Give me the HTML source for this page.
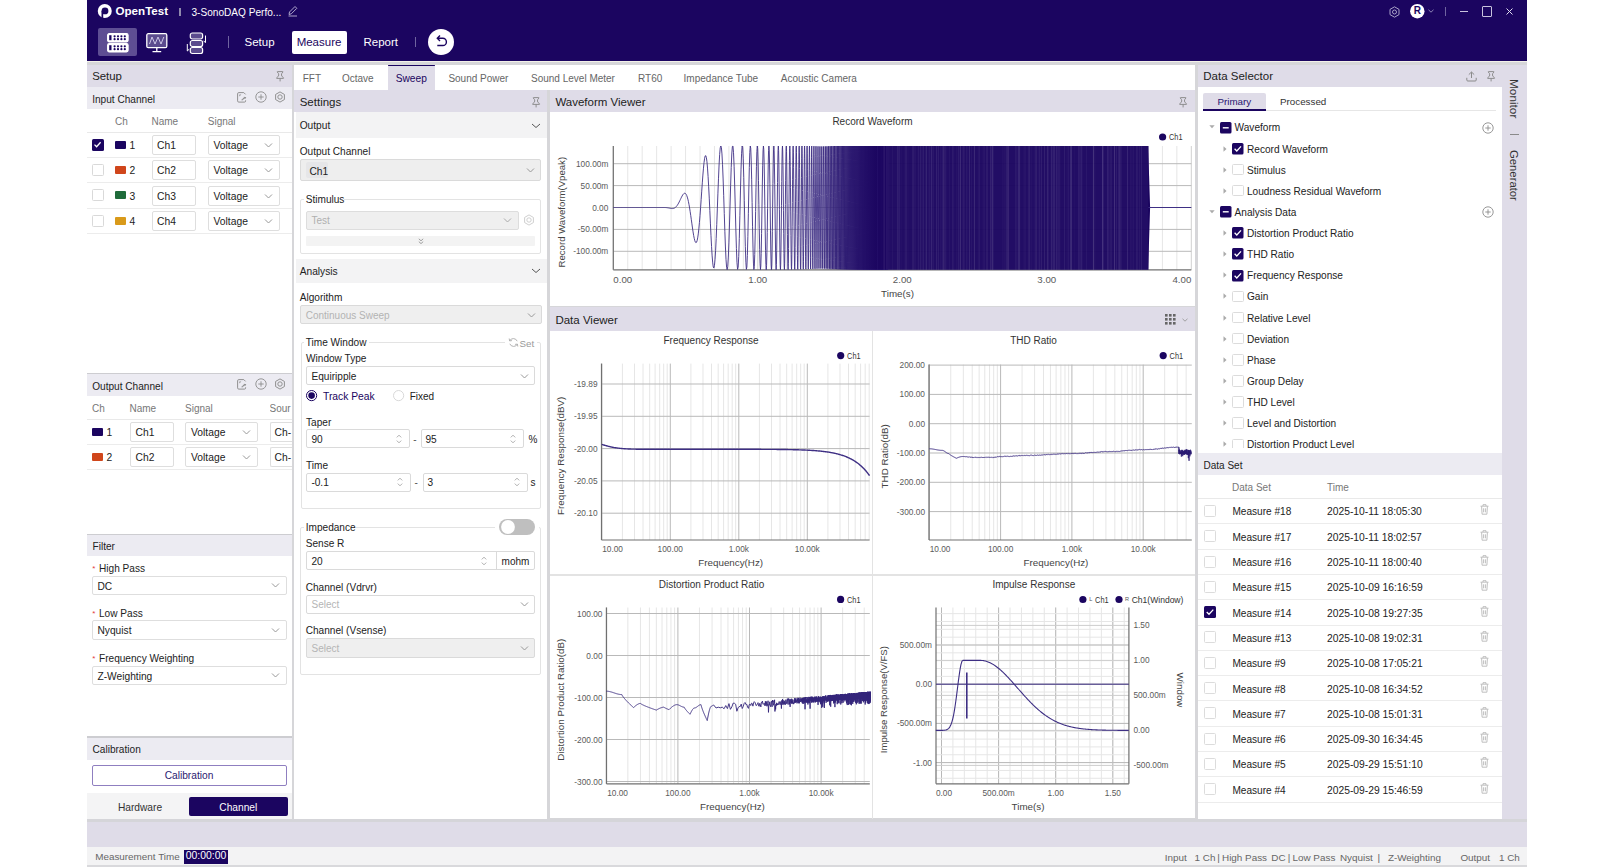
<!DOCTYPE html><html><head><meta charset="utf-8"><style>
html,body{margin:0;padding:0;width:1602px;height:867px;overflow:hidden;background:#fff}
body{position:relative;font-family:"Liberation Sans",sans-serif}
div,svg{position:absolute;box-sizing:content-box}
.t{white-space:nowrap}
svg text{font-family:"Liberation Sans",sans-serif}
</style></head><body>
<div style="left:87px;top:61px;width:1440px;height:806px;background:#d6d6d9"></div>
<div style="left:87px;top:61px;width:1440px;height:1.3px;background:#f3f1e9"></div>
<div style="left:87px;top:0px;width:1440px;height:61px;background:#1b0560"></div>
<svg style="position:absolute;left:97px;top:4px;overflow:visible;" width="15" height="15" viewBox="0 0 15 15"><circle cx="7.75" cy="7" r="7" fill="#fff"/><circle cx="8" cy="6.9" r="3.4" fill="#1b0560"/><rect x="4.5" y="6.9" width="1.7" height="8" fill="#1b0560"/></svg>
<div class="t" style="left:115.5px;top:3.20px;height:16px;line-height:16px;font-size:11.6px;color:#fff;font-weight:700;">OpenTest</div>
<div style="left:179px;top:7.5px;width:1.5px;height:8px;background:#8f89ad"></div>
<div class="t" style="left:191.5px;top:4.50px;height:16px;line-height:16px;font-size:10.1px;color:#fff;font-weight:400;">3-SonoDAQ Perfo...</div>
<svg style="position:absolute;left:287px;top:5px;overflow:visible;" width="11" height="12" viewBox="0 0 11 12"><path d="M2 9.5 L2.5 7 L8 1.5 L9.8 3.3 L4.3 8.8 Z M1.5 11 H10" fill="none" stroke="#bdb6d6" stroke-width="0.9"/></svg>
<div style="left:98px;top:28px;width:39px;height:28px;background:#5e4e93;border-radius:2px"></div>
<svg style="position:absolute;left:107px;top:33px;overflow:visible;" width="22" height="20" viewBox="0 0 22 20"><rect x="0.6" y="0.6" width="20.5" height="8.3" rx="1.6" fill="#fff"/><rect x="0.6" y="10.6" width="20.5" height="8.3" rx="1.6" fill="#fff"/><g fill="none" stroke="#fff" stroke-width="1.1"><rect x="0.6" y="0.6" width="20.5" height="8.3" rx="1.6"/><rect x="0.6" y="10.6" width="20.5" height="8.3" rx="1.6"/></g><rect x="2.2" y="2.2" width="2.3" height="5" fill="#1b0560"/><rect x="2.2" y="12.2" width="2.3" height="5" fill="#1b0560"/><circle cx="7.6" cy="3.3" r="1.1" fill="#1b0560"/><circle cx="11.0" cy="3.3" r="1.1" fill="#1b0560"/><circle cx="14.4" cy="3.3" r="1.1" fill="#1b0560"/><circle cx="17.8" cy="3.3" r="1.1" fill="#1b0560"/><circle cx="7.6" cy="6.2" r="1.1" fill="#1b0560"/><circle cx="11.0" cy="6.2" r="1.1" fill="#1b0560"/><circle cx="14.4" cy="6.2" r="1.1" fill="#1b0560"/><circle cx="17.8" cy="6.2" r="1.1" fill="#1b0560"/><circle cx="7.6" cy="13.3" r="1.1" fill="#1b0560"/><circle cx="11.0" cy="13.3" r="1.1" fill="#1b0560"/><circle cx="14.4" cy="13.3" r="1.1" fill="#1b0560"/><circle cx="17.8" cy="13.3" r="1.1" fill="#1b0560"/><circle cx="7.6" cy="16.2" r="1.1" fill="#1b0560"/><circle cx="11.0" cy="16.2" r="1.1" fill="#1b0560"/><circle cx="14.4" cy="16.2" r="1.1" fill="#1b0560"/><circle cx="17.8" cy="16.2" r="1.1" fill="#1b0560"/></svg>
<svg style="position:absolute;left:146px;top:33px;overflow:visible;" width="22" height="20" viewBox="0 0 22 20"><rect x="0.8" y="0.7" width="20" height="14" rx="1.5" fill="#5b4b8e" stroke="#fff" stroke-width="1.3"/><path d="M3.5 11 L6 4 L9 11 L12 4 L15 11 L17.8 4" fill="none" stroke="#d8d2ee" stroke-width="0.9"/><path d="M10.8 14.7 V18.3 M6.5 18.6 H15.2" stroke="#fff" stroke-width="1.3"/></svg>
<svg style="position:absolute;left:185px;top:32px;overflow:visible;" width="23" height="22" viewBox="0 0 23 22"><g fill="#5b4b8e" stroke="#fff" stroke-width="1.2"><rect x="5.3" y="1" width="12.3" height="6" rx="2"/><rect x="5.3" y="8.5" width="12.3" height="6" rx="2"/><rect x="5.3" y="15.5" width="12.3" height="6" rx="2"/></g><path d="M20.5 3.5 V10.5 M18.6 8.8 L20.5 10.8" fill="none" stroke="#fff" stroke-width="1"/><path d="M2.3 12 V19 M2.3 19 L4.2 17.2" fill="none" stroke="#fff" stroke-width="1"/></svg>
<div style="left:227.5px;top:36px;width:1px;height:12px;background:#6f64a0"></div>
<div class="t" style="left:244.5px;top:34.00px;height:16px;line-height:16px;font-size:11.5px;color:#fff;font-weight:400;">Setup</div>
<div style="left:291.5px;top:31px;width:55px;height:22.5px;background:#fff;border-radius:2px"></div>
<div class="t" style="left:19px;width:600px;text-align:center;top:34.00px;height:16px;line-height:16px;font-size:11.5px;color:#1b0560;font-weight:400;">Measure</div>
<div class="t" style="left:363.5px;top:34.00px;height:16px;line-height:16px;font-size:11.5px;color:#fff;font-weight:400;">Report</div>
<div style="left:415px;top:37px;width:1px;height:10px;background:#6f64a0"></div>
<svg style="position:absolute;left:428px;top:28.5px;overflow:visible;" width="26" height="26" viewBox="0 0 26 26"><circle cx="13" cy="13" r="13" fill="#fff"/><path d="M9.5 9.3 H14.8 A3.6 3.6 0 0 1 14.8 16.5 H9.3 M12 6.6 L9.3 9.3 L12 12" fill="none" stroke="#1b0560" stroke-width="1.4"/></svg>
<svg style="position:absolute;left:1389px;top:5.5px;overflow:visible;" width="11" height="12" viewBox="0 0 11 12"><path d="M5.5 0.8 L10 3.4 V8.6 L5.5 11.2 L1 8.6 V3.4 Z" fill="none" stroke="#aaa3c8" stroke-width="1"/><circle cx="5.5" cy="6" r="2" fill="none" stroke="#aaa3c8" stroke-width="1"/></svg>
<svg style="position:absolute;left:1410px;top:4px;overflow:visible;" width="15" height="15" viewBox="0 0 15 15"><circle cx="7.3" cy="7.2" r="7.2" fill="#fff"/></svg>
<div class="t" style="left:1117.3px;width:600px;text-align:center;top:3.40px;height:16px;line-height:16px;font-size:10px;color:#1b0560;font-weight:700;">R</div>
<svg style="position:absolute;left:1428px;top:9px;overflow:visible;" width="6" height="4" viewBox="0 0 6 4"><path d="M0.5 0.8 L3 3.2 L5.5 0.8" fill="none" stroke="#9c94c0" stroke-width="0.9"/></svg>
<div style="left:1445px;top:7px;width:1px;height:9px;background:#6f64a0"></div>
<div style="left:1460px;top:11px;width:8px;height:1px;background:#c8c3dd"></div>
<div style="left:1481.5px;top:6px;width:8px;height:8.5px;border:1px solid #c8c3dd;border-radius:1px"></div>
<svg style="position:absolute;left:1505.5px;top:8px;overflow:visible;" width="7" height="7" viewBox="0 0 7 7"><path d="M0.5 0.5 L6.5 6.5 M6.5 0.5 L0.5 6.5" stroke="#e0dcef" stroke-width="1"/></svg>
<div style="left:87px;top:65px;width:204.7px;height:22px;background:#dfdce8"></div>
<div class="t" style="left:92.2px;top:68.00px;height:16px;line-height:16px;font-size:11.4px;color:#222222;font-weight:400;">Setup</div>
<svg style="position:absolute;left:275.5px;top:70.6px;overflow:visible;" width="9" height="11" viewBox="0 0 9 11"><path d="M1.2 1 Q1 0.6 1.6 0.6 H6.6 Q7.2 0.6 7 1 Q5.4 2.2 5.4 4 Q5.6 5.6 7.6 6.8 Q7.8 7.4 7.2 7.4 H1 Q0.4 7.4 0.6 6.8 Q2.6 5.6 2.8 4 Q2.8 2.2 1.2 1 Z M4.1 7.4 V10.4" fill="none" stroke="#8a8a8a" stroke-width="0.95" stroke-linejoin="round"/></svg>
<div style="left:87px;top:87px;width:204.7px;height:286px;background:#fff"></div>
<div style="left:87px;top:87px;width:204.7px;height:22px;background:#ecebf2"></div>
<div class="t" style="left:92.2px;top:91.50px;height:16px;line-height:16px;font-size:10.1px;color:#222222;font-weight:400;">Input Channel</div>
<svg style="position:absolute;left:236.6px;top:91.6px;overflow:visible;" width="11" height="11" viewBox="0 0 11 11"><path d="M6.8 0.6 H1.8 Q0.6 0.6 0.6 1.8 V8.9 Q0.6 10.1 1.8 10.1 H7.5 Q8.6 10.1 8.6 9 V8.3 M6.8 0.6 L8.6 2.4" fill="none" stroke="#8c8c8c" stroke-width="0.95"/><path d="M2.4 2.4 H4.3 L2.4 4.6 Z" fill="#8c8c8c"/><path d="M4 7.6 Q5.2 7.9 5.6 6.8 Q6 5.6 7.4 5.6 L6.8 4.7 L9.3 5.3 L8 7.3 L7.6 6.4 Q6.6 6.5 6.4 7.5 Q6 8.6 4.4 8.3 Z" fill="#8c8c8c"/></svg>
<svg style="position:absolute;left:254.5px;top:91.3px;overflow:visible;" width="12" height="12" viewBox="0 0 12 12"><circle cx="6" cy="6" r="5.2" fill="none" stroke="#8c8c8c" stroke-width="0.9"/><path d="M6 3.3 V8.7 M3.3 6 H8.7" stroke="#8c8c8c" stroke-width="0.9"/></svg>
<svg style="position:absolute;left:274.3px;top:91px;overflow:visible;" width="12" height="12" viewBox="0 0 12 12"><path d="M6 0.9 L10.4 3.45 V8.55 L6 11.1 L1.6 8.55 V3.45 Z" fill="none" stroke="#8c8c8c" stroke-width="0.95" stroke-linejoin="round"/><circle cx="6" cy="6" r="2.2" fill="none" stroke="#8c8c8c" stroke-width="0.95"/></svg>
<div class="t" style="left:115px;top:114.00px;height:16px;line-height:16px;font-size:10px;color:#777777;font-weight:400;">Ch</div>
<div class="t" style="left:151.5px;top:114.00px;height:16px;line-height:16px;font-size:10px;color:#777777;font-weight:400;">Name</div>
<div class="t" style="left:207.8px;top:114.00px;height:16px;line-height:16px;font-size:10px;color:#777777;font-weight:400;">Signal</div>
<div style="left:87px;top:131.5px;width:204.7px;height:1px;background:#e9e9e9"></div>
<svg style="position:absolute;left:92px;top:138.79999999999998px;overflow:visible;" width="12" height="12" viewBox="0 0 12 12"><rect x="0" y="0" width="12" height="12" rx="1.5" fill="#1b0560"/><path d="M2.5 5.6 L4.6 7.8 L8.6 3.3" fill="none" stroke="#fff" stroke-width="1.3"/></svg>
<div style="left:115px;top:140.6px;width:11px;height:8px;background:#1b0560;border-radius:1px"></div>
<div class="t" style="left:129.5px;top:138.10px;height:16px;line-height:16px;font-size:10.3px;color:#222222;font-weight:400;">1</div>
<div style="left:151.5px;top:135.1px;width:42.5px;height:18px;border:1px solid #dedede;border-radius:2px;background:#fff"></div>
<div class="t" style="left:157px;top:138.10px;height:16px;line-height:16px;font-size:10.3px;color:#222222;font-weight:400;">Ch1</div>
<div style="left:207.8px;top:135.1px;width:70.5px;height:18px;border:1px solid #dedede;border-radius:2px;background:#fff"></div>
<div class="t" style="left:213.5px;top:138.10px;height:16px;line-height:16px;font-size:10.3px;color:#222222;font-weight:400;">Voltage</div>
<svg style="position:absolute;left:264.0px;top:142.1px;overflow:visible;" width="9.0" height="7.0" viewBox="0 0 9.0 7.0"><path d="M1 1.5 L4.5 5.0 L8.0 1.5" fill="none" stroke="#999" stroke-width="1"/></svg>
<div style="left:87px;top:157.0px;width:204.7px;height:1px;background:#ececec"></div>
<div style="left:92px;top:164.1px;width:10px;height:10px;border:1px solid #d9d9d9;border-radius:1.5px;background:#fff"></div>
<div style="left:115px;top:165.9px;width:11px;height:8px;background:#d0461b;border-radius:1px"></div>
<div class="t" style="left:129.5px;top:163.40px;height:16px;line-height:16px;font-size:10.3px;color:#222222;font-weight:400;">2</div>
<div style="left:151.5px;top:160.4px;width:42.5px;height:18px;border:1px solid #dedede;border-radius:2px;background:#fff"></div>
<div class="t" style="left:157px;top:163.40px;height:16px;line-height:16px;font-size:10.3px;color:#222222;font-weight:400;">Ch2</div>
<div style="left:207.8px;top:160.4px;width:70.5px;height:18px;border:1px solid #dedede;border-radius:2px;background:#fff"></div>
<div class="t" style="left:213.5px;top:163.40px;height:16px;line-height:16px;font-size:10.3px;color:#222222;font-weight:400;">Voltage</div>
<svg style="position:absolute;left:264.0px;top:167.4px;overflow:visible;" width="9.0" height="7.0" viewBox="0 0 9.0 7.0"><path d="M1 1.5 L4.5 5.0 L8.0 1.5" fill="none" stroke="#999" stroke-width="1"/></svg>
<div style="left:87px;top:182.3px;width:204.7px;height:1px;background:#ececec"></div>
<div style="left:92px;top:189.39999999999998px;width:10px;height:10px;border:1px solid #d9d9d9;border-radius:1.5px;background:#fff"></div>
<div style="left:115px;top:191.2px;width:11px;height:8px;background:#1f6b3a;border-radius:1px"></div>
<div class="t" style="left:129.5px;top:188.70px;height:16px;line-height:16px;font-size:10.3px;color:#222222;font-weight:400;">3</div>
<div style="left:151.5px;top:185.7px;width:42.5px;height:18px;border:1px solid #dedede;border-radius:2px;background:#fff"></div>
<div class="t" style="left:157px;top:188.70px;height:16px;line-height:16px;font-size:10.3px;color:#222222;font-weight:400;">Ch3</div>
<div style="left:207.8px;top:185.7px;width:70.5px;height:18px;border:1px solid #dedede;border-radius:2px;background:#fff"></div>
<div class="t" style="left:213.5px;top:188.70px;height:16px;line-height:16px;font-size:10.3px;color:#222222;font-weight:400;">Voltage</div>
<svg style="position:absolute;left:264.0px;top:192.7px;overflow:visible;" width="9.0" height="7.0" viewBox="0 0 9.0 7.0"><path d="M1 1.5 L4.5 5.0 L8.0 1.5" fill="none" stroke="#999" stroke-width="1"/></svg>
<div style="left:87px;top:207.6px;width:204.7px;height:1px;background:#ececec"></div>
<div style="left:92px;top:214.7px;width:10px;height:10px;border:1px solid #d9d9d9;border-radius:1.5px;background:#fff"></div>
<div style="left:115px;top:216.5px;width:11px;height:8px;background:#d99a1a;border-radius:1px"></div>
<div class="t" style="left:129.5px;top:214.00px;height:16px;line-height:16px;font-size:10.3px;color:#222222;font-weight:400;">4</div>
<div style="left:151.5px;top:211.0px;width:42.5px;height:18px;border:1px solid #dedede;border-radius:2px;background:#fff"></div>
<div class="t" style="left:157px;top:214.00px;height:16px;line-height:16px;font-size:10.3px;color:#222222;font-weight:400;">Ch4</div>
<div style="left:207.8px;top:211.0px;width:70.5px;height:18px;border:1px solid #dedede;border-radius:2px;background:#fff"></div>
<div class="t" style="left:213.5px;top:214.00px;height:16px;line-height:16px;font-size:10.3px;color:#222222;font-weight:400;">Voltage</div>
<svg style="position:absolute;left:264.0px;top:218.0px;overflow:visible;" width="9.0" height="7.0" viewBox="0 0 9.0 7.0"><path d="M1 1.5 L4.5 5.0 L8.0 1.5" fill="none" stroke="#999" stroke-width="1"/></svg>
<div style="left:87px;top:232.9px;width:204.7px;height:1px;background:#ececec"></div>
<div style="left:87px;top:372.5px;width:204.7px;height:2px;background:#cdcdd1"></div>
<div style="left:87px;top:374px;width:204.7px;height:159.7px;background:#fff"></div>
<div style="left:87px;top:374px;width:204.7px;height:22px;background:#ecebf2"></div>
<div class="t" style="left:92.2px;top:378.50px;height:16px;line-height:16px;font-size:10.1px;color:#222222;font-weight:400;">Output Channel</div>
<svg style="position:absolute;left:236.6px;top:378.6px;overflow:visible;" width="11" height="11" viewBox="0 0 11 11"><path d="M6.8 0.6 H1.8 Q0.6 0.6 0.6 1.8 V8.9 Q0.6 10.1 1.8 10.1 H7.5 Q8.6 10.1 8.6 9 V8.3 M6.8 0.6 L8.6 2.4" fill="none" stroke="#8c8c8c" stroke-width="0.95"/><path d="M2.4 2.4 H4.3 L2.4 4.6 Z" fill="#8c8c8c"/><path d="M4 7.6 Q5.2 7.9 5.6 6.8 Q6 5.6 7.4 5.6 L6.8 4.7 L9.3 5.3 L8 7.3 L7.6 6.4 Q6.6 6.5 6.4 7.5 Q6 8.6 4.4 8.3 Z" fill="#8c8c8c"/></svg>
<svg style="position:absolute;left:254.5px;top:378.3px;overflow:visible;" width="12" height="12" viewBox="0 0 12 12"><circle cx="6" cy="6" r="5.2" fill="none" stroke="#8c8c8c" stroke-width="0.9"/><path d="M6 3.3 V8.7 M3.3 6 H8.7" stroke="#8c8c8c" stroke-width="0.9"/></svg>
<svg style="position:absolute;left:274.3px;top:378px;overflow:visible;" width="12" height="12" viewBox="0 0 12 12"><path d="M6 0.9 L10.4 3.45 V8.55 L6 11.1 L1.6 8.55 V3.45 Z" fill="none" stroke="#8c8c8c" stroke-width="0.95" stroke-linejoin="round"/><circle cx="6" cy="6" r="2.2" fill="none" stroke="#8c8c8c" stroke-width="0.95"/></svg>
<div style="left:87px;top:396px;width:204.7px;height:80px;overflow:hidden">
</div>
<div class="t" style="left:92px;top:401.00px;height:16px;line-height:16px;font-size:10px;color:#777777;font-weight:400;">Ch</div>
<div class="t" style="left:129.5px;top:401.00px;height:16px;line-height:16px;font-size:10px;color:#777777;font-weight:400;">Name</div>
<div class="t" style="left:185px;top:401.00px;height:16px;line-height:16px;font-size:10px;color:#777777;font-weight:400;">Signal</div>
<div class="t" style="left:269.5px;top:401.00px;height:16px;line-height:16px;font-size:10px;color:#777777;font-weight:400;width:22.2px;overflow:hidden">Sour</div>
<div style="left:87px;top:418.5px;width:204.7px;height:1px;background:#e9e9e9"></div>
<div style="left:92px;top:427.6px;width:11px;height:8px;background:#1b0560;border-radius:1px"></div>
<div class="t" style="left:106.5px;top:425.10px;height:16px;line-height:16px;font-size:10.3px;color:#222222;font-weight:400;">1</div>
<div style="left:129.5px;top:422.1px;width:42px;height:18px;border:1px solid #dedede;border-radius:2px;background:#fff"></div>
<div class="t" style="left:135.5px;top:425.10px;height:16px;line-height:16px;font-size:10.3px;color:#222222;font-weight:400;">Ch1</div>
<div style="left:185px;top:422.1px;width:70.5px;height:18px;border:1px solid #dedede;border-radius:2px;background:#fff"></div>
<div class="t" style="left:191px;top:425.10px;height:16px;line-height:16px;font-size:10.3px;color:#222222;font-weight:400;">Voltage</div>
<svg style="position:absolute;left:241.5px;top:429.1px;overflow:visible;" width="9.0" height="7.0" viewBox="0 0 9.0 7.0"><path d="M1 1.5 L4.5 5.0 L8.0 1.5" fill="none" stroke="#999" stroke-width="1"/></svg>
<div style="left:269.5px;top:422.1px;width:21.2px;height:18px;border:1px solid #dedede;border-right:none;border-radius:2px 0 0 2px;background:#fff"></div>
<div class="t" style="left:274.5px;top:425.10px;height:16px;line-height:16px;font-size:10.3px;color:#222222;font-weight:400;">Ch-</div>
<div style="left:87px;top:443.8px;width:204.7px;height:1px;background:#ececec"></div>
<div style="left:92px;top:452.8px;width:11px;height:8px;background:#d0461b;border-radius:1px"></div>
<div class="t" style="left:106.5px;top:450.30px;height:16px;line-height:16px;font-size:10.3px;color:#222222;font-weight:400;">2</div>
<div style="left:129.5px;top:447.3px;width:42px;height:18px;border:1px solid #dedede;border-radius:2px;background:#fff"></div>
<div class="t" style="left:135.5px;top:450.30px;height:16px;line-height:16px;font-size:10.3px;color:#222222;font-weight:400;">Ch2</div>
<div style="left:185px;top:447.3px;width:70.5px;height:18px;border:1px solid #dedede;border-radius:2px;background:#fff"></div>
<div class="t" style="left:191px;top:450.30px;height:16px;line-height:16px;font-size:10.3px;color:#222222;font-weight:400;">Voltage</div>
<svg style="position:absolute;left:241.5px;top:454.3px;overflow:visible;" width="9.0" height="7.0" viewBox="0 0 9.0 7.0"><path d="M1 1.5 L4.5 5.0 L8.0 1.5" fill="none" stroke="#999" stroke-width="1"/></svg>
<div style="left:269.5px;top:447.3px;width:21.2px;height:18px;border:1px solid #dedede;border-right:none;border-radius:2px 0 0 2px;background:#fff"></div>
<div class="t" style="left:274.5px;top:450.30px;height:16px;line-height:16px;font-size:10.3px;color:#222222;font-weight:400;">Ch-</div>
<div style="left:87px;top:469.0px;width:204.7px;height:1px;background:#ececec"></div>
<div style="left:87px;top:533.5px;width:204.7px;height:2px;background:#cdcdd1"></div>
<div style="left:87px;top:535px;width:204.7px;height:202px;background:#fff"></div>
<div style="left:87px;top:535px;width:204.7px;height:21px;background:#ecebf2"></div>
<div class="t" style="left:92.5px;top:538.50px;height:16px;line-height:16px;font-size:10.1px;color:#222222;font-weight:400;">Filter</div>
<div class="t" style="left:92.3px;top:560.60px;height:16px;line-height:16px;font-size:10px;color:#222222;font-weight:400;"><span style="color:#e23b3b;font-size:8px;position:relative;top:-1px">*</span></div>
<div class="t" style="left:99px;top:560.60px;height:16px;line-height:16px;font-size:10.1px;color:#222222;font-weight:400;">High Pass</div>
<div style="left:92.3px;top:575.6px;width:192.7px;height:17.5px;border:1px solid #dedede;border-radius:2px;background:#fff"></div>
<div class="t" style="left:97.5px;top:578.60px;height:16px;line-height:16px;font-size:10.2px;color:#222222;font-weight:400;">DC</div>
<svg style="position:absolute;left:270.8px;top:582.1px;overflow:visible;" width="9.0" height="7.0" viewBox="0 0 9.0 7.0"><path d="M1 1.5 L4.5 5.0 L8.0 1.5" fill="none" stroke="#999" stroke-width="1"/></svg>
<div class="t" style="left:92.3px;top:605.70px;height:16px;line-height:16px;font-size:10px;color:#222222;font-weight:400;"><span style="color:#e23b3b;font-size:8px;position:relative;top:-1px">*</span></div>
<div class="t" style="left:99px;top:605.70px;height:16px;line-height:16px;font-size:10.1px;color:#222222;font-weight:400;">Low Pass</div>
<div style="left:92.3px;top:620.4px;width:192.7px;height:17.5px;border:1px solid #dedede;border-radius:2px;background:#fff"></div>
<div class="t" style="left:97.5px;top:623.40px;height:16px;line-height:16px;font-size:10.2px;color:#222222;font-weight:400;">Nyquist</div>
<svg style="position:absolute;left:270.8px;top:626.9px;overflow:visible;" width="9.0" height="7.0" viewBox="0 0 9.0 7.0"><path d="M1 1.5 L4.5 5.0 L8.0 1.5" fill="none" stroke="#999" stroke-width="1"/></svg>
<div class="t" style="left:92.3px;top:650.50px;height:16px;line-height:16px;font-size:10px;color:#222222;font-weight:400;"><span style="color:#e23b3b;font-size:8px;position:relative;top:-1px">*</span></div>
<div class="t" style="left:99px;top:650.50px;height:16px;line-height:16px;font-size:10.1px;color:#222222;font-weight:400;">Frequency Weighting</div>
<div style="left:92.3px;top:665.5px;width:192.7px;height:17.5px;border:1px solid #dedede;border-radius:2px;background:#fff"></div>
<div class="t" style="left:97.5px;top:668.50px;height:16px;line-height:16px;font-size:10.2px;color:#222222;font-weight:400;">Z-Weighting</div>
<svg style="position:absolute;left:270.8px;top:672.0px;overflow:visible;" width="9.0" height="7.0" viewBox="0 0 9.0 7.0"><path d="M1 1.5 L4.5 5.0 L8.0 1.5" fill="none" stroke="#999" stroke-width="1"/></svg>
<div style="left:87px;top:736.4px;width:204.7px;height:2px;background:#cdcdd1"></div>
<div style="left:87px;top:738px;width:204.7px;height:81px;background:#fff"></div>
<div style="left:87px;top:738px;width:204.7px;height:21.5px;background:#ecebf2"></div>
<div class="t" style="left:92.5px;top:741.50px;height:16px;line-height:16px;font-size:10.1px;color:#222222;font-weight:400;">Calibration</div>
<div style="left:92px;top:765px;width:192.5px;height:18.5px;border:1px solid #8f7fc0;border-radius:2px;background:#fff"></div>
<div class="t" style="left:-111px;width:600px;text-align:center;top:768.00px;height:16px;line-height:16px;font-size:10.2px;color:#2b1a70;font-weight:400;">Calibration</div>
<div style="left:87px;top:793px;width:204.7px;height:25.8px;background:#f4f4f5"></div>
<div class="t" style="left:-160px;width:600px;text-align:center;top:799.50px;height:16px;line-height:16px;font-size:10.2px;color:#333;font-weight:400;">Hardware</div>
<div style="left:189px;top:796.6px;width:98.5px;height:19.5px;background:#1b0560;border-radius:2px"></div>
<div class="t" style="left:-61.69999999999999px;width:600px;text-align:center;top:799.50px;height:16px;line-height:16px;font-size:10.2px;color:#fff;font-weight:400;">Channel</div>
<div style="left:294px;top:65px;width:901.4px;height:25px;background:#fff"></div>
<div style="left:388px;top:65px;width:46.7px;height:25px;background:#dfdce8"></div>
<div style="left:388px;top:64.8px;width:46.7px;height:1.6px;background:#1b0560;border-radius:1px"></div>
<div class="t" style="left:302.7px;top:71.00px;height:16px;line-height:16px;font-size:10px;color:#666;font-weight:400;">FFT</div>
<div class="t" style="left:342px;top:71.00px;height:16px;line-height:16px;font-size:10px;color:#666;font-weight:400;">Octave</div>
<div class="t" style="left:111.30000000000001px;width:600px;text-align:center;top:70.70px;height:16px;line-height:16px;font-size:10.2px;color:#1b0560;font-weight:400;">Sweep</div>
<div class="t" style="left:448.4px;top:71.00px;height:16px;line-height:16px;font-size:10px;color:#666;font-weight:400;">Sound Power</div>
<div class="t" style="left:531px;top:71.00px;height:16px;line-height:16px;font-size:10px;color:#666;font-weight:400;">Sound Level Meter</div>
<div class="t" style="left:638px;top:71.00px;height:16px;line-height:16px;font-size:10px;color:#666;font-weight:400;">RT60</div>
<div class="t" style="left:683.6px;top:71.00px;height:16px;line-height:16px;font-size:10px;color:#666;font-weight:400;">Impedance Tube</div>
<div class="t" style="left:780.8px;top:71.00px;height:16px;line-height:16px;font-size:10px;color:#666;font-weight:400;">Acoustic Camera</div>
<div style="left:294px;top:90px;width:253px;height:728.5px;background:#fff"></div>
<div style="left:294px;top:90px;width:253px;height:22px;background:#dfdce8"></div>
<div class="t" style="left:299.7px;top:93.50px;height:16px;line-height:16px;font-size:11.5px;color:#222222;font-weight:400;">Settings</div>
<svg style="position:absolute;left:531.5px;top:96.5px;overflow:visible;" width="9" height="11" viewBox="0 0 9 11"><path d="M1.2 1 Q1 0.6 1.6 0.6 H6.6 Q7.2 0.6 7 1 Q5.4 2.2 5.4 4 Q5.6 5.6 7.6 6.8 Q7.8 7.4 7.2 7.4 H1 Q0.4 7.4 0.6 6.8 Q2.6 5.6 2.8 4 Q2.8 2.2 1.2 1 Z M4.1 7.4 V10.4" fill="none" stroke="#8a8a8a" stroke-width="0.95" stroke-linejoin="round"/></svg>
<div style="left:296px;top:112px;width:251px;height:26px;background:#f3f3f4"></div>
<div class="t" style="left:299.7px;top:118.30px;height:16px;line-height:16px;font-size:10.2px;color:#222222;font-weight:400;">Output</div>
<svg style="position:absolute;left:531px;top:121.5px;overflow:visible;" width="10" height="8" viewBox="0 0 10 8"><path d="M1 2 L5 5.5 L9 2" fill="none" stroke="#555" stroke-width="1"/></svg>
<div class="t" style="left:299.7px;top:144.00px;height:16px;line-height:16px;font-size:10.1px;color:#222222;font-weight:400;">Output Channel</div>
<div style="left:300.4px;top:159.2px;width:239.1px;height:19.8px;border:1px solid #dadada;border-radius:2px;background:#eeeeee"></div>
<div style="left:306px;top:162px;width:22px;height:16px;background:#e6e6e8;border-radius:2px"></div>
<div class="t" style="left:309.5px;top:163.50px;height:16px;line-height:16px;font-size:10.2px;color:#222222;font-weight:400;">Ch1</div>
<svg style="position:absolute;left:525.5px;top:167.0px;overflow:visible;" width="9.0" height="7.0" viewBox="0 0 9.0 7.0"><path d="M1 1.5 L4.5 5.0 L8.0 1.5" fill="none" stroke="#999" stroke-width="1"/></svg>
<div style="left:300.4px;top:198.5px;width:239px;height:53px;border:1px solid #e3e3e3;border-radius:2px"></div>
<div style="left:304px;top:194px;width:40px;height:8px;background:#fff"></div>
<div class="t" style="left:305.7px;top:191.80px;height:16px;line-height:16px;font-size:10.1px;color:#222222;font-weight:400;">Stimulus</div>
<div style="left:306px;top:210.5px;width:210.5px;height:17px;border:1px solid #dddddd;border-radius:2px;background:#efefef"></div>
<div class="t" style="left:311.5px;top:213.30px;height:16px;line-height:16px;font-size:10px;color:#b0b0b0;font-weight:400;">Test</div>
<svg style="position:absolute;left:503.0px;top:217.0px;overflow:visible;" width="9.0" height="7.0" viewBox="0 0 9.0 7.0"><path d="M1 1.5 L4.5 5.0 L8.0 1.5" fill="none" stroke="#aaa" stroke-width="1"/></svg>
<svg style="position:absolute;left:523px;top:214px;overflow:visible;" width="12" height="12" viewBox="0 0 12 12"><path d="M6 0.9 L10.4 3.45 V8.55 L6 11.1 L1.6 8.55 V3.45 Z" fill="none" stroke="#cccccc" stroke-width="0.95" stroke-linejoin="round"/><circle cx="6" cy="6" r="2.2" fill="none" stroke="#cccccc" stroke-width="0.95"/></svg>
<div style="left:306px;top:235.8px;width:229px;height:10.7px;background:#f3f3f3;border-radius:1px"></div>
<svg style="position:absolute;left:417.5px;top:238px;overflow:visible;" width="6" height="7" viewBox="0 0 6 7"><path d="M0.8 0.8 L3 2.8 L5.2 0.8 M0.8 3.6 L3 5.6 L5.2 3.6" fill="none" stroke="#888" stroke-width="0.8"/></svg>
<div style="left:296px;top:258.7px;width:251px;height:24.3px;background:#f3f3f4"></div>
<div class="t" style="left:299.7px;top:264.00px;height:16px;line-height:16px;font-size:10.2px;color:#222222;font-weight:400;">Analysis</div>
<svg style="position:absolute;left:531px;top:267px;overflow:visible;" width="10" height="8" viewBox="0 0 10 8"><path d="M1 2 L5 5.5 L9 2" fill="none" stroke="#555" stroke-width="1"/></svg>
<div class="t" style="left:299.7px;top:290.00px;height:16px;line-height:16px;font-size:10.1px;color:#222222;font-weight:400;">Algorithm</div>
<div style="left:300px;top:305.4px;width:239.5px;height:16.6px;border:1px solid #dadada;border-radius:2px;background:#efefef"></div>
<div class="t" style="left:305.7px;top:308.00px;height:16px;line-height:16px;font-size:10px;color:#b3b3b3;font-weight:400;">Continuous Sweep</div>
<svg style="position:absolute;left:526.5px;top:311.5px;overflow:visible;" width="9.0" height="7.0" viewBox="0 0 9.0 7.0"><path d="M1 1.5 L4.5 5.0 L8.0 1.5" fill="none" stroke="#999" stroke-width="1"/></svg>
<div style="left:301px;top:341.7px;width:238px;height:165px;border:1px solid #e3e3e3;border-radius:2px"></div>
<div style="left:304px;top:337px;width:65px;height:8px;background:#fff"></div>
<div class="t" style="left:305.7px;top:334.70px;height:16px;line-height:16px;font-size:10.1px;color:#222222;font-weight:400;">Time Window</div>
<div style="left:505px;top:337px;width:32px;height:9px;background:#fff"></div>
<svg style="position:absolute;left:507.5px;top:336.5px;overflow:visible;" width="11" height="11" viewBox="0 0 11 11"><path d="M9.2 4.2 A4.2 4.2 0 0 0 1.6 3.8 M1.8 6.8 A4.2 4.2 0 0 0 9.4 7.2 M1.2 1.5 L1.6 3.9 L3.9 3.6 M9.8 9.5 L9.4 7.1 L7.1 7.4" fill="none" stroke="#aaa" stroke-width="0.9"/></svg>
<div class="t" style="left:519.5px;top:335.50px;height:16px;line-height:16px;font-size:9.8px;color:#9a9a9a;font-weight:400;">Set</div>
<div class="t" style="left:306px;top:351.00px;height:16px;line-height:16px;font-size:10.1px;color:#222222;font-weight:400;">Window Type</div>
<div style="left:306.4px;top:366px;width:226.6px;height:17px;border:1px solid #dadada;border-radius:2px;background:#fff"></div>
<div class="t" style="left:311.5px;top:368.80px;height:16px;line-height:16px;font-size:10.1px;color:#222222;font-weight:400;">Equiripple</div>
<svg style="position:absolute;left:519.5px;top:372.5px;overflow:visible;" width="9.0" height="7.0" viewBox="0 0 9.0 7.0"><path d="M1 1.5 L4.5 5.0 L8.0 1.5" fill="none" stroke="#999" stroke-width="1"/></svg>
<svg style="position:absolute;left:306.4px;top:390px;overflow:visible;" width="12" height="12" viewBox="0 0 12 12"><circle cx="5.6" cy="5.6" r="5.1" fill="#fff" stroke="#1b0560" stroke-width="1"/><circle cx="5.6" cy="5.6" r="3.3" fill="#1b0560"/></svg>
<div class="t" style="left:323px;top:388.70px;height:16px;line-height:16px;font-size:10.3px;color:#1b0560;font-weight:400;">Track Peak</div>
<svg style="position:absolute;left:393px;top:390px;overflow:visible;" width="12" height="12" viewBox="0 0 12 12"><circle cx="5.6" cy="5.6" r="5.1" fill="#fff" stroke="#d5d5d5" stroke-width="0.9"/></svg>
<div class="t" style="left:409.7px;top:388.70px;height:16px;line-height:16px;font-size:10px;color:#222222;font-weight:400;">Fixed</div>
<div class="t" style="left:306px;top:414.60px;height:16px;line-height:16px;font-size:10.1px;color:#222222;font-weight:400;">Taper</div>
<div style="left:306.4px;top:429.4px;width:101.30000000000001px;height:17px;border:1px solid #dadada;border-radius:2px;background:#fff"></div>
<div class="t" style="left:311.4px;top:431.90px;height:16px;line-height:16px;font-size:10.1px;color:#222222;font-weight:400;">90</div>
<svg style="position:absolute;left:395.7px;top:433.9px;overflow:visible;" width="6" height="10" viewBox="0 0 6 10"><path d="M0.8 3.4 L3 1.2 L5.2 3.4 M0.8 6.6 L3 8.8 L5.2 6.6" fill="none" stroke="#999" stroke-width="0.8"/></svg>
<div class="t" style="left:413.2px;top:431.90px;height:16px;line-height:16px;font-size:10px;color:#555;font-weight:400;">-</div>
<div style="left:306.4px;top:472.7px;width:102.60000000000002px;height:17px;border:1px solid #dadada;border-radius:2px;background:#fff"></div>
<div class="t" style="left:311.4px;top:475.20px;height:16px;line-height:16px;font-size:10.1px;color:#222222;font-weight:400;">-0.1</div>
<svg style="position:absolute;left:397px;top:477.2px;overflow:visible;" width="6" height="10" viewBox="0 0 6 10"><path d="M0.8 3.4 L3 1.2 L5.2 3.4 M0.8 6.6 L3 8.8 L5.2 6.6" fill="none" stroke="#999" stroke-width="0.8"/></svg>
<div class="t" style="left:414.5px;top:475.20px;height:16px;line-height:16px;font-size:10px;color:#555;font-weight:400;">-</div>
<div style="left:420.7px;top:429.4px;width:101.8px;height:17px;border:1px solid #dadada;border-radius:2px;background:#fff"></div>
<div class="t" style="left:425.5px;top:431.90px;height:16px;line-height:16px;font-size:10.1px;color:#222222;font-weight:400;">95</div>
<svg style="position:absolute;left:510px;top:433.9px;overflow:visible;" width="6" height="10" viewBox="0 0 6 10"><path d="M0.8 3.4 L3 1.2 L5.2 3.4 M0.8 6.6 L3 8.8 L5.2 6.6" fill="none" stroke="#999" stroke-width="0.8"/></svg>
<div class="t" style="left:528.5px;top:431.90px;height:16px;line-height:16px;font-size:10px;color:#222222;font-weight:400;">%</div>
<div style="left:422.7px;top:472.7px;width:103.3px;height:17px;border:1px solid #dadada;border-radius:2px;background:#fff"></div>
<div class="t" style="left:427.5px;top:475.20px;height:16px;line-height:16px;font-size:10.1px;color:#222222;font-weight:400;">3</div>
<svg style="position:absolute;left:513.5px;top:477.2px;overflow:visible;" width="6" height="10" viewBox="0 0 6 10"><path d="M0.8 3.4 L3 1.2 L5.2 3.4 M0.8 6.6 L3 8.8 L5.2 6.6" fill="none" stroke="#999" stroke-width="0.8"/></svg>
<div class="t" style="left:530.5px;top:475.20px;height:16px;line-height:16px;font-size:10px;color:#222222;font-weight:400;">s</div>
<div class="t" style="left:306px;top:457.90px;height:16px;line-height:16px;font-size:10.1px;color:#222222;font-weight:400;">Time</div>
<div style="left:300px;top:526.8px;width:239.3px;height:146px;border:1px solid #e3e3e3;border-radius:2px"></div>
<div style="left:304px;top:522px;width:52px;height:8px;background:#fff"></div>
<div class="t" style="left:305.7px;top:519.80px;height:16px;line-height:16px;font-size:10.1px;color:#222222;font-weight:400;">Impedance</div>
<div style="left:495px;top:519px;width:44px;height:17px;background:#fff"></div>
<div style="left:499.4px;top:519px;width:35.6px;height:16.3px;background:#bfbfbf;border-radius:8.2px"></div>
<svg style="position:absolute;left:500.5px;top:520.2px;overflow:visible;" width="14" height="14" viewBox="0 0 14 14"><circle cx="7" cy="7" r="6.9" fill="#fff"/></svg>
<div class="t" style="left:305.7px;top:535.80px;height:16px;line-height:16px;font-size:10.1px;color:#222222;font-weight:400;">Sense R</div>
<div style="left:306.2px;top:551.3px;width:227px;height:17px;border:1px solid #dadada;border-radius:2px;background:#fff"></div>
<div style="left:495.8px;top:551.3px;width:1px;height:19px;background:#dadada"></div>
<div class="t" style="left:311.5px;top:554.00px;height:16px;line-height:16px;font-size:10.1px;color:#222222;font-weight:400;">20</div>
<svg style="position:absolute;left:480.5px;top:556px;overflow:visible;" width="6" height="10" viewBox="0 0 6 10"><path d="M0.8 3.4 L3 1.2 L5.2 3.4 M0.8 6.6 L3 8.8 L5.2 6.6" fill="none" stroke="#999" stroke-width="0.8"/></svg>
<div class="t" style="left:215.5px;width:600px;text-align:center;top:554.00px;height:16px;line-height:16px;font-size:10px;color:#222222;font-weight:400;">mohm</div>
<div class="t" style="left:305.7px;top:579.90px;height:16px;line-height:16px;font-size:10.1px;color:#222222;font-weight:400;">Channel (Vdrvr)</div>
<div style="left:306.2px;top:594.6px;width:227px;height:17.4px;border:1px solid #dadada;border-radius:2px;background:#fff"></div>
<div class="t" style="left:311.5px;top:597.30px;height:16px;line-height:16px;font-size:10px;color:#b5b5b5;font-weight:400;">Select</div>
<svg style="position:absolute;left:520.0px;top:601.0px;overflow:visible;" width="9.0" height="7.0" viewBox="0 0 9.0 7.0"><path d="M1 1.5 L4.5 5.0 L8.0 1.5" fill="none" stroke="#999" stroke-width="1"/></svg>
<div class="t" style="left:305.7px;top:623.00px;height:16px;line-height:16px;font-size:10.1px;color:#222222;font-weight:400;">Channel (Vsense)</div>
<div style="left:306.2px;top:638.2px;width:227px;height:17.4px;border:1px solid #dadada;border-radius:2px;background:#efefef"></div>
<div class="t" style="left:311.5px;top:641.00px;height:16px;line-height:16px;font-size:10px;color:#b5b5b5;font-weight:400;">Select</div>
<svg style="position:absolute;left:520.0px;top:644.5px;overflow:visible;" width="9.0" height="7.0" viewBox="0 0 9.0 7.0"><path d="M1 1.5 L4.5 5.0 L8.0 1.5" fill="none" stroke="#999" stroke-width="1"/></svg>
<div style="left:550px;top:90px;width:645.4px;height:215.6px;background:#fff"></div>
<div style="left:550px;top:90px;width:645.4px;height:22px;background:#dfdce8"></div>
<div class="t" style="left:555.4px;top:93.70px;height:16px;line-height:16px;font-size:11.5px;color:#222222;font-weight:400;">Waveform Viewer</div>
<svg style="position:absolute;left:1179px;top:96.5px;overflow:visible;" width="9" height="11" viewBox="0 0 9 11"><path d="M1.2 1 Q1 0.6 1.6 0.6 H6.6 Q7.2 0.6 7 1 Q5.4 2.2 5.4 4 Q5.6 5.6 7.6 6.8 Q7.8 7.4 7.2 7.4 H1 Q0.4 7.4 0.6 6.8 Q2.6 5.6 2.8 4 Q2.8 2.2 1.2 1 Z M4.1 7.4 V10.4" fill="none" stroke="#8a8a8a" stroke-width="0.95" stroke-linejoin="round"/></svg>
<div style="left:550px;top:307px;width:645.4px;height:511.3px;background:#fff"></div>
<div style="left:550px;top:307px;width:645.4px;height:23.7px;background:#dfdce8"></div>
<div class="t" style="left:555.4px;top:311.70px;height:16px;line-height:16px;font-size:11.5px;color:#222222;font-weight:400;">Data Viewer</div>
<svg style="position:absolute;left:1164.5px;top:314px;overflow:visible;" width="11" height="11" viewBox="0 0 11 11"><rect x="0" y="0" width="2.6" height="2.6" fill="#666"/><rect x="0" y="4" width="2.6" height="2.6" fill="#666"/><rect x="0" y="8" width="2.6" height="2.6" fill="#666"/><rect x="4" y="0" width="2.6" height="2.6" fill="#666"/><rect x="4" y="4" width="2.6" height="2.6" fill="#666"/><rect x="4" y="8" width="2.6" height="2.6" fill="#666"/><rect x="8" y="0" width="2.6" height="2.6" fill="#666"/><rect x="8" y="4" width="2.6" height="2.6" fill="#666"/><rect x="8" y="8" width="2.6" height="2.6" fill="#666"/></svg>
<svg style="position:absolute;left:1182px;top:318px;overflow:visible;" width="6" height="4" viewBox="0 0 6 4"><path d="M0.5 0.8 L3 3.2 L5.5 0.8" fill="none" stroke="#999" stroke-width="0.9"/></svg>
<div style="left:872px;top:330.7px;width:1.3px;height:488px;background:#e3e3e3"></div>
<div style="left:550px;top:574px;width:645.4px;height:1.7px;background:#e3e3e3"></div>
<div style="left:1198px;top:65px;width:304px;height:754px;background:#fff"></div>
<div style="left:1198px;top:65px;width:304px;height:21.5px;background:#dfdce8"></div>
<div class="t" style="left:1203.3px;top:68.30px;height:16px;line-height:16px;font-size:11.5px;color:#222222;font-weight:400;">Data Selector</div>
<svg style="position:absolute;left:1465.5px;top:70.5px;overflow:visible;" width="11" height="11" viewBox="0 0 11 11"><path d="M5.5 7 V1.2 M2.8 3.6 L5.5 1 L8.2 3.6 M0.8 6.8 V9 Q0.8 10 1.8 10 H9.2 Q10.2 10 10.2 9 V6.8" fill="none" stroke="#8a8a8a" stroke-width="1"/></svg>
<svg style="position:absolute;left:1487px;top:70.6px;overflow:visible;" width="9" height="11" viewBox="0 0 9 11"><path d="M1.2 1 Q1 0.6 1.6 0.6 H6.6 Q7.2 0.6 7 1 Q5.4 2.2 5.4 4 Q5.6 5.6 7.6 6.8 Q7.8 7.4 7.2 7.4 H1 Q0.4 7.4 0.6 6.8 Q2.6 5.6 2.8 4 Q2.8 2.2 1.2 1 Z M4.1 7.4 V10.4" fill="none" stroke="#8a8a8a" stroke-width="0.95" stroke-linejoin="round"/></svg>
<div style="left:1203px;top:93px;width:62.6px;height:17.4px;background:#dfdce8;border-radius:2px 2px 0 0"></div>
<div style="left:1203px;top:108.5px;width:62.6px;height:2px;background:#1b0560"></div>
<div style="left:1265.6px;top:109.6px;width:230.8px;height:1px;background:#e6e6e6"></div>
<div class="t" style="left:934.3px;width:600px;text-align:center;top:93.60px;height:16px;line-height:16px;font-size:9.8px;color:#2a1570;font-weight:400;">Primary</div>
<div class="t" style="left:1280px;top:93.60px;height:16px;line-height:16px;font-size:9.8px;color:#333;font-weight:400;">Processed</div>
<div style="left:1198px;top:112px;width:304px;height:336px;overflow:hidden">
<svg style="position:absolute;left:10.5px;top:13.400000000000006px;overflow:visible;" width="6" height="4" viewBox="0 0 6 4"><path d="M0.3 0.3 L3 3.3 L5.7 0.3 Z" fill="#aaa"/></svg>
<svg style="position:absolute;left:22px;top:9.600000000000005px;overflow:visible;" width="11.5" height="11.5" viewBox="0 0 11.5 11.5"><rect x="0" y="0" width="11.5" height="11.5" rx="1.5" fill="#1b0560"/><rect x="2.8" y="5.1" width="5.9" height="1.4" fill="#fff"/></svg>
<div class="t" style="left:36.59999999999991px;top:8.400000000000006px;height:16px;line-height:16px;font-size:10.1px;color:#222222">Waveform</div>
<svg style="position:absolute;left:283.5px;top:9.600000000000005px;overflow:visible;" width="12" height="12" viewBox="0 0 12 12"><circle cx="6" cy="6" r="5.2" fill="none" stroke="#8c8c8c" stroke-width="0.9"/><path d="M6 3.3 V8.7 M3.3 6 H8.7" stroke="#8c8c8c" stroke-width="0.9"/></svg>
<svg style="position:absolute;left:25px;top:33.53px;overflow:visible;" width="4" height="6" viewBox="0 0 4 6"><path d="M0.5 0.3 L3.5 3 L0.5 5.7 Z" fill="#aaa"/></svg>
<svg style="position:absolute;left:34.40000000000009px;top:30.73px;overflow:visible;" width="11.5" height="11.5" viewBox="0 0 11.5 11.5"><rect x="0" y="0" width="11.5" height="11.5" rx="1.5" fill="#1b0560"/><path d="M2.6 5.8 L4.8 8 L9 3.4" fill="none" stroke="#fff" stroke-width="1.3"/></svg>
<div class="t" style="left:49px;top:29.53px;height:16px;line-height:16px;font-size:10.1px;color:#222222">Record Waveform</div>
<svg style="position:absolute;left:25px;top:54.66px;overflow:visible;" width="4" height="6" viewBox="0 0 4 6"><path d="M0.5 0.3 L3.5 3 L0.5 5.7 Z" fill="#aaa"/></svg>
<div style="left:34.40000000000009px;top:51.86px;width:9.5px;height:9.5px;border:1px solid #dcdcdc;border-radius:1.5px;background:#fff"></div>
<div class="t" style="left:49px;top:50.66px;height:16px;line-height:16px;font-size:10.1px;color:#222222">Stimulus</div>
<svg style="position:absolute;left:25px;top:75.79000000000002px;overflow:visible;" width="4" height="6" viewBox="0 0 4 6"><path d="M0.5 0.3 L3.5 3 L0.5 5.7 Z" fill="#aaa"/></svg>
<div style="left:34.40000000000009px;top:72.99000000000002px;width:9.5px;height:9.5px;border:1px solid #dcdcdc;border-radius:1.5px;background:#fff"></div>
<div class="t" style="left:49px;top:71.79000000000002px;height:16px;line-height:16px;font-size:10.1px;color:#222222">Loudness Residual Waveform</div>
<svg style="position:absolute;left:10.5px;top:97.92000000000002px;overflow:visible;" width="6" height="4" viewBox="0 0 6 4"><path d="M0.3 0.3 L3 3.3 L5.7 0.3 Z" fill="#aaa"/></svg>
<svg style="position:absolute;left:22px;top:94.12000000000002px;overflow:visible;" width="11.5" height="11.5" viewBox="0 0 11.5 11.5"><rect x="0" y="0" width="11.5" height="11.5" rx="1.5" fill="#1b0560"/><rect x="2.8" y="5.1" width="5.9" height="1.4" fill="#fff"/></svg>
<div class="t" style="left:36.59999999999991px;top:92.92000000000002px;height:16px;line-height:16px;font-size:10.1px;color:#222222">Analysis Data</div>
<svg style="position:absolute;left:283.5px;top:94.12000000000002px;overflow:visible;" width="12" height="12" viewBox="0 0 12 12"><circle cx="6" cy="6" r="5.2" fill="none" stroke="#8c8c8c" stroke-width="0.9"/><path d="M6 3.3 V8.7 M3.3 6 H8.7" stroke="#8c8c8c" stroke-width="0.9"/></svg>
<svg style="position:absolute;left:25px;top:118.05000000000001px;overflow:visible;" width="4" height="6" viewBox="0 0 4 6"><path d="M0.5 0.3 L3.5 3 L0.5 5.7 Z" fill="#aaa"/></svg>
<svg style="position:absolute;left:34.40000000000009px;top:115.25000000000001px;overflow:visible;" width="11.5" height="11.5" viewBox="0 0 11.5 11.5"><rect x="0" y="0" width="11.5" height="11.5" rx="1.5" fill="#1b0560"/><path d="M2.6 5.8 L4.8 8 L9 3.4" fill="none" stroke="#fff" stroke-width="1.3"/></svg>
<div class="t" style="left:49px;top:114.05000000000001px;height:16px;line-height:16px;font-size:10.1px;color:#222222">Distortion Product Ratio</div>
<svg style="position:absolute;left:25px;top:139.18px;overflow:visible;" width="4" height="6" viewBox="0 0 4 6"><path d="M0.5 0.3 L3.5 3 L0.5 5.7 Z" fill="#aaa"/></svg>
<svg style="position:absolute;left:34.40000000000009px;top:136.38px;overflow:visible;" width="11.5" height="11.5" viewBox="0 0 11.5 11.5"><rect x="0" y="0" width="11.5" height="11.5" rx="1.5" fill="#1b0560"/><path d="M2.6 5.8 L4.8 8 L9 3.4" fill="none" stroke="#fff" stroke-width="1.3"/></svg>
<div class="t" style="left:49px;top:135.18px;height:16px;line-height:16px;font-size:10.1px;color:#222222">THD Ratio</div>
<svg style="position:absolute;left:25px;top:160.31px;overflow:visible;" width="4" height="6" viewBox="0 0 4 6"><path d="M0.5 0.3 L3.5 3 L0.5 5.7 Z" fill="#aaa"/></svg>
<svg style="position:absolute;left:34.40000000000009px;top:157.51px;overflow:visible;" width="11.5" height="11.5" viewBox="0 0 11.5 11.5"><rect x="0" y="0" width="11.5" height="11.5" rx="1.5" fill="#1b0560"/><path d="M2.6 5.8 L4.8 8 L9 3.4" fill="none" stroke="#fff" stroke-width="1.3"/></svg>
<div class="t" style="left:49px;top:156.31px;height:16px;line-height:16px;font-size:10.1px;color:#222222">Frequency Response</div>
<svg style="position:absolute;left:25px;top:181.44px;overflow:visible;" width="4" height="6" viewBox="0 0 4 6"><path d="M0.5 0.3 L3.5 3 L0.5 5.7 Z" fill="#aaa"/></svg>
<div style="left:34.40000000000009px;top:178.64px;width:9.5px;height:9.5px;border:1px solid #dcdcdc;border-radius:1.5px;background:#fff"></div>
<div class="t" style="left:49px;top:177.44px;height:16px;line-height:16px;font-size:10.1px;color:#222222">Gain</div>
<svg style="position:absolute;left:25px;top:202.57px;overflow:visible;" width="4" height="6" viewBox="0 0 4 6"><path d="M0.5 0.3 L3.5 3 L0.5 5.7 Z" fill="#aaa"/></svg>
<div style="left:34.40000000000009px;top:199.76999999999998px;width:9.5px;height:9.5px;border:1px solid #dcdcdc;border-radius:1.5px;background:#fff"></div>
<div class="t" style="left:49px;top:198.57px;height:16px;line-height:16px;font-size:10.1px;color:#222222">Relative Level</div>
<svg style="position:absolute;left:25px;top:223.7px;overflow:visible;" width="4" height="6" viewBox="0 0 4 6"><path d="M0.5 0.3 L3.5 3 L0.5 5.7 Z" fill="#aaa"/></svg>
<div style="left:34.40000000000009px;top:220.89999999999998px;width:9.5px;height:9.5px;border:1px solid #dcdcdc;border-radius:1.5px;background:#fff"></div>
<div class="t" style="left:49px;top:219.7px;height:16px;line-height:16px;font-size:10.1px;color:#222222">Deviation</div>
<svg style="position:absolute;left:25px;top:244.82999999999998px;overflow:visible;" width="4" height="6" viewBox="0 0 4 6"><path d="M0.5 0.3 L3.5 3 L0.5 5.7 Z" fill="#aaa"/></svg>
<div style="left:34.40000000000009px;top:242.02999999999997px;width:9.5px;height:9.5px;border:1px solid #dcdcdc;border-radius:1.5px;background:#fff"></div>
<div class="t" style="left:49px;top:240.82999999999998px;height:16px;line-height:16px;font-size:10.1px;color:#222222">Phase</div>
<svg style="position:absolute;left:25px;top:265.96000000000004px;overflow:visible;" width="4" height="6" viewBox="0 0 4 6"><path d="M0.5 0.3 L3.5 3 L0.5 5.7 Z" fill="#aaa"/></svg>
<div style="left:34.40000000000009px;top:263.16px;width:9.5px;height:9.5px;border:1px solid #dcdcdc;border-radius:1.5px;background:#fff"></div>
<div class="t" style="left:49px;top:261.96000000000004px;height:16px;line-height:16px;font-size:10.1px;color:#222222">Group Delay</div>
<svg style="position:absolute;left:25px;top:287.09000000000003px;overflow:visible;" width="4" height="6" viewBox="0 0 4 6"><path d="M0.5 0.3 L3.5 3 L0.5 5.7 Z" fill="#aaa"/></svg>
<div style="left:34.40000000000009px;top:284.29px;width:9.5px;height:9.5px;border:1px solid #dcdcdc;border-radius:1.5px;background:#fff"></div>
<div class="t" style="left:49px;top:283.09000000000003px;height:16px;line-height:16px;font-size:10.1px;color:#222222">THD Level</div>
<svg style="position:absolute;left:25px;top:308.22px;overflow:visible;" width="4" height="6" viewBox="0 0 4 6"><path d="M0.5 0.3 L3.5 3 L0.5 5.7 Z" fill="#aaa"/></svg>
<div style="left:34.40000000000009px;top:305.42px;width:9.5px;height:9.5px;border:1px solid #dcdcdc;border-radius:1.5px;background:#fff"></div>
<div class="t" style="left:49px;top:304.22px;height:16px;line-height:16px;font-size:10.1px;color:#222222">Level and Distortion</div>
<svg style="position:absolute;left:25px;top:329.35px;overflow:visible;" width="4" height="6" viewBox="0 0 4 6"><path d="M0.5 0.3 L3.5 3 L0.5 5.7 Z" fill="#aaa"/></svg>
<div style="left:34.40000000000009px;top:326.55px;width:9.5px;height:9.5px;border:1px solid #dcdcdc;border-radius:1.5px;background:#fff"></div>
<div class="t" style="left:49px;top:325.35px;height:16px;line-height:16px;font-size:10.1px;color:#222222">Distortion Product Level</div>
</div>
<div style="left:1198px;top:453.3px;width:304px;height:22.2px;background:#ecebf2"></div>
<div class="t" style="left:1203.5px;top:457.50px;height:16px;line-height:16px;font-size:10px;color:#222222;font-weight:400;">Data Set</div>
<div class="t" style="left:1232px;top:480.00px;height:16px;line-height:16px;font-size:10px;color:#777777;font-weight:400;">Data Set</div>
<div class="t" style="left:1327px;top:480.00px;height:16px;line-height:16px;font-size:10px;color:#777777;font-weight:400;">Time</div>
<div style="left:1198px;top:497.8px;width:304px;height:1px;background:#e9e9e9"></div>
<div style="left:1203.5px;top:504.90000000000003px;width:10px;height:10px;border:1px solid #dcdcdc;border-radius:1.5px;background:#fff"></div>
<div class="t" style="left:1232.4px;top:504.40px;height:16px;line-height:16px;font-size:10.1px;color:#222222;font-weight:400;">Measure #18</div>
<div class="t" style="left:1327px;top:504.40px;height:16px;line-height:16px;font-size:10.3px;color:#222222;font-weight:400;">2025-10-11 18:05:30</div>
<svg style="position:absolute;left:1480px;top:504.40000000000003px;overflow:visible;" width="9" height="11" viewBox="0 0 9 11"><path d="M0.5 2.2 H8.5 M3 2 V0.7 H6 V2 M1.6 2.4 L2.1 10.2 H6.9 L7.4 2.4 M3.6 4.3 V8.3 M5.4 4.3 V8.3" fill="none" stroke="#b3b3b3" stroke-width="0.85"/></svg>
<div style="left:1198px;top:523.3px;width:304px;height:1px;background:#ececec"></div>
<div style="left:1203.5px;top:530.2px;width:10px;height:10px;border:1px solid #dcdcdc;border-radius:1.5px;background:#fff"></div>
<div class="t" style="left:1232.4px;top:529.70px;height:16px;line-height:16px;font-size:10.1px;color:#222222;font-weight:400;">Measure #17</div>
<div class="t" style="left:1327px;top:529.70px;height:16px;line-height:16px;font-size:10.3px;color:#222222;font-weight:400;">2025-10-11 18:02:57</div>
<svg style="position:absolute;left:1480px;top:529.7px;overflow:visible;" width="9" height="11" viewBox="0 0 9 11"><path d="M0.5 2.2 H8.5 M3 2 V0.7 H6 V2 M1.6 2.4 L2.1 10.2 H6.9 L7.4 2.4 M3.6 4.3 V8.3 M5.4 4.3 V8.3" fill="none" stroke="#b3b3b3" stroke-width="0.85"/></svg>
<div style="left:1198px;top:548.6px;width:304px;height:1px;background:#ececec"></div>
<div style="left:1203.5px;top:555.5px;width:10px;height:10px;border:1px solid #dcdcdc;border-radius:1.5px;background:#fff"></div>
<div class="t" style="left:1232.4px;top:555.00px;height:16px;line-height:16px;font-size:10.1px;color:#222222;font-weight:400;">Measure #16</div>
<div class="t" style="left:1327px;top:555.00px;height:16px;line-height:16px;font-size:10.3px;color:#222222;font-weight:400;">2025-10-11 18:00:40</div>
<svg style="position:absolute;left:1480px;top:555.0px;overflow:visible;" width="9" height="11" viewBox="0 0 9 11"><path d="M0.5 2.2 H8.5 M3 2 V0.7 H6 V2 M1.6 2.4 L2.1 10.2 H6.9 L7.4 2.4 M3.6 4.3 V8.3 M5.4 4.3 V8.3" fill="none" stroke="#b3b3b3" stroke-width="0.85"/></svg>
<div style="left:1198px;top:573.9px;width:304px;height:1px;background:#ececec"></div>
<div style="left:1203.5px;top:580.8000000000001px;width:10px;height:10px;border:1px solid #dcdcdc;border-radius:1.5px;background:#fff"></div>
<div class="t" style="left:1232.4px;top:580.30px;height:16px;line-height:16px;font-size:10.1px;color:#222222;font-weight:400;">Measure #15</div>
<div class="t" style="left:1327px;top:580.30px;height:16px;line-height:16px;font-size:10.3px;color:#222222;font-weight:400;">2025-10-09 16:16:59</div>
<svg style="position:absolute;left:1480px;top:580.3000000000001px;overflow:visible;" width="9" height="11" viewBox="0 0 9 11"><path d="M0.5 2.2 H8.5 M3 2 V0.7 H6 V2 M1.6 2.4 L2.1 10.2 H6.9 L7.4 2.4 M3.6 4.3 V8.3 M5.4 4.3 V8.3" fill="none" stroke="#b3b3b3" stroke-width="0.85"/></svg>
<div style="left:1198px;top:599.2px;width:304px;height:1px;background:#ececec"></div>
<svg style="position:absolute;left:1203.5px;top:606.1px;overflow:visible;" width="12" height="12" viewBox="0 0 12 12"><rect x="0" y="0" width="12" height="12" rx="1.5" fill="#1b0560"/><path d="M2.7 6 L5 8.3 L9.3 3.6" fill="none" stroke="#fff" stroke-width="1.3"/></svg>
<div class="t" style="left:1232.4px;top:605.60px;height:16px;line-height:16px;font-size:10.1px;color:#222222;font-weight:400;">Measure #14</div>
<div class="t" style="left:1327px;top:605.60px;height:16px;line-height:16px;font-size:10.3px;color:#222222;font-weight:400;">2025-10-08 19:27:35</div>
<svg style="position:absolute;left:1480px;top:605.6px;overflow:visible;" width="9" height="11" viewBox="0 0 9 11"><path d="M0.5 2.2 H8.5 M3 2 V0.7 H6 V2 M1.6 2.4 L2.1 10.2 H6.9 L7.4 2.4 M3.6 4.3 V8.3 M5.4 4.3 V8.3" fill="none" stroke="#b3b3b3" stroke-width="0.85"/></svg>
<div style="left:1198px;top:624.5px;width:304px;height:1px;background:#ececec"></div>
<div style="left:1203.5px;top:631.4px;width:10px;height:10px;border:1px solid #dcdcdc;border-radius:1.5px;background:#fff"></div>
<div class="t" style="left:1232.4px;top:630.90px;height:16px;line-height:16px;font-size:10.1px;color:#222222;font-weight:400;">Measure #13</div>
<div class="t" style="left:1327px;top:630.90px;height:16px;line-height:16px;font-size:10.3px;color:#222222;font-weight:400;">2025-10-08 19:02:31</div>
<svg style="position:absolute;left:1480px;top:630.9px;overflow:visible;" width="9" height="11" viewBox="0 0 9 11"><path d="M0.5 2.2 H8.5 M3 2 V0.7 H6 V2 M1.6 2.4 L2.1 10.2 H6.9 L7.4 2.4 M3.6 4.3 V8.3 M5.4 4.3 V8.3" fill="none" stroke="#b3b3b3" stroke-width="0.85"/></svg>
<div style="left:1198px;top:649.8px;width:304px;height:1px;background:#ececec"></div>
<div style="left:1203.5px;top:656.7px;width:10px;height:10px;border:1px solid #dcdcdc;border-radius:1.5px;background:#fff"></div>
<div class="t" style="left:1232.4px;top:656.20px;height:16px;line-height:16px;font-size:10.1px;color:#222222;font-weight:400;">Measure #9</div>
<div class="t" style="left:1327px;top:656.20px;height:16px;line-height:16px;font-size:10.3px;color:#222222;font-weight:400;">2025-10-08 17:05:21</div>
<svg style="position:absolute;left:1480px;top:656.2px;overflow:visible;" width="9" height="11" viewBox="0 0 9 11"><path d="M0.5 2.2 H8.5 M3 2 V0.7 H6 V2 M1.6 2.4 L2.1 10.2 H6.9 L7.4 2.4 M3.6 4.3 V8.3 M5.4 4.3 V8.3" fill="none" stroke="#b3b3b3" stroke-width="0.85"/></svg>
<div style="left:1198px;top:675.1px;width:304px;height:1px;background:#ececec"></div>
<div style="left:1203.5px;top:682.0px;width:10px;height:10px;border:1px solid #dcdcdc;border-radius:1.5px;background:#fff"></div>
<div class="t" style="left:1232.4px;top:681.50px;height:16px;line-height:16px;font-size:10.1px;color:#222222;font-weight:400;">Measure #8</div>
<div class="t" style="left:1327px;top:681.50px;height:16px;line-height:16px;font-size:10.3px;color:#222222;font-weight:400;">2025-10-08 16:34:52</div>
<svg style="position:absolute;left:1480px;top:681.5px;overflow:visible;" width="9" height="11" viewBox="0 0 9 11"><path d="M0.5 2.2 H8.5 M3 2 V0.7 H6 V2 M1.6 2.4 L2.1 10.2 H6.9 L7.4 2.4 M3.6 4.3 V8.3 M5.4 4.3 V8.3" fill="none" stroke="#b3b3b3" stroke-width="0.85"/></svg>
<div style="left:1198px;top:700.4px;width:304px;height:1px;background:#ececec"></div>
<div style="left:1203.5px;top:707.3000000000001px;width:10px;height:10px;border:1px solid #dcdcdc;border-radius:1.5px;background:#fff"></div>
<div class="t" style="left:1232.4px;top:706.80px;height:16px;line-height:16px;font-size:10.1px;color:#222222;font-weight:400;">Measure #7</div>
<div class="t" style="left:1327px;top:706.80px;height:16px;line-height:16px;font-size:10.3px;color:#222222;font-weight:400;">2025-10-08 15:01:31</div>
<svg style="position:absolute;left:1480px;top:706.8000000000001px;overflow:visible;" width="9" height="11" viewBox="0 0 9 11"><path d="M0.5 2.2 H8.5 M3 2 V0.7 H6 V2 M1.6 2.4 L2.1 10.2 H6.9 L7.4 2.4 M3.6 4.3 V8.3 M5.4 4.3 V8.3" fill="none" stroke="#b3b3b3" stroke-width="0.85"/></svg>
<div style="left:1198px;top:725.7px;width:304px;height:1px;background:#ececec"></div>
<div style="left:1203.5px;top:732.6px;width:10px;height:10px;border:1px solid #dcdcdc;border-radius:1.5px;background:#fff"></div>
<div class="t" style="left:1232.4px;top:732.10px;height:16px;line-height:16px;font-size:10.1px;color:#222222;font-weight:400;">Measure #6</div>
<div class="t" style="left:1327px;top:732.10px;height:16px;line-height:16px;font-size:10.3px;color:#222222;font-weight:400;">2025-09-30 16:34:45</div>
<svg style="position:absolute;left:1480px;top:732.1px;overflow:visible;" width="9" height="11" viewBox="0 0 9 11"><path d="M0.5 2.2 H8.5 M3 2 V0.7 H6 V2 M1.6 2.4 L2.1 10.2 H6.9 L7.4 2.4 M3.6 4.3 V8.3 M5.4 4.3 V8.3" fill="none" stroke="#b3b3b3" stroke-width="0.85"/></svg>
<div style="left:1198px;top:751.0px;width:304px;height:1px;background:#ececec"></div>
<div style="left:1203.5px;top:757.9px;width:10px;height:10px;border:1px solid #dcdcdc;border-radius:1.5px;background:#fff"></div>
<div class="t" style="left:1232.4px;top:757.40px;height:16px;line-height:16px;font-size:10.1px;color:#222222;font-weight:400;">Measure #5</div>
<div class="t" style="left:1327px;top:757.40px;height:16px;line-height:16px;font-size:10.3px;color:#222222;font-weight:400;">2025-09-29 15:51:10</div>
<svg style="position:absolute;left:1480px;top:757.4px;overflow:visible;" width="9" height="11" viewBox="0 0 9 11"><path d="M0.5 2.2 H8.5 M3 2 V0.7 H6 V2 M1.6 2.4 L2.1 10.2 H6.9 L7.4 2.4 M3.6 4.3 V8.3 M5.4 4.3 V8.3" fill="none" stroke="#b3b3b3" stroke-width="0.85"/></svg>
<div style="left:1198px;top:776.3px;width:304px;height:1px;background:#ececec"></div>
<div style="left:1203.5px;top:783.2px;width:10px;height:10px;border:1px solid #dcdcdc;border-radius:1.5px;background:#fff"></div>
<div class="t" style="left:1232.4px;top:782.70px;height:16px;line-height:16px;font-size:10.1px;color:#222222;font-weight:400;">Measure #4</div>
<div class="t" style="left:1327px;top:782.70px;height:16px;line-height:16px;font-size:10.3px;color:#222222;font-weight:400;">2025-09-29 15:46:59</div>
<svg style="position:absolute;left:1480px;top:782.7px;overflow:visible;" width="9" height="11" viewBox="0 0 9 11"><path d="M0.5 2.2 H8.5 M3 2 V0.7 H6 V2 M1.6 2.4 L2.1 10.2 H6.9 L7.4 2.4 M3.6 4.3 V8.3 M5.4 4.3 V8.3" fill="none" stroke="#b3b3b3" stroke-width="0.85"/></svg>
<div style="left:1198px;top:801.6px;width:304px;height:1px;background:#ececec"></div>
<div style="left:1502px;top:65px;width:25px;height:754px;background:#dfdce8"></div>
<div class="t" style="left:1514px;top:78.5px;font-size:11.8px;color:#333;transform-origin:0 0;transform:rotate(90deg) translate(0,-7px);line-height:14px">Monitor</div>
<div style="left:1510px;top:134.2px;width:8.6px;height:1px;background:#8a8a8a"></div>
<div class="t" style="left:1514px;top:149.5px;font-size:11.3px;color:#333;transform-origin:0 0;transform:rotate(90deg) translate(0,-7px);line-height:14px">Generator</div>
<div style="left:87px;top:819px;width:1440px;height:3px;background:#d5d5d9"></div>
<div style="left:87px;top:822px;width:1440px;height:24.5px;background:#dfdce8"></div>
<div style="left:87px;top:846.5px;width:1440px;height:18px;background:#f3f3f4"></div>
<div style="left:87px;top:864.5px;width:1440px;height:2.5px;background:#d9d9dc"></div>
<div class="t" style="left:95.2px;top:849.10px;height:16px;line-height:16px;font-size:9.9px;color:#666;font-weight:400;">Measurement Time</div>
<div style="left:184px;top:849.7px;width:44px;height:13.9px;background:#1b0560"></div>
<div class="t" style="left:-94px;width:600px;text-align:center;top:848.20px;height:16px;line-height:16px;font-size:10.4px;color:#fff;font-weight:400;">00:00:00</div>
<div class="t" style="left:1164.7px;top:849.50px;height:16px;line-height:16px;font-size:9.9px;color:#666;font-weight:400;">Input</div>
<div class="t" style="left:1194.6px;top:849.50px;height:16px;line-height:16px;font-size:9.9px;color:#666;font-weight:400;">1 Ch</div>
<div class="t" style="left:1217.2px;top:849.50px;height:16px;line-height:16px;font-size:9.9px;color:#666;font-weight:400;">|</div>
<div class="t" style="left:1222px;top:849.50px;height:16px;line-height:16px;font-size:9.9px;color:#666;font-weight:400;">High Pass</div>
<div class="t" style="left:1271.3px;top:849.50px;height:16px;line-height:16px;font-size:9.9px;color:#666;font-weight:400;">DC</div>
<div class="t" style="left:1287.8px;top:849.50px;height:16px;line-height:16px;font-size:9.9px;color:#666;font-weight:400;">|</div>
<div class="t" style="left:1292.5px;top:849.50px;height:16px;line-height:16px;font-size:9.9px;color:#666;font-weight:400;">Low Pass</div>
<div class="t" style="left:1339.9px;top:849.50px;height:16px;line-height:16px;font-size:9.9px;color:#666;font-weight:400;">Nyquist</div>
<div class="t" style="left:1377.5px;top:849.50px;height:16px;line-height:16px;font-size:9.9px;color:#666;font-weight:400;">|</div>
<div class="t" style="left:1387.9px;top:849.50px;height:16px;line-height:16px;font-size:9.9px;color:#666;font-weight:400;">Z-Weighting</div>
<div class="t" style="left:1460.4px;top:849.50px;height:16px;line-height:16px;font-size:9.9px;color:#666;font-weight:400;">Output</div>
<div class="t" style="left:1499px;top:849.50px;height:16px;line-height:16px;font-size:9.9px;color:#666;font-weight:400;">1 Ch</div>
<svg style="position:absolute;left:0;top:0;overflow:visible" width="1602" height="867" viewBox="0 0 1602 867" font-family="Liberation Sans, sans-serif"><line x1="613.30" y1="146.00" x2="613.30" y2="269.80" stroke="#d0d0d0" stroke-width="1"/><line x1="627.75" y1="146.00" x2="627.75" y2="269.80" stroke="#e6e6e6" stroke-width="1"/><line x1="642.20" y1="146.00" x2="642.20" y2="269.80" stroke="#e6e6e6" stroke-width="1"/><line x1="656.65" y1="146.00" x2="656.65" y2="269.80" stroke="#e6e6e6" stroke-width="1"/><line x1="671.10" y1="146.00" x2="671.10" y2="269.80" stroke="#e6e6e6" stroke-width="1"/><line x1="685.55" y1="146.00" x2="685.55" y2="269.80" stroke="#e6e6e6" stroke-width="1"/><line x1="700.00" y1="146.00" x2="700.00" y2="269.80" stroke="#e6e6e6" stroke-width="1"/><line x1="714.45" y1="146.00" x2="714.45" y2="269.80" stroke="#e6e6e6" stroke-width="1"/><line x1="728.90" y1="146.00" x2="728.90" y2="269.80" stroke="#e6e6e6" stroke-width="1"/><line x1="743.35" y1="146.00" x2="743.35" y2="269.80" stroke="#e6e6e6" stroke-width="1"/><line x1="757.80" y1="146.00" x2="757.80" y2="269.80" stroke="#d0d0d0" stroke-width="1"/><line x1="772.25" y1="146.00" x2="772.25" y2="269.80" stroke="#e6e6e6" stroke-width="1"/><line x1="786.70" y1="146.00" x2="786.70" y2="269.80" stroke="#e6e6e6" stroke-width="1"/><line x1="801.15" y1="146.00" x2="801.15" y2="269.80" stroke="#e6e6e6" stroke-width="1"/><line x1="815.60" y1="146.00" x2="815.60" y2="269.80" stroke="#e6e6e6" stroke-width="1"/><line x1="830.05" y1="146.00" x2="830.05" y2="269.80" stroke="#e6e6e6" stroke-width="1"/><line x1="844.50" y1="146.00" x2="844.50" y2="269.80" stroke="#e6e6e6" stroke-width="1"/><line x1="858.95" y1="146.00" x2="858.95" y2="269.80" stroke="#e6e6e6" stroke-width="1"/><line x1="873.40" y1="146.00" x2="873.40" y2="269.80" stroke="#e6e6e6" stroke-width="1"/><line x1="887.85" y1="146.00" x2="887.85" y2="269.80" stroke="#e6e6e6" stroke-width="1"/><line x1="902.30" y1="146.00" x2="902.30" y2="269.80" stroke="#d0d0d0" stroke-width="1"/><line x1="916.75" y1="146.00" x2="916.75" y2="269.80" stroke="#e6e6e6" stroke-width="1"/><line x1="931.20" y1="146.00" x2="931.20" y2="269.80" stroke="#e6e6e6" stroke-width="1"/><line x1="945.65" y1="146.00" x2="945.65" y2="269.80" stroke="#e6e6e6" stroke-width="1"/><line x1="960.10" y1="146.00" x2="960.10" y2="269.80" stroke="#e6e6e6" stroke-width="1"/><line x1="974.55" y1="146.00" x2="974.55" y2="269.80" stroke="#e6e6e6" stroke-width="1"/><line x1="989.00" y1="146.00" x2="989.00" y2="269.80" stroke="#e6e6e6" stroke-width="1"/><line x1="1003.45" y1="146.00" x2="1003.45" y2="269.80" stroke="#e6e6e6" stroke-width="1"/><line x1="1017.90" y1="146.00" x2="1017.90" y2="269.80" stroke="#e6e6e6" stroke-width="1"/><line x1="1032.35" y1="146.00" x2="1032.35" y2="269.80" stroke="#e6e6e6" stroke-width="1"/><line x1="1046.80" y1="146.00" x2="1046.80" y2="269.80" stroke="#d0d0d0" stroke-width="1"/><line x1="1061.25" y1="146.00" x2="1061.25" y2="269.80" stroke="#e6e6e6" stroke-width="1"/><line x1="1075.70" y1="146.00" x2="1075.70" y2="269.80" stroke="#e6e6e6" stroke-width="1"/><line x1="1090.15" y1="146.00" x2="1090.15" y2="269.80" stroke="#e6e6e6" stroke-width="1"/><line x1="1104.60" y1="146.00" x2="1104.60" y2="269.80" stroke="#e6e6e6" stroke-width="1"/><line x1="1119.05" y1="146.00" x2="1119.05" y2="269.80" stroke="#e6e6e6" stroke-width="1"/><line x1="1133.50" y1="146.00" x2="1133.50" y2="269.80" stroke="#e6e6e6" stroke-width="1"/><line x1="1147.95" y1="146.00" x2="1147.95" y2="269.80" stroke="#e6e6e6" stroke-width="1"/><line x1="1162.40" y1="146.00" x2="1162.40" y2="269.80" stroke="#e6e6e6" stroke-width="1"/><line x1="1176.85" y1="146.00" x2="1176.85" y2="269.80" stroke="#e6e6e6" stroke-width="1"/><line x1="1191.30" y1="146.00" x2="1191.30" y2="269.80" stroke="#d0d0d0" stroke-width="1"/><line x1="613.30" y1="163.70" x2="1191.30" y2="163.70" stroke="#b9b9b9" stroke-width="1"/><text x="608.30" y="166.70" font-size="8.3" fill="#5a5a5a" text-anchor="end" >100.00m</text><line x1="613.30" y1="185.60" x2="1191.30" y2="185.60" stroke="#b9b9b9" stroke-width="1"/><text x="608.30" y="188.60" font-size="8.3" fill="#5a5a5a" text-anchor="end" >50.00m</text><line x1="613.30" y1="207.50" x2="1191.30" y2="207.50" stroke="#b9b9b9" stroke-width="1"/><text x="608.30" y="210.50" font-size="8.3" fill="#5a5a5a" text-anchor="end" >0.00</text><line x1="613.30" y1="229.40" x2="1191.30" y2="229.40" stroke="#b9b9b9" stroke-width="1"/><text x="608.30" y="232.40" font-size="8.3" fill="#5a5a5a" text-anchor="end" >-50.00m</text><line x1="613.30" y1="251.30" x2="1191.30" y2="251.30" stroke="#b9b9b9" stroke-width="1"/><text x="608.30" y="254.30" font-size="8.3" fill="#5a5a5a" text-anchor="end" >-100.00m</text><line x1="613.30" y1="146.00" x2="613.30" y2="269.80" stroke="#707070" stroke-width="1.2"/><line x1="613.30" y1="269.80" x2="1191.30" y2="269.80" stroke="#707070" stroke-width="1.2"/><text x="613.30" y="282.80" font-size="9.7" fill="#5a5a5a" text-anchor="start" >0.00</text><text x="757.80" y="282.80" font-size="9.7" fill="#5a5a5a" text-anchor="middle" >1.00</text><text x="902.30" y="282.80" font-size="9.7" fill="#5a5a5a" text-anchor="middle" >2.00</text><text x="1046.80" y="282.80" font-size="9.7" fill="#5a5a5a" text-anchor="middle" >3.00</text><text x="1191.30" y="282.80" font-size="9.7" fill="#5a5a5a" text-anchor="end" >4.00</text><text x="897.50" y="297.00" font-size="9.8" fill="#444" text-anchor="middle" >Time(s)</text><text x="872.50" y="124.50" font-size="10" fill="#333" text-anchor="middle" >Record Waveform</text><text transform="translate(564.5 212.20) rotate(-90)" font-size="9.6" fill="#444" text-anchor="middle">Record Waveform(Vpeak)</text><text x="1169.00" y="140.20" font-size="8.6" fill="#333" textLength="13.5" lengthAdjust="spacingAndGlyphs">Ch1</text><circle cx="1162.60" cy="137.00" r="3.6" fill="#1b0560"/><path d="M613.30 207.50 L613.88 207.50 L614.46 207.50 L615.03 207.50 L615.61 207.50 L616.19 207.50 L616.77 207.50 L617.35 207.50 L617.92 207.50 L618.50 207.50 L619.08 207.50 L619.66 207.50 L620.24 207.50 L620.81 207.50 L621.39 207.50 L621.97 207.50 L622.55 207.50 L623.13 207.50 L623.70 207.50 L624.28 207.50 L624.86 207.50 L625.44 207.50 L626.02 207.50 L626.59 207.50 L627.17 207.50 L627.75 207.50 L628.33 207.50 L628.91 207.50 L629.48 207.50 L630.06 207.50 L630.64 207.50 L631.22 207.50 L631.80 207.50 L632.37 207.50 L632.95 207.50 L633.53 207.50 L634.11 207.50 L634.69 207.50 L635.26 207.50 L635.84 207.50 L636.42 207.50 L637.00 207.50 L637.58 207.50 L638.15 207.50 L638.73 207.50 L639.31 207.50 L639.89 207.50 L640.47 207.50 L641.04 207.50 L641.62 207.50 L642.20 207.50 L642.78 207.50 L643.36 207.50 L643.93 207.50 L644.51 207.50 L645.09 207.50 L645.67 207.50 L646.25 207.50 L646.82 207.50 L647.40 207.50 L647.98 207.50 L648.56 207.50 L649.14 207.50 L649.71 207.50 L650.29 207.50 L650.87 207.50 L651.45 207.50 L652.03 207.50 L652.60 207.50 L653.18 207.50 L653.76 207.50 L654.34 207.50 L654.92 207.50 L655.49 207.50 L656.07 207.50 L656.65 207.50 L657.23 207.50 L657.81 207.50 L658.38 207.50 L658.96 207.50 L659.54 207.50 L660.12 207.50 L660.70 207.50 L661.27 207.50 L661.85 207.50 L662.43 207.50 L663.01 207.50 L663.59 207.50 L664.16 207.50 L664.74 207.51 L665.32 207.53 L665.90 207.57 L666.48 207.62 L667.05 207.70 L667.63 207.79 L668.21 207.89 L668.79 208.01 L669.37 208.14 L669.94 208.26 L670.52 208.38 L671.10 208.47 L671.68 208.54 L672.26 208.56 L672.83 208.53 L673.41 208.44 L673.99 208.26 L674.57 207.99 L675.15 207.63 L675.72 207.15 L676.30 206.56 L676.88 205.85 L677.46 205.03 L678.04 204.10 L678.61 203.07 L679.19 201.96 L679.77 200.78 L680.35 199.56 L680.93 198.34 L681.50 197.16 L682.08 196.05 L682.66 195.05 L683.24 194.23 L683.82 193.62 L684.39 193.27 L684.97 193.25 L685.55 193.58 L686.13 194.31 L686.71 195.47 L687.28 197.08 L687.86 199.15 L688.44 201.68 L689.02 204.63 L689.60 207.98 L690.17 211.67 L690.75 215.61 L691.33 219.72 L691.91 223.88 L692.49 227.97 L693.06 231.84 L693.64 235.35 L694.22 238.35 L694.80 240.67 L695.38 242.19 L695.95 242.76 L696.53 242.28 L697.11 240.67 L697.69 237.88 L698.27 233.91 L698.84 228.79 L699.42 222.63 L700.00 215.56 L700.58 207.79 L701.16 199.55 L701.73 191.13 L702.31 182.86 L702.89 175.08 L703.47 168.16 L704.05 162.45 L704.62 158.27 L705.20 155.92 L705.78 155.63 L706.36 157.54 L706.94 161.70 L707.51 168.08 L708.09 176.49 L708.67 186.65 L709.25 198.15 L709.83 210.50 L710.40 223.11 L710.98 235.32 L711.56 246.45 L712.14 255.86 L712.72 262.91 L713.29 267.11 L713.87 268.06 L714.45 265.56 L715.03 259.61 L715.61 250.43 L716.18 238.45 L716.76 224.34 L717.34 208.92 L717.92 193.19 L718.50 178.21 L719.07 165.03 L719.65 154.64 L720.23 147.87 L720.81 146.00 L721.39 147.32 L721.96 153.90 L722.54 164.69 L723.12 178.98 L723.70 195.73 L724.28 213.65 L724.85 231.24 L725.43 246.98 L726.01 259.40 L726.59 267.26 L727.17 269.68 L727.74 266.23 L728.32 257.07 L728.90 242.89 L729.48 224.97 L730.06 205.04 L730.63 185.15 L731.21 167.47 L731.79 154.02 L732.37 146.50 L732.95 146.00 L733.52 152.74 L734.10 166.23 L734.68 184.99 L735.26 206.81 L735.84 228.96 L736.41 248.51 L736.99 262.69 L737.57 269.37 L738.15 267.32 L738.73 256.55 L739.30 238.38 L739.88 215.31 L740.46 190.97 L741.02 169.17 L741.58 153.28 L742.14 146.00 L742.69 147.69 L743.23 158.85 L743.77 177.49 L744.30 200.75 L744.82 225.05 L745.34 246.64 L745.86 262.22 L746.37 269.38 L746.87 267.03 L747.37 255.52 L747.87 236.64 L748.36 213.27 L748.84 189.02 L749.32 167.61 L749.80 152.33 L750.27 146.00 L750.74 148.25 L751.20 160.07 L751.66 179.18 L752.11 202.63 L752.56 226.83 L753.01 248.07 L753.45 263.07 L753.89 269.54 L754.32 266.48 L754.76 254.37 L755.18 235.06 L755.61 211.53 L756.03 187.37 L756.45 166.31 L756.86 151.57 L757.27 146.00 L757.68 148.78 L758.08 161.16 L758.48 180.65 L758.88 204.26 L759.27 228.37 L759.66 249.27 L760.05 263.77 L760.44 269.63 L760.82 265.96 L761.20 253.33 L761.57 233.67 L761.95 210.00 L762.32 185.94 L762.69 165.19 L763.05 150.93 L763.42 146.00 L763.78 149.28 L764.13 162.15 L764.49 181.97 L764.84 205.70 L765.19 229.71 L765.54 250.31 L765.89 264.35 L766.23 269.68 L766.57 265.48 L766.91 252.39 L767.25 232.42 L767.58 208.64 L767.91 184.68 L768.24 164.22 L768.57 150.39 L768.90 146.00 L769.22 149.76 L769.54 163.05 L769.86 183.16 L770.18 206.99 L770.49 230.90 L770.81 251.22 L771.12 264.85 L771.43 269.70 L771.74 265.01 L772.04 251.52 L772.35 231.29 L772.65 207.42 L772.95 183.55 L773.25 163.36 L773.54 149.92 L773.84 146.00 L774.13 150.21 L774.42 163.89 L774.71 184.24 L775.00 208.15 L775.29 231.97 L775.58 252.04 L775.86 265.29 L776.14 269.69 L776.42 264.57 L776.70 250.72 L776.98 230.25 L777.25 206.30 L777.53 182.54 L777.80 162.59 L778.07 149.52 L778.34 146.00 L778.61 150.64 L778.88 164.66 L779.14 185.23 L779.41 209.22 L779.67 232.94 L779.93 252.76 L780.19 265.66 L780.45 269.66 L780.71 264.15 L780.97 249.98 L781.22 229.30 L781.47 205.29 L781.73 181.61 L781.98 161.90 L782.23 149.16 L782.48 146.00 L782.72 151.05 L782.97 165.38 L783.22 186.15 L783.46 210.19 L783.70 233.82 L783.94 253.42 L784.18 266.00 L784.42 269.63 L784.66 263.75 L784.90 249.28 L785.13 228.41 L785.37 204.35 L785.60 180.77 L785.84 161.27 L786.07 148.85 L786.30 146.00 L786.53 151.44 L786.76 166.06 L786.98 187.01 L787.21 211.10 L787.44 234.63 L787.66 254.02 L787.88 266.29 L788.11 269.58 L788.33 263.37 L788.55 248.62 L788.77 227.58 L788.99 203.48 L789.20 179.98 L789.42 160.70 L789.64 148.57 L789.85 146.00 L790.07 151.81 L790.28 166.69 L790.49 187.81 L790.70 211.94 L790.91 235.39 L791.12 254.57 L791.33 266.56 L791.54 269.52 L791.75 263.00 L791.95 248.00 L792.16 226.81 L792.36 202.66 L792.57 179.26 L792.77 160.17 L792.97 148.32 L793.17 146.00 L793.37 152.17 L793.57 167.30 L793.77 188.56 L793.97 212.72 L794.17 236.08 L794.36 255.08 L794.56 266.80 L794.75 269.46 L794.95 262.65 L795.14 247.41 L795.33 226.08 L795.53 201.90 L795.72 178.58 L795.91 159.68 L796.10 148.09 L796.29 146.00 L796.48 152.52 L796.66 167.87 L796.85 189.27 L797.04 213.46 L797.22 236.74 L797.41 255.55 L797.59 267.02 L797.78 269.39 L797.96 262.31 L798.14 246.86 L798.32 225.39 L798.50 201.19 L798.68 177.95 L798.86 159.23 L799.04 147.88 L799.22 146.00 L799.40 152.85 L799.58 168.41 L799.75 189.94 L799.93 214.15 L800.10 237.35 L800.28 255.98 L800.45 267.21 L800.63 269.32 L800.80 261.98 L800.97 246.33 L801.14 224.74 L801.32 200.51 L801.49 177.36 L801.66 158.81 L801.83 147.69 L802.00 146.00 L802.16 153.17 L802.33 168.93 L802.50 190.58 L802.67 214.81 L802.83 237.92 L803.00 256.39 L803.16 267.39 L803.33 269.25 L803.49 261.67 L803.65 245.82 L803.82 224.12 L803.98 199.88 L804.14 176.80 L804.30 158.41 L804.46 147.52 L804.63 146.00 L804.79 153.49 L804.94 169.43 L805.10 191.18 L805.26 215.43 L805.42 238.47 L805.58 256.77 L805.73 267.56 L805.89 269.17 L806.05 261.36 L806.20 245.33 L806.36 223.53 L806.51 199.27 L806.67 176.27 L806.82 158.04 L806.97 147.37 L807.13 146.00 L807.28 153.79 L807.43 169.90 L807.58 191.76 L807.73 216.02 L807.88 238.98 L808.03 257.13 L808.18 267.71 L808.33 269.09 L808.48 261.07 L808.63 244.87 L808.77 222.96 L808.92 198.70 L809.07 175.77 L809.22 157.70 L809.36 147.22 L809.51 146.00 L809.65 154.08 L809.80 170.36 L809.94 192.31 L810.09 216.58 L810.23 239.47 L810.37 257.47 L810.52 267.85 L810.66 269.01 L810.80 260.78 L810.94 244.42 L811.08 222.42 L811.22 198.15 L811.36 175.30 L811.50 157.37 L811.64 147.09 L811.78 146.03 L811.92 154.36 L812.06 170.80 L812.20 192.84 L812.34 217.12 L812.47 239.93 L812.61 257.79 L812.75 267.97 L812.88 268.93 L813.02 260.50 L813.15 243.99 L813.29 221.91 L813.42 197.62 L813.56 174.85 L813.69 157.06 L813.83 146.97 L813.96 146.11 L814.09 154.63 L814.23 171.22 L814.36 193.35 L814.49 217.63 L814.62 240.37 L814.75 258.09 L814.88 268.09 L815.01 268.84 L815.14 260.23 L815.27 243.57 L815.40 221.41 L815.53 197.12 L815.66 174.42 L815.79 156.76 L815.92 146.85 L816.05 146.20 L816.17 154.90 L816.30 171.63 L816.43 193.83 L816.56 218.12 L816.68 240.79 L816.81 258.38 L816.93 268.20 L817.06 268.76 L817.18 259.97 L817.31 243.17 L817.43 220.93 L817.56 196.64 L817.68 174.01 L817.81 156.48 L817.93 146.75 L818.05 146.28 L818.17 155.16 L818.30 172.02 L818.42 194.30 L818.54 218.59 L818.66 241.19 L818.78 258.65 L818.90 268.30 L819.03 268.68 L819.15 259.72 L819.27 242.79 L819.39 220.47 L819.51 196.18 L819.62 173.61 L819.74 156.22 L819.86 146.65 L819.98 146.36 L820.10 155.41 L820.22 172.40 L820.33 194.75 L820.45 219.05 L820.57 241.58 L820.69 258.91 L820.80 268.40 L820.92 268.59 L821.03 259.47 L821.15 242.41 L821.26 220.03 L821.38 195.73 L821.49 173.23 L821.61 155.96 L821.72 146.56 L821.84 146.45 L821.95 155.65 L822.07 172.77 L822.18 195.19 L822.29 219.48 L822.41 241.95 L822.52 259.16 L822.63 268.49 L822.74 268.51 L822.85 259.22 L822.97 242.05 L823.08 219.60 L823.19 195.31 L823.30 172.87 L823.41 155.72 L823.52 146.47 L823.63 146.53 L823.74 155.89 L823.85 173.13 L823.96 195.61 L824.07 219.90 L824.18 242.30 L824.29 259.39 L824.39 268.57 L824.50 268.43 L824.61 258.99 L824.72 241.70 L824.83 219.19 L824.93 194.89 L825.04 172.52 L825.15 155.49 L825.25 146.39 L825.36 146.62 L825.47 156.13 L825.57 173.48 L825.68 196.02 L825.78 220.31 L825.89 242.64 L825.99 259.62 L826.10 268.65 L826.20 268.34 L826.31 258.76 L826.41 241.35 L826.52 218.79 L826.62 194.50 L826.72 172.19 L826.83 155.27 L826.93 146.32 L827.03 146.70 L827.14 156.36 L827.24 173.81 L827.34 196.41 L827.44 220.70 L827.55 242.97 L827.65 259.84 L827.75 268.72 L827.85 268.26 L827.95 258.53 L828.05 241.02 L828.15 218.40 L828.25 194.11 L828.35 171.87 L828.45 155.06 L828.55 146.25 L828.65 146.78 L828.75 156.58 L828.85 174.14 L828.95 196.79 L829.05 221.08 L829.15 243.29 L829.25 260.04 L829.35 268.78 L829.45 268.18 L829.54 258.31 L829.64 240.70 L829.74 218.02 L829.84 193.74 L829.93 171.56 L830.03 154.86 L830.13 146.18 L830.22 146.87 L830.32 156.80 L830.42 174.46 L830.51 197.16 L830.61 221.44 L830.71 243.60 L830.80 260.24 L830.90 268.85 L830.99 268.09 L831.09 258.10 L831.18 240.38 L831.28 217.66 L831.37 193.38 L831.46 171.26 L831.56 154.66 L831.65 146.12 L831.75 146.95 L831.84 157.01 L831.93 174.77 L832.03 197.52 L832.12 221.80 L832.21 243.89 L832.31 260.43 L832.40 268.90 L832.49 268.01 L832.58 257.89 L832.68 240.08 L832.77 217.30 L832.86 193.03 L832.95 170.96 L833.04 154.47 L833.13 146.07 L833.23 147.03 L833.32 157.22 L833.41 175.07 L833.50 197.87 L833.59 222.14 L833.68 244.18 L833.77 260.62 L833.86 268.96 L833.95 267.93 L834.04 257.68 L834.13 239.78 L834.22 216.96 L834.31 192.69 L834.40 170.68 L834.48 154.29 L834.57 146.01 L834.66 147.11 L834.75 157.42 L834.84 175.37 L834.93 198.21 L835.01 222.48 L835.10 244.45 L835.19 260.80 L835.28 269.01 L835.36 267.85 L835.45 257.48 L835.54 239.49 L835.63 216.62 L835.71 192.36 L835.80 170.41 L835.89 154.12 L835.97 146.00 L836.06 147.19 L836.14 157.62 L836.23 175.65 L836.32 198.54 L836.40 222.80 L836.49 244.72 L836.57 260.97 L836.66 269.06 L836.74 267.76 L836.83 257.28 L836.91 239.20 L837.00 216.29 L837.08 192.04 L837.17 170.15 L837.25 153.95 L837.33 146.00 L837.42 147.28 L837.50 157.82 L837.58 175.94 L837.67 198.87 L837.75 223.11 L837.83 244.98 L837.92 261.13 L838.00 269.11 L838.08 267.68 L838.17 257.09 L838.25 238.93 L838.33 215.97 L838.41 191.73 L838.50 169.89 L838.58 153.79 L838.66 146.00 L838.74 147.36 L838.82 158.01 L838.90 176.21 L838.99 199.18 L839.07 223.42 L839.15 245.23 L839.23 261.29 L839.31 269.15 L839.39 267.60 L839.47 256.90 L839.55 238.66 L839.63 215.66 L839.71 191.43 L839.79 169.64 L839.87 153.63 L839.95 146.00 L840.03 147.44 L840.11 158.20 L840.19 176.48 L840.27 199.49 L840.35 223.72 L840.43 245.48 L840.51 261.45 L840.59 269.19 L840.66 267.52 L840.74 256.71 L840.82 238.39 L840.90 215.36 L840.98 191.13 L841.06 169.40 L841.13 153.48 L841.21 146.00 L841.29 147.52 L841.37 158.38 L841.44 176.74 L841.52 199.79 L841.60 224.01 L841.68 245.72 L841.75 261.59 L841.83 269.23 L841.91 267.44 L841.98 256.53 L842.06 238.13 L842.14 215.07 L842.21 190.85 L842.29 169.17 L842.36 153.33 L842.44 146.00 L842.52 147.59 L842.59 158.57 L842.67 177.00 L842.74 200.08 L842.82 224.29 L842.89 245.95 L842.97 261.74 L843.04 269.26 L843.12 267.37 L843.19 256.34 L843.27 237.88 L843.34 214.78 L843.42 190.57 L843.49 168.94 L843.57 153.19 L843.64 146.00 L843.71 147.67 L843.79 158.74 L843.86 177.25 L843.94 200.37 L844.01 224.57 L844.08 246.17 L844.16 261.88 L844.23 269.29 L844.30 267.29 L844.38 256.17 L844.45 237.63 L844.52 214.49 L844.60 190.29 L844.67 168.72 L844.74 153.05 L844.81 146.00 L844.89 147.75 L844.96 158.92 L845.03 177.49 L845.10 200.64 L845.17 224.84 L845.25 246.39 L845.32 262.01 L845.39 269.32 L845.46 267.21 L845.53 255.99 L845.60 237.38 L845.67 214.22 L845.75 190.03 L845.82 168.50 L845.89 152.92 L845.96 146.00 L846.03 147.83 L846.10 159.09 L846.17 177.74 L846.24 200.92 L846.31 225.10 L846.38 246.60 L846.45 262.14 L846.52 269.35 L846.59 267.13 L846.66 255.82 L846.73 237.15 L846.80 213.95 L846.87 189.77 L846.94 168.29 L847.01 152.79 L847.08 146.00 L847.15 147.90 L847.22 159.26 L847.29 177.97 L847.36 201.18 L847.42 225.36 L847.49 246.81 L847.56 262.27 L847.63 269.38 L847.70 267.06 L847.77 255.65 L847.84 236.91 L847.90 213.68 L847.97 189.51 L848.04 168.09 L848.11 152.67 L848.18 146.00 L848.24 147.98 L848.31 159.43 L848.38 178.20 L848.45 201.45 L848.51 225.61 L848.58 247.01 L848.65 262.39 L848.72 269.41 L848.78 266.98 L848.85 255.49 L848.92 236.68 L848.98 213.43 L849.05 189.27 L849.12 167.89 L849.18 152.54 L849.25 146.00 L849.32 148.06 L849.38 159.59 L849.45 178.43 L849.51 201.70 L849.58 225.86 L849.65 247.21 L849.71 262.51 L849.78 269.43 L849.84 266.91 L849.91 255.33 L849.97 236.46 L850.04 213.17 L850.10 189.02 L850.17 167.69 L850.23 152.43 L850.30 146.00 L850.36 148.13 L850.43 159.75 L850.49 178.65 L850.56 201.95 L850.62 226.10 L850.69 247.41 L850.75 262.63 L850.82 269.45 L850.88 266.83 L850.95 255.17 L851.01 236.24 L851.07 212.92 L851.14 188.79 L851.20 167.50 L851.27 152.31 L851.33 146.00 L851.39 148.20 L851.46 159.91 L851.52 178.87 L851.58 202.20 L851.65 226.33 L851.71 247.59 L851.77 262.74 L851.84 269.47 L851.90 266.76 L851.96 255.01 L852.03 236.02 L852.09 212.68 L852.15 188.55 L852.21 167.31 L852.28 152.20 L852.34 146.00 L852.40 148.28 L852.46 160.07 L852.53 179.09 L852.59 202.44 L852.65 226.56 L852.71 247.78 L852.77 262.86 L852.84 269.49 L852.90 266.68 L852.96 254.85 L853.02 235.80 L853.08 212.44 L853.14 188.33 L853.20 167.13 L853.27 152.09 L853.33 146.00 L853.39 148.35 L853.45 160.22 L853.51 179.30 L853.57 202.68 L853.63 226.79 L853.69 247.96 L853.75 262.96 L853.81 269.51 L853.88 266.61 L853.94 254.70 L854.00 235.60 L854.06 212.21 L854.12 188.10 L854.18 166.95 L854.24 151.98 L854.30 146.00 L854.36 148.42 L854.42 160.38 L854.48 179.51 L854.54 202.91 L854.60 227.01 L854.66 248.13 L854.72 263.07 L854.78 269.53 L854.84 266.54 L854.89 254.55 L854.95 235.39 L855.01 211.98 L855.07 187.88 L855.13 166.78 L855.19 151.88 L855.25 146.00 L855.31 148.50 L855.37 160.52 L855.43 179.71 L855.49 203.14 L855.54 227.22 L855.60 248.31 L855.66 263.17 L855.72 269.55 L855.78 266.47 L855.84 254.40 L855.89 235.19 L855.95 211.75 L856.01 187.67 L856.07 166.61 L856.13 151.78 L856.18 146.00 L856.24 148.57 L856.30 160.67 L856.36 179.91 L856.42 203.36 L856.47 227.44 L856.53 248.47 L856.59 263.27 L856.65 269.56 L856.70 266.40 L856.76 254.25 L856.82 234.99 L856.87 211.53 L856.93 187.46 L856.99 166.44 L857.05 151.68 L857.10 146.00 L857.16 148.64 L857.22 160.82 L857.27 180.11 L857.33 203.58 L857.39 227.64 L857.44 248.64 L857.50 263.36 L857.55 269.58 L857.61 266.33 L857.67 254.11 L857.72 234.79 L857.78 211.31 L857.84 187.25 L857.89 166.28 L857.95 151.59 L858.00 146.00 L858.06 148.71 L858.11 160.96 L858.17 180.31 L858.23 203.80 L858.28 227.85 L858.34 248.80 L858.39 263.46 L858.45 269.59 L858.50 266.26 L858.56 253.97 L858.61 234.60 L858.67 211.10 L858.72 187.05 L858.78 166.12 L858.83 151.49 L858.89 146.00 L858.94 148.78 L859.00 161.10 L859.05 180.50 L859.11 204.01 L859.16 228.05 L859.22 248.96 L859.27 263.55 L859.33 269.60 L859.38 266.19 L859.43 253.83 L859.49 234.41 L859.54 210.89 L859.60 186.85 L859.65 165.96 L859.71 151.40 L859.76 146.00 L859.81 148.85 L859.87 161.24 L859.92 180.69 L859.97 204.22 L860.03 228.25 L860.08 249.11 L860.14 263.64 L860.19 269.61 L860.24 266.12 L860.30 253.69 L860.35 234.22 L860.40 210.68 L860.46 186.66 L860.51 165.81 L860.56 151.31 L860.61 146.00 L860.67 148.92 L860.72 161.38 L860.77 180.87 L860.83 204.42 L860.88 228.44 L860.93 249.27 L860.98 263.73 L861.04 269.62 L861.09 266.05 L861.14 253.55 L861.19 234.04 L861.25 210.48 L861.30 186.47 L861.35 165.66 L861.40 151.23 L861.46 146.00 L861.51 148.99 L861.56 161.52 L861.61 181.05 L861.66 204.62 L861.72 228.63 L861.77 249.42 L861.82 263.81 L861.87 269.63 L861.92 265.98 L861.98 253.42 L862.03 233.86 L862.08 210.28 L862.13 186.28 L862.18 165.51 L862.23 151.14 L862.28 146.00 L862.34 149.05 L862.39 161.65 L862.44 181.23 L862.49 204.82 L862.54 228.82 L862.59 249.56 L862.64 263.90 L862.69 269.64 L862.74 265.91 L862.79 253.28 L862.85 233.68 L862.90 210.08 L862.95 186.09 L863.00 165.37 L863.05 151.06 L863.10 146.00 L863.15 149.12 L863.20 161.78 L863.25 181.41 L863.30 205.02 L863.35 229.00 L863.40 249.71 L863.45 263.98 L863.50 269.65 L863.55 265.85 L863.60 253.15 L863.65 233.50 L863.70 209.89 L863.75 185.91 L863.80 165.22 L863.85 150.98 L863.90 146.00 L863.95 149.19 L864.00 161.91 L864.05 181.59 L864.10 205.21 L864.15 229.18 L864.20 249.85 L864.25 264.06 L864.30 269.66 L864.35 265.78 L864.39 253.02 L864.44 233.33 L864.49 209.70 L864.54 185.73 L864.59 165.08 L864.64 150.90 L864.69 146.00 L864.74 149.25 L864.79 162.04 L864.84 181.76 L864.88 205.40 L864.93 229.36 L864.98 249.98 L865.03 264.14 L865.08 269.66 L865.13 265.71 L865.18 252.89 L865.22 233.16 L865.27 209.51 L865.32 185.56 L865.37 164.95 L865.42 150.82 L865.47 146.00 L865.51 149.32 L865.56 162.17 L865.61 181.93 L865.66 205.58 L865.71 229.53 L865.75 250.12 L865.80 264.22 L865.85 269.67 L865.90 265.65 L865.95 252.77 L865.99 232.99 L866.04 209.32 L866.09 185.38 L866.14 164.81 L866.18 150.75 L866.23 146.00 L866.28 149.39 L866.33 162.30 L866.37 182.10 L866.42 205.77 L866.47 229.70 L866.52 250.25 L866.56 264.29 L866.61 269.67 L866.66 265.58 L866.70 252.64 L866.75 232.82 L866.80 209.14 L866.84 185.21 L866.89 164.68 L866.94 150.67 L866.98 146.00 L867.03 149.45 L867.08 162.42 L867.13 182.26 L867.17 205.95 L867.22 229.87 L867.26 250.38 L867.31 264.36 L867.36 269.68 L867.40 265.52 L867.45 252.52 L867.50 232.66 L867.54 208.96 L867.59 185.05 L867.64 164.55 L867.68 150.60 L867.73 146.00 L867.77 149.51 L867.82 162.55 L867.87 182.43 L867.91 206.13 L867.96 230.04 L868.00 250.51 L868.05 264.44 L868.10 269.68 L868.14 265.45 L868.19 252.39 L868.23 232.49 L868.28 208.79 L868.32 184.88 L868.37 164.42 L868.41 150.53 L868.46 146.00 L868.51 149.58 L868.55 162.67 L868.60 182.59 L868.64 206.30 L868.69 230.20 L868.73 250.64 L868.78 264.51 L868.82 269.69 L868.87 265.39 L868.91 252.27 L868.96 232.33 L869.00 208.61 L869.05 184.72 L869.09 164.30 L869.14 150.46 L869.18 146.00 L869.23 149.64 L869.27 162.79 L869.32 182.75 L869.36 206.48 L869.40 230.36 L869.45 250.76 L869.49 264.57 L869.54 269.69 L869.58 265.33 L869.63 252.15 L869.67 232.18 L869.72 208.44 L869.76 184.56 L869.80 164.17 L869.85 150.39 L869.89 146.00 L869.94 149.71 L869.98 162.91 L870.03 182.90 L870.07 206.65 L870.11 230.52 L870.16 250.89 L870.20 264.64 L870.24 269.69 L870.29 265.26 L870.33 252.03 L870.38 232.02 L870.42 208.27 L870.46 184.40 L870.51 164.05 L870.55 150.32 L870.59 146.00 L870.64 149.77 L870.68 163.02 L870.72 183.06 L870.77 206.81 L870.81 230.68 L870.86 251.01 L870.90 264.71 L870.94 269.69 L870.98 265.20 L871.03 251.92 L871.07 231.87 L871.11 208.10 L871.16 184.25 L871.20 163.93 L871.24 150.26 L871.29 146.00 L871.33 149.83 L871.37 163.14 L871.42 183.21 L871.46 206.98 L871.50 230.83 L871.54 251.13 L871.59 264.77 L871.63 269.69 L871.67 265.14 L871.71 251.80 L871.76 231.71 L871.80 207.94 L871.84 184.09 L871.88 163.82 L871.93 150.20 L871.97 146.00 L872.01 149.89 L872.05 163.26 L872.10 183.36 L872.14 207.14 L872.18 230.98 L872.22 251.24 L872.27 264.84 L872.31 269.70 L872.35 265.08 L872.39 251.69 L872.43 231.56 L872.48 207.77 L872.52 183.94 L872.56 163.70 L872.60 150.13 L872.64 146.00 L872.68 149.95 L872.73 163.37 L872.77 183.51 L872.81 207.31 L872.85 231.13 L872.89 251.36 L872.93 264.90 L872.98 269.70 L873.02 265.02 L873.06 251.57 L873.10 231.42 L873.14 207.61 L873.18 183.79 L873.23 163.59 L873.27 150.07 L873.31 146.00 L873.35 150.01 L873.39 163.48 L873.43 183.66 L873.47 207.47 L873.51 231.28 L873.55 251.47 L873.60 264.96 L873.64 269.70 L873.68 264.96 L873.72 251.46 L873.76 231.27 L873.80 207.45 L873.84 183.65 L873.88 163.47 L873.92 150.01 L873.96 146.00 L874.00 150.07 L874.05 163.59 L874.09 183.80 L874.13 207.62 L874.17 231.42 L874.21 251.58 L874.25 265.02 L874.29 269.70 L874.33 264.90 L874.37 251.35 L874.41 231.12 L874.45 207.30 L874.49 183.50 L874.53 163.36 L874.57 149.95 L874.61 146.00 L874.65 150.13 L874.69 163.71 L874.73 183.95 L874.77 207.78 L874.81 231.57 L874.85 251.69 L874.89 265.08 L874.93 269.70 L874.97 264.84 L875.01 251.24 L875.05 230.98 L875.09 207.14 L875.13 183.36 L875.17 163.26 L875.21 149.89 L875.25 146.00 L875.29 150.19 L875.33 163.81 L875.37 184.09 L875.41 207.93 L875.45 231.71 L875.49 251.80 L875.53 265.14 L875.57 269.69 L875.61 264.78 L875.65 251.13 L875.69 230.84 L875.73 206.99 L875.77 183.22 L875.80 163.15 L875.84 149.83 L875.88 146.00 L875.92 150.25 L875.96 163.92 L876.00 184.23 L876.04 208.08 L876.08 231.85 L876.12 251.90 L876.16 265.19 L876.20 269.69 L876.23 264.72 L876.27 251.02 L876.31 230.70 L876.35 206.84 L876.39 183.08 L876.43 163.04 L876.47 149.78 L876.51 146.00 L876.55 150.31 L876.58 164.03 L876.62 184.37 L876.66 208.23 L876.70 231.99 L876.74 252.01 L876.78 265.25 L876.82 269.69 L876.85 264.66 L876.89 250.92 L876.93 230.56 L876.97 206.69 L877.01 182.94 L877.05 162.94 L877.08 149.72 L877.12 146.00 L877.16 150.37 L877.20 164.14 L877.24 184.51 L877.28 208.38 L877.31 232.12 L877.35 252.11 L877.39 265.30 L877.43 269.69 L877.47 264.60 L877.50 250.81 L877.54 230.42 L877.58 206.54 L877.62 182.81 L877.66 162.84 L877.69 149.67 L877.73 146.00 L877.77 150.43 L877.81 164.24 L877.85 184.64 L877.88 208.53 L877.92 232.26 L877.96 252.21 L878.00 265.36 L878.03 269.69 L878.07 264.54 L878.11 250.71 L878.15 230.29 L878.18 206.40 L878.22 182.68 L878.26 162.74 L878.30 149.62 L878.33 146.00 L878.37 150.49 L878.41 164.35 L878.45 184.78 L878.48 208.67 L878.52 232.39 L878.56 252.31 L878.59 265.41 L878.63 269.68 L878.67 264.48 L878.71 250.60 L878.74 230.15 L878.78 206.25 L878.82 182.54 L878.85 162.64 L878.89 149.56 L878.93 146.00 L878.97 150.54 L879.00 164.45 L879.04 184.91 L879.08 208.82 L879.11 232.52 L879.15 252.41 L879.19 265.46 L879.22 269.68 L879.26 264.43 L879.30 250.50 L879.33 230.02 L879.37 206.11 L879.41 182.42 L879.44 162.54 L879.48 149.51 L879.52 146.00 L879.55 150.60 L879.59 164.55 L879.63 185.04 L879.66 208.96 L879.70 232.65 L879.73 252.51 L879.77 265.51 L879.81 269.68 L879.84 264.37 L879.88 250.40 L879.92 229.89 L879.95 205.97 L879.99 182.29 L880.02 162.44 L880.06 149.46 L880.10 146.00 L880.13 150.66 L880.17 164.65 L880.21 185.17 L880.24 209.10 L880.28 232.78 L880.31 252.61 L880.35 265.56 L880.39 269.67 L880.42 264.31 L880.46 250.30 L880.49 229.76 L880.53 205.83 L880.56 182.16 L880.60 162.35 L880.64 149.41 L880.67 146.00 L880.71 150.71 L880.74 164.75 L880.78 185.30 L880.81 209.23 L880.85 232.90 L880.89 252.70 L880.92 265.61 L880.96 269.67 L880.99 264.26 L881.03 250.20 L881.06 229.63 L881.10 205.70 L881.13 182.03 L881.17 162.25 L881.20 149.36 L881.24 146.00 L881.27 150.77 L881.31 164.85 L881.35 185.43 L881.38 209.37 L881.42 233.03 L881.45 252.79 L881.49 265.66 L881.52 269.67 L881.56 264.20 L881.59 250.10 L881.63 229.51 L881.66 205.56 L881.70 181.91 L881.73 162.16 L881.77 149.32 L881.80 146.00 L881.84 150.83 L881.87 164.95 L881.91 185.56 L881.94 209.51 L881.98 233.15 L882.01 252.89 L882.05 265.71 L882.08 269.66 L882.11 264.15 L882.15 250.00 L882.18 229.38 L882.22 205.43 L882.25 181.79 L882.29 162.07 L882.32 149.27 L882.36 146.00 L882.39 150.88 L882.43 165.05 L882.46 185.68 L882.49 209.64 L882.53 233.27 L882.56 252.98 L882.60 265.76 L882.63 269.66 L882.67 264.09 L882.70 249.90 L882.74 229.26 L882.77 205.29 L882.80 181.67 L882.84 161.98 L882.87 149.22 L882.91 146.00 L882.94 150.94 L882.97 165.14 L883.01 185.81 L883.04 209.77 L883.08 233.39 L883.11 253.07 L883.14 265.80 L883.18 269.65 L883.21 264.04 L883.25 249.81 L883.28 229.13 L883.31 205.16 L883.35 181.55 L883.38 161.89 L883.42 149.18 L883.45 146.00 L883.48 150.99 L883.52 165.24 L883.55 185.93 L883.58 209.90 L883.62 233.51 L883.65 253.16 L883.69 265.85 L883.72 269.65 L883.75 263.98 L883.79 249.71 L883.82 229.01 L883.85 205.03 L883.89 181.43 L883.92 161.80 L883.95 149.13 L883.99 146.00 L884.02 151.04 L884.05 165.34 L884.09 186.05 L884.12 210.03 L884.15 233.63 L884.19 253.24 L884.22 265.89 L884.25 269.64 L884.29 263.93 L884.32 249.62 L884.35 228.89 L884.39 204.90 L884.42 181.31 L884.45 161.71 L884.49 149.09 L884.52 146.00 L884.55 151.10 L884.59 165.43 L884.62 186.17 L884.65 210.16 L884.69 233.74 L884.72 253.33 L884.75 265.93 L884.78 269.64 L884.82 263.87 L884.85 249.52 L884.88 228.77 L884.92 204.78 L884.95 181.20 L884.98 161.63 L885.01 149.04 L885.05 146.00 L885.08 151.15 L885.11 165.52 L885.14 186.29 L885.18 210.29 L885.21 233.86 L885.24 253.42 L885.28 265.98 L885.31 269.63 L885.34 263.82 L885.37 249.43 L885.41 228.65 L885.44 204.65 L885.47 181.09 L885.50 161.54 L885.54 149.00 L885.57 146.00 L885.60 151.21 L885.63 165.62 L885.66 186.41 L885.70 210.41 L885.73 233.97 L885.76 253.50 L885.79 266.02 L885.83 269.63 L885.86 263.77 L885.89 249.34 L885.92 228.54 L885.96 204.53 L885.99 180.97 L886.02 161.46 L886.05 148.96 L886.08 146.00 L886.12 151.26 L886.15 165.71 L886.18 186.52 L886.21 210.53 L886.24 234.08 L886.28 253.58 L886.31 266.06 L886.34 269.62 L886.37 263.72 L886.40 249.25 L886.44 228.42 L886.47 204.40 L886.50 180.86 L886.53 161.38 L886.56 148.92 L886.59 146.00 L886.63 151.31 L886.66 165.80 L886.69 186.64 L886.72 210.66 L886.75 234.19 L886.78 253.66 L886.82 266.10 L886.85 269.61 L886.88 263.66 L886.91 249.16 L886.94 228.30 L886.97 204.28 L887.01 180.75 L887.04 161.29 L887.07 148.88 L887.10 146.00 L887.13 151.36 L887.16 165.89 L887.19 186.75 L887.23 210.78 L887.26 234.30 L887.29 253.75 L887.32 266.14 L887.35 269.61 L887.38 263.61 L887.41 249.07 L887.44 228.19 L887.48 204.16 L887.51 180.64 L887.54 161.21 L887.57 148.84 L887.60 146.00 L887.63 151.41 L887.66 165.98 L887.69 186.87 L887.73 210.90 L887.76 234.41 L887.79 253.83 L887.82 266.18 L887.85 269.60" fill="none" stroke="#3e2f84" stroke-width="0.9" stroke-linejoin="round" /><defs><linearGradient id="gw" x1="0" x2="1"><stop offset="0" stop-color="#1b0560" stop-opacity="0"/><stop offset="0.4" stop-color="#1b0560" stop-opacity="0.45"/><stop offset="1" stop-color="#1b0560" stop-opacity="1"/></linearGradient></defs><rect x="818.49" y="146" width="59.24" height="123.80000000000001" fill="url(#gw)"/><rect x="877.73" y="146" width="270.77" height="123.80000000000001" fill="#1b0560" opacity="0.97"/><line x1="943.9" y1="146" x2="943.9" y2="269.8" stroke="#fff" stroke-opacity="0.08" stroke-width="0.6"/><line x1="1041.2" y1="146" x2="1041.2" y2="269.8" stroke="#fff" stroke-opacity="0.09" stroke-width="0.4"/><line x1="884.1" y1="146" x2="884.1" y2="269.8" stroke="#fff" stroke-opacity="0.11" stroke-width="0.6"/><line x1="942.9" y1="146" x2="942.9" y2="269.8" stroke="#fff" stroke-opacity="0.12" stroke-width="0.7"/><line x1="1103.0" y1="146" x2="1103.0" y2="269.8" stroke="#fff" stroke-opacity="0.07" stroke-width="0.8"/><line x1="920.7" y1="146" x2="920.7" y2="269.8" stroke="#fff" stroke-opacity="0.09" stroke-width="0.9"/><line x1="1019.7" y1="146" x2="1019.7" y2="269.8" stroke="#fff" stroke-opacity="0.10" stroke-width="0.8"/><line x1="897.6" y1="146" x2="897.6" y2="269.8" stroke="#fff" stroke-opacity="0.10" stroke-width="0.8"/><line x1="960.7" y1="146" x2="960.7" y2="269.8" stroke="#fff" stroke-opacity="0.03" stroke-width="0.9"/><line x1="1006.3" y1="146" x2="1006.3" y2="269.8" stroke="#fff" stroke-opacity="0.09" stroke-width="0.9"/><line x1="1070.5" y1="146" x2="1070.5" y2="269.8" stroke="#fff" stroke-opacity="0.11" stroke-width="0.6"/><line x1="1093.6" y1="146" x2="1093.6" y2="269.8" stroke="#fff" stroke-opacity="0.07" stroke-width="1.0"/><line x1="1114.3" y1="146" x2="1114.3" y2="269.8" stroke="#fff" stroke-opacity="0.04" stroke-width="0.5"/><line x1="938.3" y1="146" x2="938.3" y2="269.8" stroke="#fff" stroke-opacity="0.12" stroke-width="0.7"/><line x1="1047.2" y1="146" x2="1047.2" y2="269.8" stroke="#fff" stroke-opacity="0.06" stroke-width="0.7"/><line x1="983.2" y1="146" x2="983.2" y2="269.8" stroke="#fff" stroke-opacity="0.06" stroke-width="0.8"/><line x1="1036.0" y1="146" x2="1036.0" y2="269.8" stroke="#fff" stroke-opacity="0.11" stroke-width="0.8"/><line x1="1127.6" y1="146" x2="1127.6" y2="269.8" stroke="#fff" stroke-opacity="0.11" stroke-width="1.0"/><line x1="1059.1" y1="146" x2="1059.1" y2="269.8" stroke="#fff" stroke-opacity="0.04" stroke-width="0.9"/><line x1="1137.1" y1="146" x2="1137.1" y2="269.8" stroke="#fff" stroke-opacity="0.11" stroke-width="0.7"/><line x1="1070.4" y1="146" x2="1070.4" y2="269.8" stroke="#fff" stroke-opacity="0.05" stroke-width="0.9"/><line x1="1033.1" y1="146" x2="1033.1" y2="269.8" stroke="#fff" stroke-opacity="0.06" stroke-width="0.4"/><line x1="1107.7" y1="146" x2="1107.7" y2="269.8" stroke="#fff" stroke-opacity="0.12" stroke-width="0.5"/><line x1="1093.5" y1="146" x2="1093.5" y2="269.8" stroke="#fff" stroke-opacity="0.07" stroke-width="0.5"/><line x1="958.8" y1="146" x2="958.8" y2="269.8" stroke="#fff" stroke-opacity="0.10" stroke-width="0.9"/><line x1="892.4" y1="146" x2="892.4" y2="269.8" stroke="#fff" stroke-opacity="0.09" stroke-width="0.4"/><line x1="1071.6" y1="146" x2="1071.6" y2="269.8" stroke="#fff" stroke-opacity="0.06" stroke-width="0.9"/><line x1="1141.4" y1="146" x2="1141.4" y2="269.8" stroke="#fff" stroke-opacity="0.08" stroke-width="1.0"/><line x1="963.0" y1="146" x2="963.0" y2="269.8" stroke="#fff" stroke-opacity="0.04" stroke-width="0.8"/><line x1="889.0" y1="146" x2="889.0" y2="269.8" stroke="#fff" stroke-opacity="0.05" stroke-width="0.6"/><line x1="1042.9" y1="146" x2="1042.9" y2="269.8" stroke="#fff" stroke-opacity="0.04" stroke-width="0.4"/><line x1="1111.3" y1="146" x2="1111.3" y2="269.8" stroke="#fff" stroke-opacity="0.06" stroke-width="1.0"/><line x1="1119.0" y1="146" x2="1119.0" y2="269.8" stroke="#fff" stroke-opacity="0.06" stroke-width="0.7"/><line x1="1018.9" y1="146" x2="1018.9" y2="269.8" stroke="#fff" stroke-opacity="0.09" stroke-width="0.8"/><line x1="1029.3" y1="146" x2="1029.3" y2="269.8" stroke="#fff" stroke-opacity="0.09" stroke-width="1.0"/><line x1="1015.4" y1="146" x2="1015.4" y2="269.8" stroke="#fff" stroke-opacity="0.07" stroke-width="0.8"/><line x1="943.8" y1="146" x2="943.8" y2="269.8" stroke="#fff" stroke-opacity="0.06" stroke-width="1.0"/><line x1="1019.2" y1="146" x2="1019.2" y2="269.8" stroke="#fff" stroke-opacity="0.08" stroke-width="0.4"/><line x1="991.0" y1="146" x2="991.0" y2="269.8" stroke="#fff" stroke-opacity="0.08" stroke-width="0.4"/><line x1="1044.4" y1="146" x2="1044.4" y2="269.8" stroke="#fff" stroke-opacity="0.09" stroke-width="0.4"/><line x1="1047.4" y1="146" x2="1047.4" y2="269.8" stroke="#fff" stroke-opacity="0.07" stroke-width="0.8"/><line x1="974.4" y1="146" x2="974.4" y2="269.8" stroke="#fff" stroke-opacity="0.09" stroke-width="0.8"/><line x1="886.5" y1="146" x2="886.5" y2="269.8" stroke="#fff" stroke-opacity="0.04" stroke-width="0.8"/><line x1="1136.7" y1="146" x2="1136.7" y2="269.8" stroke="#fff" stroke-opacity="0.05" stroke-width="0.7"/><line x1="1038.2" y1="146" x2="1038.2" y2="269.8" stroke="#fff" stroke-opacity="0.06" stroke-width="0.6"/><line x1="963.8" y1="146" x2="963.8" y2="269.8" stroke="#fff" stroke-opacity="0.06" stroke-width="0.8"/><line x1="960.5" y1="146" x2="960.5" y2="269.8" stroke="#fff" stroke-opacity="0.06" stroke-width="0.9"/><line x1="887.8" y1="146" x2="887.8" y2="269.8" stroke="#fff" stroke-opacity="0.08" stroke-width="0.8"/><line x1="963.1" y1="146" x2="963.1" y2="269.8" stroke="#fff" stroke-opacity="0.05" stroke-width="0.9"/><line x1="944.1" y1="146" x2="944.1" y2="269.8" stroke="#fff" stroke-opacity="0.05" stroke-width="0.7"/><line x1="1066.2" y1="146" x2="1066.2" y2="269.8" stroke="#fff" stroke-opacity="0.04" stroke-width="0.6"/><line x1="969.4" y1="146" x2="969.4" y2="269.8" stroke="#fff" stroke-opacity="0.11" stroke-width="0.7"/><line x1="1108.1" y1="146" x2="1108.1" y2="269.8" stroke="#fff" stroke-opacity="0.05" stroke-width="0.6"/><line x1="1053.5" y1="146" x2="1053.5" y2="269.8" stroke="#fff" stroke-opacity="0.11" stroke-width="0.7"/><line x1="940.5" y1="146" x2="940.5" y2="269.8" stroke="#fff" stroke-opacity="0.04" stroke-width="0.7"/><line x1="931.4" y1="146" x2="931.4" y2="269.8" stroke="#fff" stroke-opacity="0.10" stroke-width="0.9"/><line x1="929.4" y1="146" x2="929.4" y2="269.8" stroke="#fff" stroke-opacity="0.06" stroke-width="0.9"/><line x1="1051.3" y1="146" x2="1051.3" y2="269.8" stroke="#fff" stroke-opacity="0.10" stroke-width="0.6"/><line x1="915.1" y1="146" x2="915.1" y2="269.8" stroke="#fff" stroke-opacity="0.06" stroke-width="0.9"/><line x1="952.7" y1="146" x2="952.7" y2="269.8" stroke="#fff" stroke-opacity="0.06" stroke-width="0.7"/><line x1="992.2" y1="146" x2="992.2" y2="269.8" stroke="#fff" stroke-opacity="0.07" stroke-width="1.0"/><line x1="922.1" y1="146" x2="922.1" y2="269.8" stroke="#fff" stroke-opacity="0.03" stroke-width="1.0"/><line x1="1114.6" y1="146" x2="1114.6" y2="269.8" stroke="#fff" stroke-opacity="0.12" stroke-width="0.7"/><line x1="1133.2" y1="146" x2="1133.2" y2="269.8" stroke="#fff" stroke-opacity="0.11" stroke-width="0.5"/><line x1="1078.8" y1="146" x2="1078.8" y2="269.8" stroke="#fff" stroke-opacity="0.11" stroke-width="0.8"/><line x1="1018.6" y1="146" x2="1018.6" y2="269.8" stroke="#fff" stroke-opacity="0.06" stroke-width="0.6"/><line x1="941.1" y1="146" x2="941.1" y2="269.8" stroke="#fff" stroke-opacity="0.04" stroke-width="0.8"/><line x1="956.9" y1="146" x2="956.9" y2="269.8" stroke="#fff" stroke-opacity="0.10" stroke-width="0.4"/><line x1="1120.9" y1="146" x2="1120.9" y2="269.8" stroke="#fff" stroke-opacity="0.09" stroke-width="1.0"/><line x1="1119.0" y1="146" x2="1119.0" y2="269.8" stroke="#fff" stroke-opacity="0.11" stroke-width="0.7"/><line x1="884.1" y1="146" x2="884.1" y2="269.8" stroke="#fff" stroke-opacity="0.10" stroke-width="0.5"/><line x1="960.4" y1="146" x2="960.4" y2="269.8" stroke="#fff" stroke-opacity="0.09" stroke-width="0.7"/><line x1="990.6" y1="146" x2="990.6" y2="269.8" stroke="#fff" stroke-opacity="0.11" stroke-width="0.8"/><line x1="971.4" y1="146" x2="971.4" y2="269.8" stroke="#fff" stroke-opacity="0.05" stroke-width="0.9"/><line x1="1007.5" y1="146" x2="1007.5" y2="269.8" stroke="#fff" stroke-opacity="0.10" stroke-width="0.6"/><line x1="933.1" y1="146" x2="933.1" y2="269.8" stroke="#fff" stroke-opacity="0.08" stroke-width="0.9"/><line x1="926.2" y1="146" x2="926.2" y2="269.8" stroke="#fff" stroke-opacity="0.10" stroke-width="1.0"/><line x1="1094.9" y1="146" x2="1094.9" y2="269.8" stroke="#fff" stroke-opacity="0.10" stroke-width="0.4"/><line x1="1047.8" y1="146" x2="1047.8" y2="269.8" stroke="#fff" stroke-opacity="0.11" stroke-width="0.4"/><line x1="952.8" y1="146" x2="952.8" y2="269.8" stroke="#fff" stroke-opacity="0.05" stroke-width="0.7"/><line x1="993.1" y1="146" x2="993.1" y2="269.8" stroke="#fff" stroke-opacity="0.07" stroke-width="0.9"/><line x1="881.1" y1="146" x2="881.1" y2="269.8" stroke="#fff" stroke-opacity="0.03" stroke-width="0.5"/><line x1="913.8" y1="146" x2="913.8" y2="269.8" stroke="#fff" stroke-opacity="0.04" stroke-width="1.0"/><line x1="1107.8" y1="146" x2="1107.8" y2="269.8" stroke="#fff" stroke-opacity="0.04" stroke-width="0.7"/><line x1="964.6" y1="146" x2="964.6" y2="269.8" stroke="#fff" stroke-opacity="0.06" stroke-width="0.6"/><line x1="1052.6" y1="146" x2="1052.6" y2="269.8" stroke="#fff" stroke-opacity="0.08" stroke-width="0.6"/><line x1="931.4" y1="146" x2="931.4" y2="269.8" stroke="#fff" stroke-opacity="0.06" stroke-width="0.5"/><line x1="1028.3" y1="146" x2="1028.3" y2="269.8" stroke="#fff" stroke-opacity="0.09" stroke-width="0.6"/><line x1="901.9" y1="146" x2="901.9" y2="269.8" stroke="#fff" stroke-opacity="0.05" stroke-width="0.6"/><line x1="1041.3" y1="146" x2="1041.3" y2="269.8" stroke="#fff" stroke-opacity="0.10" stroke-width="0.6"/><line x1="1093.6" y1="146" x2="1093.6" y2="269.8" stroke="#fff" stroke-opacity="0.09" stroke-width="0.7"/><line x1="979.6" y1="146" x2="979.6" y2="269.8" stroke="#fff" stroke-opacity="0.07" stroke-width="0.8"/><line x1="992.4" y1="146" x2="992.4" y2="269.8" stroke="#fff" stroke-opacity="0.09" stroke-width="0.7"/><line x1="945.8" y1="146" x2="945.8" y2="269.8" stroke="#fff" stroke-opacity="0.08" stroke-width="0.8"/><line x1="899.7" y1="146" x2="899.7" y2="269.8" stroke="#fff" stroke-opacity="0.07" stroke-width="0.7"/><line x1="1114.5" y1="146" x2="1114.5" y2="269.8" stroke="#fff" stroke-opacity="0.11" stroke-width="0.6"/><line x1="1119.3" y1="146" x2="1119.3" y2="269.8" stroke="#fff" stroke-opacity="0.10" stroke-width="0.6"/><line x1="1004.0" y1="146" x2="1004.0" y2="269.8" stroke="#fff" stroke-opacity="0.04" stroke-width="0.9"/><line x1="1056.7" y1="146" x2="1056.7" y2="269.8" stroke="#fff" stroke-opacity="0.11" stroke-width="0.9"/><line x1="1058.1" y1="146" x2="1058.1" y2="269.8" stroke="#fff" stroke-opacity="0.10" stroke-width="0.7"/><line x1="908.0" y1="146" x2="908.0" y2="269.8" stroke="#fff" stroke-opacity="0.08" stroke-width="0.4"/><line x1="918.8" y1="146" x2="918.8" y2="269.8" stroke="#fff" stroke-opacity="0.10" stroke-width="0.4"/><line x1="905.0" y1="146" x2="905.0" y2="269.8" stroke="#fff" stroke-opacity="0.04" stroke-width="0.9"/><line x1="928.3" y1="146" x2="928.3" y2="269.8" stroke="#fff" stroke-opacity="0.03" stroke-width="0.9"/><line x1="912.9" y1="146" x2="912.9" y2="269.8" stroke="#fff" stroke-opacity="0.11" stroke-width="0.8"/><line x1="1102.9" y1="146" x2="1102.9" y2="269.8" stroke="#fff" stroke-opacity="0.12" stroke-width="0.7"/><line x1="1093.0" y1="146" x2="1093.0" y2="269.8" stroke="#fff" stroke-opacity="0.03" stroke-width="0.9"/><line x1="1016.6" y1="146" x2="1016.6" y2="269.8" stroke="#fff" stroke-opacity="0.09" stroke-width="0.5"/><line x1="1079.8" y1="146" x2="1079.8" y2="269.8" stroke="#fff" stroke-opacity="0.11" stroke-width="0.4"/><line x1="966.8" y1="146" x2="966.8" y2="269.8" stroke="#fff" stroke-opacity="0.08" stroke-width="0.9"/><line x1="945.0" y1="146" x2="945.0" y2="269.8" stroke="#fff" stroke-opacity="0.05" stroke-width="0.5"/><line x1="1044.4" y1="146" x2="1044.4" y2="269.8" stroke="#fff" stroke-opacity="0.10" stroke-width="0.6"/><line x1="978.3" y1="146" x2="978.3" y2="269.8" stroke="#fff" stroke-opacity="0.07" stroke-width="0.6"/><line x1="991.8" y1="146" x2="991.8" y2="269.8" stroke="#fff" stroke-opacity="0.04" stroke-width="0.7"/><line x1="1139.3" y1="146" x2="1139.3" y2="269.8" stroke="#fff" stroke-opacity="0.07" stroke-width="0.8"/><line x1="923.3" y1="146" x2="923.3" y2="269.8" stroke="#fff" stroke-opacity="0.09" stroke-width="0.9"/><line x1="1059.8" y1="146" x2="1059.8" y2="269.8" stroke="#fff" stroke-opacity="0.08" stroke-width="0.7"/><line x1="1051.6" y1="146" x2="1051.6" y2="269.8" stroke="#fff" stroke-opacity="0.11" stroke-width="0.5"/><line x1="906.1" y1="146" x2="906.1" y2="269.8" stroke="#fff" stroke-opacity="0.10" stroke-width="0.9"/><line x1="1018.1" y1="146" x2="1018.1" y2="269.8" stroke="#fff" stroke-opacity="0.07" stroke-width="0.8"/><line x1="930.1" y1="146" x2="930.1" y2="269.8" stroke="#fff" stroke-opacity="0.05" stroke-width="0.5"/><line x1="1036.3" y1="146" x2="1036.3" y2="269.8" stroke="#fff" stroke-opacity="0.06" stroke-width="0.5"/><line x1="1064.4" y1="146" x2="1064.4" y2="269.8" stroke="#fff" stroke-opacity="0.12" stroke-width="0.6"/><line x1="1068.2" y1="146" x2="1068.2" y2="269.8" stroke="#fff" stroke-opacity="0.07" stroke-width="0.9"/><line x1="1036.1" y1="146" x2="1036.1" y2="269.8" stroke="#fff" stroke-opacity="0.05" stroke-width="0.5"/><line x1="886.8" y1="146" x2="886.8" y2="269.8" stroke="#fff" stroke-opacity="0.07" stroke-width="0.6"/><line x1="926.4" y1="146" x2="926.4" y2="269.8" stroke="#fff" stroke-opacity="0.06" stroke-width="0.6"/><line x1="1086.5" y1="146" x2="1086.5" y2="269.8" stroke="#fff" stroke-opacity="0.04" stroke-width="1.0"/><line x1="1008.1" y1="146" x2="1008.1" y2="269.8" stroke="#fff" stroke-opacity="0.08" stroke-width="0.7"/><line x1="1102.5" y1="146" x2="1102.5" y2="269.8" stroke="#fff" stroke-opacity="0.10" stroke-width="0.7"/><line x1="1008.6" y1="146" x2="1008.6" y2="269.8" stroke="#fff" stroke-opacity="0.09" stroke-width="0.9"/><line x1="987.0" y1="146" x2="987.0" y2="269.8" stroke="#fff" stroke-opacity="0.10" stroke-width="1.0"/><line x1="1004.9" y1="146" x2="1004.9" y2="269.8" stroke="#fff" stroke-opacity="0.05" stroke-width="0.5"/><line x1="1071.4" y1="146" x2="1071.4" y2="269.8" stroke="#fff" stroke-opacity="0.09" stroke-width="1.0"/><line x1="1107.7" y1="146" x2="1107.7" y2="269.8" stroke="#fff" stroke-opacity="0.05" stroke-width="0.5"/><line x1="949.4" y1="146" x2="949.4" y2="269.8" stroke="#fff" stroke-opacity="0.05" stroke-width="0.8"/><line x1="1108.9" y1="146" x2="1108.9" y2="269.8" stroke="#fff" stroke-opacity="0.11" stroke-width="0.6"/><line x1="1110.6" y1="146" x2="1110.6" y2="269.8" stroke="#fff" stroke-opacity="0.06" stroke-width="0.7"/><line x1="1074.4" y1="146" x2="1074.4" y2="269.8" stroke="#fff" stroke-opacity="0.04" stroke-width="0.5"/><line x1="1102.3" y1="146" x2="1102.3" y2="269.8" stroke="#fff" stroke-opacity="0.06" stroke-width="0.6"/><line x1="1034.9" y1="146" x2="1034.9" y2="269.8" stroke="#fff" stroke-opacity="0.09" stroke-width="0.4"/><line x1="969.6" y1="146" x2="969.6" y2="269.8" stroke="#fff" stroke-opacity="0.07" stroke-width="0.7"/><line x1="936.5" y1="146" x2="936.5" y2="269.8" stroke="#fff" stroke-opacity="0.08" stroke-width="1.0"/><line x1="984.6" y1="146" x2="984.6" y2="269.8" stroke="#fff" stroke-opacity="0.08" stroke-width="0.5"/><line x1="953.7" y1="146" x2="953.7" y2="269.8" stroke="#fff" stroke-opacity="0.09" stroke-width="0.5"/><line x1="1116.5" y1="146" x2="1116.5" y2="269.8" stroke="#fff" stroke-opacity="0.11" stroke-width="0.5"/><line x1="1130.9" y1="146" x2="1130.9" y2="269.8" stroke="#fff" stroke-opacity="0.06" stroke-width="0.9"/><line x1="1082.0" y1="146" x2="1082.0" y2="269.8" stroke="#fff" stroke-opacity="0.06" stroke-width="0.8"/><line x1="1054.5" y1="146" x2="1054.5" y2="269.8" stroke="#fff" stroke-opacity="0.10" stroke-width="0.6"/><line x1="1081.1" y1="146" x2="1081.1" y2="269.8" stroke="#fff" stroke-opacity="0.12" stroke-width="0.8"/><line x1="1023.2" y1="146" x2="1023.2" y2="269.8" stroke="#fff" stroke-opacity="0.04" stroke-width="0.7"/><line x1="974.3" y1="146" x2="974.3" y2="269.8" stroke="#fff" stroke-opacity="0.09" stroke-width="0.8"/><line x1="1031.2" y1="146" x2="1031.2" y2="269.8" stroke="#fff" stroke-opacity="0.05" stroke-width="0.8"/><line x1="1048.4" y1="146" x2="1048.4" y2="269.8" stroke="#fff" stroke-opacity="0.05" stroke-width="0.9"/><line x1="1054.9" y1="146" x2="1054.9" y2="269.8" stroke="#fff" stroke-opacity="0.04" stroke-width="1.0"/><line x1="918.2" y1="146" x2="918.2" y2="269.8" stroke="#fff" stroke-opacity="0.06" stroke-width="0.8"/><line x1="1039.5" y1="146" x2="1039.5" y2="269.8" stroke="#fff" stroke-opacity="0.08" stroke-width="0.8"/><line x1="1002.3" y1="146" x2="1002.3" y2="269.8" stroke="#fff" stroke-opacity="0.06" stroke-width="0.5"/><line x1="898.9" y1="146" x2="898.9" y2="269.8" stroke="#fff" stroke-opacity="0.09" stroke-width="0.9"/><line x1="1025.0" y1="146" x2="1025.0" y2="269.8" stroke="#fff" stroke-opacity="0.10" stroke-width="0.6"/><path d="M1148.0 146 L1149.1 176 L1150.1 207.5 L1149.1 239.8 L1148.0 269.8 Z" fill="#1b0560"/><line x1="1148.50" y1="207.50" x2="1191.30" y2="207.50" stroke="#3e2f84" stroke-width="1"/><line x1="601.80" y1="363.60" x2="601.80" y2="540.00" stroke="#b9b9b9" stroke-width="1"/><line x1="622.42" y1="363.60" x2="622.42" y2="540.00" stroke="#e6e6e6" stroke-width="1"/><line x1="634.48" y1="363.60" x2="634.48" y2="540.00" stroke="#e6e6e6" stroke-width="1"/><line x1="643.04" y1="363.60" x2="643.04" y2="540.00" stroke="#e6e6e6" stroke-width="1"/><line x1="649.68" y1="363.60" x2="649.68" y2="540.00" stroke="#e6e6e6" stroke-width="1"/><line x1="655.10" y1="363.60" x2="655.10" y2="540.00" stroke="#e6e6e6" stroke-width="1"/><line x1="659.69" y1="363.60" x2="659.69" y2="540.00" stroke="#e6e6e6" stroke-width="1"/><line x1="663.66" y1="363.60" x2="663.66" y2="540.00" stroke="#e6e6e6" stroke-width="1"/><line x1="667.17" y1="363.60" x2="667.17" y2="540.00" stroke="#e6e6e6" stroke-width="1"/><line x1="670.30" y1="363.60" x2="670.30" y2="540.00" stroke="#b9b9b9" stroke-width="1"/><line x1="690.92" y1="363.60" x2="690.92" y2="540.00" stroke="#e6e6e6" stroke-width="1"/><line x1="702.98" y1="363.60" x2="702.98" y2="540.00" stroke="#e6e6e6" stroke-width="1"/><line x1="711.54" y1="363.60" x2="711.54" y2="540.00" stroke="#e6e6e6" stroke-width="1"/><line x1="718.18" y1="363.60" x2="718.18" y2="540.00" stroke="#e6e6e6" stroke-width="1"/><line x1="723.60" y1="363.60" x2="723.60" y2="540.00" stroke="#e6e6e6" stroke-width="1"/><line x1="728.19" y1="363.60" x2="728.19" y2="540.00" stroke="#e6e6e6" stroke-width="1"/><line x1="732.16" y1="363.60" x2="732.16" y2="540.00" stroke="#e6e6e6" stroke-width="1"/><line x1="735.67" y1="363.60" x2="735.67" y2="540.00" stroke="#e6e6e6" stroke-width="1"/><line x1="738.80" y1="363.60" x2="738.80" y2="540.00" stroke="#b9b9b9" stroke-width="1"/><line x1="759.42" y1="363.60" x2="759.42" y2="540.00" stroke="#e6e6e6" stroke-width="1"/><line x1="771.48" y1="363.60" x2="771.48" y2="540.00" stroke="#e6e6e6" stroke-width="1"/><line x1="780.04" y1="363.60" x2="780.04" y2="540.00" stroke="#e6e6e6" stroke-width="1"/><line x1="786.68" y1="363.60" x2="786.68" y2="540.00" stroke="#e6e6e6" stroke-width="1"/><line x1="792.10" y1="363.60" x2="792.10" y2="540.00" stroke="#e6e6e6" stroke-width="1"/><line x1="796.69" y1="363.60" x2="796.69" y2="540.00" stroke="#e6e6e6" stroke-width="1"/><line x1="800.66" y1="363.60" x2="800.66" y2="540.00" stroke="#e6e6e6" stroke-width="1"/><line x1="804.17" y1="363.60" x2="804.17" y2="540.00" stroke="#e6e6e6" stroke-width="1"/><line x1="807.30" y1="363.60" x2="807.30" y2="540.00" stroke="#b9b9b9" stroke-width="1"/><line x1="827.92" y1="363.60" x2="827.92" y2="540.00" stroke="#e6e6e6" stroke-width="1"/><line x1="839.98" y1="363.60" x2="839.98" y2="540.00" stroke="#e6e6e6" stroke-width="1"/><line x1="848.54" y1="363.60" x2="848.54" y2="540.00" stroke="#e6e6e6" stroke-width="1"/><line x1="855.18" y1="363.60" x2="855.18" y2="540.00" stroke="#e6e6e6" stroke-width="1"/><line x1="860.60" y1="363.60" x2="860.60" y2="540.00" stroke="#e6e6e6" stroke-width="1"/><line x1="865.19" y1="363.60" x2="865.19" y2="540.00" stroke="#e6e6e6" stroke-width="1"/><line x1="869.16" y1="363.60" x2="869.16" y2="540.00" stroke="#e6e6e6" stroke-width="1"/><line x1="601.50" y1="384.00" x2="869.60" y2="384.00" stroke="#b9b9b9" stroke-width="1"/><text x="597.50" y="387.00" font-size="8.3" fill="#5a5a5a" text-anchor="end" >-19.89</text><line x1="601.50" y1="416.30" x2="869.60" y2="416.30" stroke="#b9b9b9" stroke-width="1"/><text x="597.50" y="419.30" font-size="8.3" fill="#5a5a5a" text-anchor="end" >-19.95</text><line x1="601.50" y1="448.60" x2="869.60" y2="448.60" stroke="#b9b9b9" stroke-width="1"/><text x="597.50" y="451.60" font-size="8.3" fill="#5a5a5a" text-anchor="end" >-20.00</text><line x1="601.50" y1="480.90" x2="869.60" y2="480.90" stroke="#b9b9b9" stroke-width="1"/><text x="597.50" y="483.90" font-size="8.3" fill="#5a5a5a" text-anchor="end" >-20.05</text><line x1="601.50" y1="513.20" x2="869.60" y2="513.20" stroke="#b9b9b9" stroke-width="1"/><text x="597.50" y="516.20" font-size="8.3" fill="#5a5a5a" text-anchor="end" >-20.10</text><line x1="601.50" y1="363.60" x2="601.50" y2="540.00" stroke="#707070" stroke-width="1.2"/><line x1="601.50" y1="540.00" x2="869.60" y2="540.00" stroke="#707070" stroke-width="1.2"/><text x="602.20" y="552.00" font-size="8.3" fill="#5a5a5a" text-anchor="start" >10.00</text><text x="670.30" y="552.00" font-size="8.3" fill="#5a5a5a" text-anchor="middle" >100.00</text><text x="738.80" y="552.00" font-size="8.3" fill="#5a5a5a" text-anchor="middle" >1.00k</text><text x="807.30" y="552.00" font-size="8.3" fill="#5a5a5a" text-anchor="middle" >10.00k</text><text x="730.70" y="566.00" font-size="9.8" fill="#444" text-anchor="middle" >Frequency(Hz)</text><text x="711.00" y="343.50" font-size="10" fill="#333" text-anchor="middle" >Frequency Response</text><text transform="translate(564.00 455.80) rotate(-90)" font-size="9.8" fill="#444" text-anchor="middle">Frequency Response(dBV)</text><text x="847.10" y="358.80" font-size="8.6" fill="#333" textLength="13.5" lengthAdjust="spacingAndGlyphs">Ch1</text><circle cx="840.70" cy="355.60" r="3.6" fill="#1b0560"/><path d="M601.80 444.40 L602.47 444.62 L603.14 444.83 L603.81 445.03 L604.48 445.23 L605.16 445.43 L605.83 445.62 L606.50 445.80 L607.17 445.98 L607.84 446.16 L608.51 446.33 L609.18 446.49 L609.85 446.64 L610.52 446.80 L611.20 446.94 L611.87 447.08 L612.54 447.21 L613.21 447.34 L613.88 447.47 L614.55 447.58 L615.22 447.70 L615.89 447.80 L616.56 447.91 L617.24 448.00 L617.91 448.09 L618.58 448.18 L619.25 448.26 L619.92 448.34 L620.59 448.41 L621.26 448.48 L621.93 448.55 L622.60 448.61 L623.28 448.66 L623.95 448.71 L624.62 448.76 L625.29 448.81 L625.96 448.85 L626.63 448.89 L627.30 448.92 L627.97 448.96 L628.64 448.99 L629.31 449.02 L629.99 449.04 L630.66 449.06 L631.33 449.08 L632.00 449.10 L632.67 449.12 L633.34 449.13 L634.01 449.15 L634.68 449.16 L635.35 449.17 L636.03 449.18 L636.70 449.19 L637.37 449.20 L638.04 449.20 L638.71 449.21 L639.38 449.22 L640.05 449.22 L640.72 449.22 L641.39 449.23 L642.07 449.23 L642.74 449.23 L643.41 449.24 L644.08 449.24 L644.75 449.24 L645.42 449.24 L646.09 449.24 L646.76 449.24 L647.43 449.24 L648.11 449.24 L648.78 449.24 L649.45 449.24 L650.12 449.24 L650.79 449.25 L651.46 449.25 L652.13 449.25 L652.80 449.25 L653.47 449.25 L654.15 449.25 L654.82 449.25 L655.49 449.25 L656.16 449.25 L656.83 449.25 L657.50 449.25 L658.17 449.25 L658.84 449.25 L659.51 449.25 L660.19 449.25 L660.86 449.25 L661.53 449.25 L662.20 449.25 L662.87 449.25 L663.54 449.25 L664.21 449.25 L664.88 449.25 L665.55 449.25 L666.23 449.25 L666.90 449.25 L667.57 449.25 L668.24 449.25 L668.91 449.25 L669.58 449.25 L670.25 449.25 L670.92 449.25 L671.59 449.25 L672.26 449.25 L672.94 449.25 L673.61 449.25 L674.28 449.25 L674.95 449.25 L675.62 449.25 L676.29 449.25 L676.96 449.25 L677.63 449.25 L678.30 449.25 L678.98 449.25 L679.65 449.25 L680.32 449.25 L680.99 449.25 L681.66 449.25 L682.33 449.25 L683.00 449.25 L683.67 449.25 L684.34 449.25 L685.02 449.25 L685.69 449.25 L686.36 449.25 L687.03 449.25 L687.70 449.25 L688.37 449.25 L689.04 449.25 L689.71 449.25 L690.38 449.25 L691.06 449.25 L691.73 449.25 L692.40 449.25 L693.07 449.25 L693.74 449.25 L694.41 449.25 L695.08 449.25 L695.75 449.25 L696.42 449.25 L697.10 449.25 L697.77 449.25 L698.44 449.25 L699.11 449.25 L699.78 449.25 L700.45 449.25 L701.12 449.25 L701.79 449.25 L702.46 449.25 L703.14 449.25 L703.81 449.25 L704.48 449.25 L705.15 449.25 L705.82 449.25 L706.49 449.25 L707.16 449.25 L707.83 449.25 L708.50 449.25 L709.18 449.25 L709.85 449.25 L710.52 449.25 L711.19 449.25 L711.86 449.25 L712.53 449.25 L713.20 449.25 L713.87 449.25 L714.54 449.25 L715.21 449.25 L715.89 449.25 L716.56 449.25 L717.23 449.25 L717.90 449.25 L718.57 449.25 L719.24 449.25 L719.91 449.25 L720.58 449.25 L721.25 449.26 L721.93 449.26 L722.60 449.26 L723.27 449.26 L723.94 449.26 L724.61 449.26 L725.28 449.26 L725.95 449.26 L726.62 449.26 L727.29 449.26 L727.97 449.26 L728.64 449.26 L729.31 449.26 L729.98 449.26 L730.65 449.26 L731.32 449.26 L731.99 449.26 L732.66 449.26 L733.33 449.26 L734.01 449.26 L734.68 449.26 L735.35 449.27 L736.02 449.27 L736.69 449.27 L737.36 449.27 L738.03 449.27 L738.70 449.27 L739.37 449.27 L740.05 449.27 L740.72 449.27 L741.39 449.27 L742.06 449.27 L742.73 449.27 L743.40 449.28 L744.07 449.28 L744.74 449.28 L745.41 449.28 L746.09 449.28 L746.76 449.28 L747.43 449.28 L748.10 449.28 L748.77 449.29 L749.44 449.29 L750.11 449.29 L750.78 449.29 L751.45 449.29 L752.13 449.29 L752.80 449.30 L753.47 449.30 L754.14 449.30 L754.81 449.30 L755.48 449.30 L756.15 449.31 L756.82 449.31 L757.49 449.31 L758.16 449.31 L758.84 449.31 L759.51 449.32 L760.18 449.32 L760.85 449.32 L761.52 449.33 L762.19 449.33 L762.86 449.33 L763.53 449.33 L764.20 449.34 L764.88 449.34 L765.55 449.34 L766.22 449.35 L766.89 449.35 L767.56 449.36 L768.23 449.36 L768.90 449.36 L769.57 449.37 L770.24 449.37 L770.92 449.38 L771.59 449.38 L772.26 449.39 L772.93 449.39 L773.60 449.40 L774.27 449.40 L774.94 449.41 L775.61 449.41 L776.28 449.42 L776.96 449.43 L777.63 449.43 L778.30 449.44 L778.97 449.45 L779.64 449.46 L780.31 449.46 L780.98 449.47 L781.65 449.48 L782.32 449.49 L783.00 449.50 L783.67 449.51 L784.34 449.52 L785.01 449.53 L785.68 449.54 L786.35 449.55 L787.02 449.56 L787.69 449.57 L788.36 449.58 L789.04 449.59 L789.71 449.61 L790.38 449.62 L791.05 449.63 L791.72 449.65 L792.39 449.66 L793.06 449.68 L793.73 449.69 L794.40 449.71 L795.08 449.73 L795.75 449.74 L796.42 449.76 L797.09 449.78 L797.76 449.80 L798.43 449.82 L799.10 449.84 L799.77 449.86 L800.44 449.89 L801.11 449.91 L801.79 449.94 L802.46 449.96 L803.13 449.99 L803.80 450.01 L804.47 450.04 L805.14 450.07 L805.81 450.10 L806.48 450.13 L807.15 450.17 L807.83 450.20 L808.50 450.24 L809.17 450.27 L809.84 450.31 L810.51 450.35 L811.18 450.39 L811.85 450.43 L812.52 450.47 L813.19 450.52 L813.87 450.57 L814.54 450.61 L815.21 450.67 L815.88 450.72 L816.55 450.77 L817.22 450.83 L817.89 450.89 L818.56 450.95 L819.23 451.01 L819.91 451.07 L820.58 451.14 L821.25 451.21 L821.92 451.28 L822.59 451.36 L823.26 451.43 L823.93 451.52 L824.60 451.60 L825.27 451.68 L825.95 451.77 L826.62 451.87 L827.29 451.96 L827.96 452.06 L828.63 452.17 L829.30 452.27 L829.97 452.39 L830.64 452.50 L831.31 452.62 L831.99 452.74 L832.66 452.87 L833.33 453.01 L834.00 453.15 L834.67 453.29 L835.34 453.44 L836.01 453.59 L836.68 453.75 L837.35 453.92 L838.03 454.09 L838.70 454.27 L839.37 454.45 L840.04 454.64 L840.71 454.84 L841.38 455.05 L842.05 455.26 L842.72 455.48 L843.39 455.71 L844.06 455.95 L844.74 456.19 L845.41 456.45 L846.08 456.71 L846.75 456.99 L847.42 457.27 L848.09 457.57 L848.76 457.87 L849.43 458.19 L850.10 458.52 L850.78 458.86 L851.45 459.21 L852.12 459.58 L852.79 459.96 L853.46 460.35 L854.13 460.76 L854.80 461.18 L855.47 461.62 L856.14 462.08 L856.82 462.55 L857.49 463.04 L858.16 463.54 L858.83 464.07 L859.50 464.61 L860.17 465.18 L860.84 465.76 L861.51 466.37 L862.18 467.00 L862.86 467.65 L863.53 468.33 L864.20 469.03 L864.87 469.76 L865.54 470.51 L866.21 471.29 L866.88 472.10 L867.55 472.94 L868.22 473.82 L868.90 474.72 L869.57 475.65" fill="none" stroke="#3e2f84" stroke-width="1.4" stroke-linejoin="round" /><line x1="929.30" y1="364.60" x2="929.30" y2="540.00" stroke="#b9b9b9" stroke-width="1"/><line x1="950.76" y1="364.60" x2="950.76" y2="540.00" stroke="#e6e6e6" stroke-width="1"/><line x1="963.32" y1="364.60" x2="963.32" y2="540.00" stroke="#e6e6e6" stroke-width="1"/><line x1="972.23" y1="364.60" x2="972.23" y2="540.00" stroke="#e6e6e6" stroke-width="1"/><line x1="979.14" y1="364.60" x2="979.14" y2="540.00" stroke="#e6e6e6" stroke-width="1"/><line x1="984.78" y1="364.60" x2="984.78" y2="540.00" stroke="#e6e6e6" stroke-width="1"/><line x1="989.56" y1="364.60" x2="989.56" y2="540.00" stroke="#e6e6e6" stroke-width="1"/><line x1="993.69" y1="364.60" x2="993.69" y2="540.00" stroke="#e6e6e6" stroke-width="1"/><line x1="997.34" y1="364.60" x2="997.34" y2="540.00" stroke="#e6e6e6" stroke-width="1"/><line x1="1000.60" y1="364.60" x2="1000.60" y2="540.00" stroke="#b9b9b9" stroke-width="1"/><line x1="1022.06" y1="364.60" x2="1022.06" y2="540.00" stroke="#e6e6e6" stroke-width="1"/><line x1="1034.62" y1="364.60" x2="1034.62" y2="540.00" stroke="#e6e6e6" stroke-width="1"/><line x1="1043.53" y1="364.60" x2="1043.53" y2="540.00" stroke="#e6e6e6" stroke-width="1"/><line x1="1050.44" y1="364.60" x2="1050.44" y2="540.00" stroke="#e6e6e6" stroke-width="1"/><line x1="1056.08" y1="364.60" x2="1056.08" y2="540.00" stroke="#e6e6e6" stroke-width="1"/><line x1="1060.86" y1="364.60" x2="1060.86" y2="540.00" stroke="#e6e6e6" stroke-width="1"/><line x1="1064.99" y1="364.60" x2="1064.99" y2="540.00" stroke="#e6e6e6" stroke-width="1"/><line x1="1068.64" y1="364.60" x2="1068.64" y2="540.00" stroke="#e6e6e6" stroke-width="1"/><line x1="1071.90" y1="364.60" x2="1071.90" y2="540.00" stroke="#b9b9b9" stroke-width="1"/><line x1="1093.36" y1="364.60" x2="1093.36" y2="540.00" stroke="#e6e6e6" stroke-width="1"/><line x1="1105.92" y1="364.60" x2="1105.92" y2="540.00" stroke="#e6e6e6" stroke-width="1"/><line x1="1114.83" y1="364.60" x2="1114.83" y2="540.00" stroke="#e6e6e6" stroke-width="1"/><line x1="1121.74" y1="364.60" x2="1121.74" y2="540.00" stroke="#e6e6e6" stroke-width="1"/><line x1="1127.38" y1="364.60" x2="1127.38" y2="540.00" stroke="#e6e6e6" stroke-width="1"/><line x1="1132.16" y1="364.60" x2="1132.16" y2="540.00" stroke="#e6e6e6" stroke-width="1"/><line x1="1136.29" y1="364.60" x2="1136.29" y2="540.00" stroke="#e6e6e6" stroke-width="1"/><line x1="1139.94" y1="364.60" x2="1139.94" y2="540.00" stroke="#e6e6e6" stroke-width="1"/><line x1="1143.20" y1="364.60" x2="1143.20" y2="540.00" stroke="#b9b9b9" stroke-width="1"/><line x1="1164.66" y1="364.60" x2="1164.66" y2="540.00" stroke="#e6e6e6" stroke-width="1"/><line x1="1177.22" y1="364.60" x2="1177.22" y2="540.00" stroke="#e6e6e6" stroke-width="1"/><line x1="1186.13" y1="364.60" x2="1186.13" y2="540.00" stroke="#e6e6e6" stroke-width="1"/><line x1="929.00" y1="365.10" x2="1191.80" y2="365.10" stroke="#b9b9b9" stroke-width="1"/><text x="925.00" y="368.10" font-size="8.3" fill="#5a5a5a" text-anchor="end" >200.00</text><line x1="929.00" y1="394.40" x2="1191.80" y2="394.40" stroke="#b9b9b9" stroke-width="1"/><text x="925.00" y="397.40" font-size="8.3" fill="#5a5a5a" text-anchor="end" >100.00</text><line x1="929.00" y1="423.70" x2="1191.80" y2="423.70" stroke="#b9b9b9" stroke-width="1"/><text x="925.00" y="426.70" font-size="8.3" fill="#5a5a5a" text-anchor="end" >0.00</text><line x1="929.00" y1="453.00" x2="1191.80" y2="453.00" stroke="#b9b9b9" stroke-width="1"/><text x="925.00" y="456.00" font-size="8.3" fill="#5a5a5a" text-anchor="end" >-100.00</text><line x1="929.00" y1="482.30" x2="1191.80" y2="482.30" stroke="#b9b9b9" stroke-width="1"/><text x="925.00" y="485.30" font-size="8.3" fill="#5a5a5a" text-anchor="end" >-200.00</text><line x1="929.00" y1="511.60" x2="1191.80" y2="511.60" stroke="#b9b9b9" stroke-width="1"/><text x="925.00" y="514.60" font-size="8.3" fill="#5a5a5a" text-anchor="end" >-300.00</text><line x1="929.00" y1="364.60" x2="929.00" y2="540.00" stroke="#707070" stroke-width="1.2"/><line x1="929.00" y1="540.00" x2="1191.80" y2="540.00" stroke="#707070" stroke-width="1.2"/><text x="929.70" y="552.00" font-size="8.3" fill="#5a5a5a" text-anchor="start" >10.00</text><text x="1000.60" y="552.00" font-size="8.3" fill="#5a5a5a" text-anchor="middle" >100.00</text><text x="1071.90" y="552.00" font-size="8.3" fill="#5a5a5a" text-anchor="middle" >1.00k</text><text x="1143.20" y="552.00" font-size="8.3" fill="#5a5a5a" text-anchor="middle" >10.00k</text><text x="1056.00" y="566.00" font-size="9.8" fill="#444" text-anchor="middle" >Frequency(Hz)</text><text x="1033.50" y="343.50" font-size="10" fill="#333" text-anchor="middle" >THD Ratio</text><text transform="translate(887.50 456.30) rotate(-90)" font-size="9.8" fill="#444" text-anchor="middle">THD Ratio(dB)</text><text x="1169.60" y="358.80" font-size="8.6" fill="#333" textLength="13.5" lengthAdjust="spacingAndGlyphs">Ch1</text><circle cx="1163.20" cy="355.60" r="3.6" fill="#1b0560"/><path d="M929.30 448.78 L929.66 448.78 L930.01 448.79 L930.37 448.81 L930.73 448.83 L931.09 448.86 L931.44 448.89 L931.80 448.92 L932.16 448.97 L932.51 449.01 L932.87 449.06 L933.23 449.12 L933.58 449.18 L933.94 449.24 L934.30 449.30 L934.66 449.37 L935.01 449.44 L935.37 449.50 L935.73 449.57 L936.08 449.64 L936.44 449.71 L936.80 449.78 L937.15 449.84 L937.51 449.91 L937.87 449.97 L938.23 450.03 L938.58 450.08 L938.94 450.13 L939.30 450.18 L939.65 450.22 L940.01 450.26 L940.37 450.29 L940.72 450.32 L941.08 450.34 L941.44 450.35 L941.80 450.36 L942.15 450.36 L942.51 450.39 L942.87 450.46 L943.22 450.57 L943.58 450.72 L943.94 450.91 L944.29 451.12 L944.65 451.36 L945.01 451.62 L945.37 451.88 L945.72 452.15 L946.08 452.42 L946.44 452.67 L946.79 452.90 L947.15 453.11 L947.51 453.28 L947.86 453.42 L948.22 453.52 L948.58 453.57 L948.94 453.73 L949.29 454.08 L949.65 454.37 L950.01 454.64 L950.36 454.89 L950.72 455.13 L951.08 455.36 L951.43 455.58 L951.79 455.80 L952.15 456.01 L952.51 456.22 L952.86 456.42 L953.22 456.62 L953.58 456.81 L953.93 457.01 L954.29 457.20 L954.65 457.39 L955.00 457.57 L955.36 457.75 L955.72 457.94 L956.08 458.12 L956.43 458.26 L956.79 458.09 L957.15 457.93 L957.50 457.78 L957.86 457.63 L958.22 457.49 L958.57 457.36 L958.93 457.23 L959.29 457.12 L959.65 457.01 L960.00 456.91 L960.36 456.81 L960.72 456.73 L961.07 456.66 L961.43 456.60 L961.79 456.55 L962.14 456.52 L962.50 456.52 L962.86 456.52 L963.22 456.53 L963.57 456.54 L963.93 456.55 L964.29 456.56 L964.64 456.58 L965.00 456.70 L965.36 456.83 L965.72 456.56 L966.07 456.93 L966.43 456.69 L966.79 456.82 L967.14 457.03 L967.50 456.80 L967.86 457.11 L968.21 456.92 L968.57 457.17 L968.93 457.19 L969.29 457.03 L969.64 456.83 L970.00 457.28 L970.36 457.26 L970.71 457.06 L971.07 456.90 L971.43 457.15 L971.78 457.29 L972.14 456.97 L972.50 457.55 L972.86 457.09 L973.21 457.45 L973.57 457.55 L973.93 457.58 L974.28 457.48 L974.64 457.20 L975.00 457.58 L975.35 457.35 L975.71 457.31 L976.07 457.47 L976.43 457.37 L976.78 457.65 L977.14 457.65 L977.50 457.57 L977.85 457.29 L978.21 457.44 L978.57 457.50 L978.92 457.34 L979.28 457.42 L979.64 457.51 L980.00 457.22 L980.35 457.28 L980.71 457.54 L981.07 457.35 L981.42 457.38 L981.78 457.18 L982.14 457.26 L982.49 457.52 L982.85 457.11 L983.21 457.62 L983.57 457.44 L983.92 457.24 L984.28 457.60 L984.64 457.40 L984.99 457.67 L985.35 457.30 L985.71 457.24 L986.06 457.35 L986.42 457.17 L986.78 457.50 L987.14 457.28 L987.49 457.34 L987.85 457.35 L988.21 457.42 L988.56 457.20 L988.92 457.13 L989.28 457.41 L989.63 457.30 L989.99 457.65 L990.35 457.28 L990.71 457.31 L991.06 457.11 L991.42 457.21 L991.78 457.52 L992.13 457.46 L992.49 457.30 L992.85 457.67 L993.20 457.40 L993.56 457.55 L993.92 457.55 L994.28 457.55 L994.63 457.09 L994.99 457.42 L995.35 457.30 L995.70 457.16 L996.06 456.82 L996.42 457.22 L996.77 456.94 L997.13 456.83 L997.49 456.57 L997.85 456.56 L998.20 456.48 L998.56 456.78 L998.92 456.66 L999.27 456.66 L999.63 456.32 L999.99 456.26 L1000.34 456.72 L1000.70 456.71 L1001.06 456.67 L1001.42 456.67 L1001.77 456.52 L1002.13 456.46 L1002.49 456.64 L1002.84 456.79 L1003.20 456.54 L1003.56 456.56 L1003.92 456.44 L1004.27 456.20 L1004.63 456.35 L1004.99 456.44 L1005.34 456.37 L1005.70 456.32 L1006.06 456.67 L1006.41 456.16 L1006.77 456.22 L1007.13 456.15 L1007.49 456.17 L1007.84 456.40 L1008.20 456.37 L1008.56 456.53 L1008.91 456.20 L1009.27 456.52 L1009.63 456.50 L1009.98 456.39 L1010.34 456.40 L1010.70 456.28 L1011.06 456.42 L1011.41 456.43 L1011.77 456.32 L1012.13 456.33 L1012.48 456.16 L1012.84 456.33 L1013.20 455.81 L1013.55 455.94 L1013.91 456.19 L1014.27 456.11 L1014.63 456.03 L1014.98 456.00 L1015.34 456.12 L1015.70 455.68 L1016.05 455.57 L1016.41 455.86 L1016.77 455.83 L1017.12 456.04 L1017.48 456.01 L1017.84 455.85 L1018.20 455.88 L1018.55 455.53 L1018.91 455.91 L1019.27 455.97 L1019.62 455.41 L1019.98 455.64 L1020.34 455.85 L1020.69 455.61 L1021.05 455.90 L1021.41 455.59 L1021.77 455.31 L1022.12 455.37 L1022.48 455.46 L1022.84 455.70 L1023.19 455.63 L1023.55 455.74 L1023.91 455.38 L1024.26 455.52 L1024.62 455.37 L1024.98 455.63 L1025.34 455.69 L1025.69 455.34 L1026.05 455.24 L1026.41 455.31 L1026.76 455.34 L1027.12 455.33 L1027.48 455.38 L1027.83 455.67 L1028.19 455.50 L1028.55 455.59 L1028.91 455.78 L1029.26 455.78 L1029.62 455.62 L1029.98 455.63 L1030.33 455.37 L1030.69 455.21 L1031.05 455.50 L1031.40 455.20 L1031.76 455.17 L1032.12 455.18 L1032.48 455.51 L1032.83 455.59 L1033.19 455.57 L1033.55 455.58 L1033.90 455.56 L1034.26 455.30 L1034.62 455.13 L1034.97 455.15 L1035.33 455.35 L1035.69 455.23 L1036.05 455.13 L1036.40 455.54 L1036.76 455.18 L1037.12 455.02 L1037.47 455.08 L1037.83 455.08 L1038.19 455.22 L1038.55 455.38 L1038.90 455.01 L1039.26 455.26 L1039.62 454.96 L1039.97 454.84 L1040.33 455.16 L1040.69 455.14 L1041.04 454.80 L1041.40 454.91 L1041.76 455.21 L1042.12 455.22 L1042.47 455.18 L1042.83 454.72 L1043.19 454.76 L1043.54 455.12 L1043.90 454.70 L1044.26 454.59 L1044.61 454.75 L1044.97 454.91 L1045.33 454.77 L1045.69 454.99 L1046.04 455.04 L1046.40 454.45 L1046.76 454.62 L1047.11 454.67 L1047.47 454.41 L1047.83 454.68 L1048.18 454.39 L1048.54 454.40 L1048.90 454.73 L1049.26 454.69 L1049.61 454.64 L1049.97 454.65 L1050.33 454.42 L1050.68 454.59 L1051.04 454.47 L1051.40 454.62 L1051.75 454.14 L1052.11 454.44 L1052.47 454.35 L1052.83 454.26 L1053.18 454.05 L1053.54 454.31 L1053.90 453.99 L1054.25 454.22 L1054.61 454.18 L1054.97 454.16 L1055.32 454.43 L1055.68 454.16 L1056.04 454.29 L1056.40 454.38 L1056.75 453.89 L1057.11 454.24 L1057.47 454.04 L1057.82 453.87 L1058.18 453.95 L1058.54 454.07 L1058.89 453.94 L1059.25 453.90 L1059.61 453.75 L1059.97 454.13 L1060.32 453.84 L1060.68 454.01 L1061.04 453.97 L1061.39 453.67 L1061.75 453.81 L1062.11 453.76 L1062.46 453.63 L1062.82 453.53 L1063.18 453.79 L1063.54 453.68 L1063.89 453.73 L1064.25 453.71 L1064.61 453.59 L1064.96 453.72 L1065.32 453.66 L1065.68 453.69 L1066.03 453.41 L1066.39 453.54 L1066.75 453.43 L1067.11 453.38 L1067.46 453.77 L1067.82 453.59 L1068.18 453.36 L1068.53 453.41 L1068.89 453.82 L1069.25 453.82 L1069.60 453.63 L1069.96 453.85 L1070.32 453.74 L1070.68 453.84 L1071.03 453.49 L1071.39 453.42 L1071.75 453.35 L1072.10 453.79 L1072.46 453.46 L1072.82 453.49 L1073.18 453.79 L1073.53 453.35 L1073.89 453.30 L1074.25 453.73 L1074.60 453.30 L1074.96 453.61 L1075.32 453.55 L1075.67 453.25 L1076.03 453.33 L1076.39 453.72 L1076.75 453.55 L1077.10 453.49 L1077.46 453.58 L1077.82 453.65 L1078.17 453.56 L1078.53 453.31 L1078.89 453.71 L1079.24 453.38 L1079.60 453.42 L1079.96 453.65 L1080.32 453.45 L1080.67 453.26 L1081.03 453.31 L1081.39 453.55 L1081.74 452.99 L1082.10 453.08 L1082.46 452.95 L1082.81 453.44 L1083.17 453.32 L1083.53 453.43 L1083.89 452.97 L1084.24 453.24 L1084.60 453.30 L1084.96 453.10 L1085.31 452.79 L1085.67 452.82 L1086.03 453.12 L1086.38 453.15 L1086.74 452.68 L1087.10 452.85 L1087.46 452.75 L1087.81 453.08 L1088.17 453.07 L1088.53 452.67 L1088.88 452.79 L1089.24 452.97 L1089.60 452.43 L1089.95 452.58 L1090.31 452.45 L1090.67 452.84 L1091.03 452.36 L1091.38 452.80 L1091.74 452.30 L1092.10 452.51 L1092.45 452.55 L1092.81 452.39 L1093.17 452.14 L1093.52 452.50 L1093.88 452.55 L1094.24 452.29 L1094.60 452.43 L1094.95 452.48 L1095.31 452.42 L1095.67 452.45 L1096.02 452.34 L1096.38 452.25 L1096.74 452.22 L1097.09 451.93 L1097.45 452.18 L1097.81 452.03 L1098.17 452.19 L1098.52 452.07 L1098.88 452.24 L1099.24 452.08 L1099.59 452.19 L1099.95 451.75 L1100.31 451.83 L1100.66 452.02 L1101.02 451.84 L1101.38 451.55 L1101.74 452.01 L1102.09 451.57 L1102.45 451.78 L1102.81 451.73 L1103.16 451.51 L1103.52 451.76 L1103.88 451.67 L1104.23 451.55 L1104.59 451.37 L1104.95 451.73 L1105.31 451.43 L1105.66 451.49 L1106.02 451.52 L1106.38 451.65 L1106.73 451.67 L1107.09 451.83 L1107.45 451.78 L1107.81 451.81 L1108.16 451.41 L1108.52 451.69 L1108.88 451.74 L1109.23 451.78 L1109.59 451.34 L1109.95 451.32 L1110.30 451.44 L1110.66 451.66 L1111.02 451.68 L1111.38 451.65 L1111.73 451.55 L1112.09 451.72 L1112.45 451.55 L1112.80 451.65 L1113.16 451.23 L1113.52 451.22 L1113.87 451.46 L1114.23 451.63 L1114.59 451.19 L1114.95 451.56 L1115.30 451.52 L1115.66 451.72 L1116.02 451.48 L1116.37 451.41 L1116.73 451.38 L1117.09 451.54 L1117.44 451.34 L1117.80 451.61 L1118.16 451.44 L1118.52 451.52 L1118.87 451.32 L1119.23 451.51 L1119.59 451.50 L1119.94 451.31 L1120.30 451.32 L1120.66 451.09 L1121.01 451.10 L1121.37 450.94 L1121.73 450.97 L1122.09 450.91 L1122.44 450.79 L1122.80 451.05 L1123.16 451.06 L1123.51 450.64 L1123.87 451.10 L1124.23 450.73 L1124.58 450.75 L1124.94 451.07 L1125.30 450.58 L1125.66 450.51 L1126.01 450.64 L1126.37 450.55 L1126.73 450.47 L1127.08 450.83 L1127.44 450.58 L1127.80 450.56 L1128.15 450.33 L1128.51 450.32 L1128.87 450.27 L1129.23 450.38 L1129.58 450.17 L1129.94 450.27 L1130.30 450.23 L1130.65 450.47 L1131.01 450.56 L1131.37 450.47 L1131.72 450.31 L1132.08 450.43 L1132.44 449.97 L1132.80 450.10 L1133.15 450.04 L1133.51 450.01 L1133.87 449.95 L1134.22 450.04 L1134.58 450.30 L1134.94 449.81 L1135.29 449.81 L1135.65 449.93 L1136.01 449.89 L1136.37 449.80 L1136.72 450.12 L1137.08 449.71 L1137.44 449.98 L1137.79 450.06 L1138.15 449.93 L1138.51 449.64 L1138.86 449.93 L1139.22 449.60 L1139.58 449.45 L1139.94 449.72 L1140.29 449.77 L1140.65 449.71 L1141.01 449.57 L1141.36 449.52 L1141.72 449.60 L1142.08 449.57 L1142.43 449.90 L1142.79 449.85 L1143.15 449.78 L1143.51 449.49 L1143.86 449.75 L1144.22 449.59 L1144.58 449.92 L1144.93 449.89 L1145.29 449.76 L1145.65 449.52 L1146.01 449.51 L1146.36 449.51 L1146.72 449.73 L1147.08 449.59 L1147.43 449.61 L1147.79 449.60 L1148.15 449.79 L1148.50 449.32 L1148.86 449.71 L1149.22 449.24 L1149.58 449.25 L1149.93 449.77 L1150.29 449.49 L1150.65 449.26 L1151.00 449.15 L1151.36 449.43 L1151.72 449.51 L1152.07 449.52 L1152.43 449.06 L1152.79 449.47 L1153.15 449.22 L1153.50 449.45 L1153.86 449.20 L1154.22 448.91 L1154.57 449.36 L1154.93 448.93 L1155.29 449.08 L1155.64 448.82 L1156.00 448.89 L1156.36 449.13 L1156.72 448.71 L1157.07 448.91 L1157.43 449.14 L1157.79 449.12 L1158.14 448.79 L1158.50 448.78 L1158.86 448.83 L1159.21 448.88 L1159.57 448.72 L1159.93 448.70 L1160.29 448.35 L1160.64 448.80 L1161.00 448.32 L1161.36 448.23 L1161.71 448.61 L1162.07 448.10 L1162.43 448.18 L1162.78 448.03 L1163.14 448.35 L1163.50 448.26 L1163.86 448.21 L1164.21 447.81 L1164.57 448.01 L1164.93 448.11 L1165.28 448.03 L1165.64 448.08 L1166.00 448.18 L1166.35 448.11 L1166.71 447.64 L1167.07 447.93 L1167.43 447.51 L1167.78 447.88 L1168.14 447.83 L1168.50 447.65 L1168.85 447.81 L1169.21 447.67 L1169.57 447.30 L1169.92 447.31 L1170.28 447.32 L1170.64 447.40 L1171.00 447.21 L1171.35 447.17 L1171.71 447.37 L1172.07 447.25 L1172.42 447.61 L1172.78 447.19 L1173.14 447.34 L1173.49 447.14 L1173.85 447.18 L1174.21 447.38 L1174.57 447.50 L1174.92 446.97 L1175.28 447.42 L1175.64 447.21 L1175.99 447.27 L1176.35 447.29 L1176.71 447.02 L1177.06 446.88 L1177.42 447.29 L1177.78 447.05 L1178.14 447.26 L1178.49 447.11 L1178.85 447.20 L1179.15 451.53" fill="none" stroke="#3e2f84" stroke-width="1.0" stroke-linejoin="round" /><path d="M1178.85 447.14 L1178.97 453.91 L1179.09 449.98 L1179.21 453.60 L1179.33 449.50 L1179.45 454.02 L1179.57 454.28 L1179.69 454.28 L1179.81 453.40 L1179.93 450.08 L1180.05 452.58 L1180.17 451.99 L1180.29 452.97 L1180.41 453.29 L1180.53 454.09 L1180.65 451.44 L1180.77 453.62 L1180.89 453.45 L1181.01 452.41 L1181.13 450.28 L1181.25 454.64 L1181.37 456.63 L1181.49 452.26 L1181.61 454.76 L1181.73 449.87 L1181.85 450.25 L1181.97 453.45 L1182.09 453.94 L1182.21 451.16 L1182.33 450.95 L1182.45 450.72 L1182.57 451.85 L1182.69 456.16 L1182.81 449.91 L1182.93 453.16 L1183.05 453.43 L1183.17 451.07 L1183.29 454.39 L1183.41 451.68 L1183.53 453.58 L1183.65 454.70 L1183.77 452.33 L1183.89 451.36 L1184.01 452.25 L1184.13 453.46 L1184.25 451.04 L1184.37 454.64 L1184.49 451.20 L1184.61 453.40 L1184.73 449.88 L1184.85 454.58 L1184.97 452.54 L1185.09 453.71 L1185.21 450.86 L1185.33 453.68 L1185.45 453.11 L1185.57 453.54 L1185.69 450.75 L1185.81 449.74 L1185.93 453.77 L1186.05 452.56 L1186.17 449.75 L1186.29 452.68 L1186.41 449.62 L1186.53 454.48 L1186.65 452.68 L1186.77 450.10 L1186.89 449.50 L1187.01 453.02 L1187.13 449.82 L1187.25 454.59 L1187.37 452.76 L1187.49 453.01 L1187.61 454.74 L1187.73 452.90 L1187.85 454.11 L1187.97 453.66 L1188.09 450.43 L1188.21 452.48 L1188.33 458.15 L1188.45 449.91 L1188.57 452.84 L1188.69 454.60 L1188.81 450.48 L1188.93 454.54 L1189.05 460.80 L1189.17 453.40 L1189.29 450.02 L1189.41 453.32 L1189.53 451.50 L1189.65 450.98 L1189.77 453.30 L1189.89 456.33 L1190.01 451.41 L1190.13 454.63 L1190.25 452.25 L1190.37 449.73 L1190.49 453.43 L1190.61 452.16 L1190.73 453.79 L1190.85 450.86 L1190.97 450.68 L1191.09 453.03 L1191.21 452.85 L1191.33 454.34" fill="none" stroke="#2a1a72" stroke-width="0.8" stroke-linejoin="round" /><line x1="606.30" y1="607.50" x2="606.30" y2="783.90" stroke="#b9b9b9" stroke-width="1"/><line x1="627.85" y1="607.50" x2="627.85" y2="783.90" stroke="#e6e6e6" stroke-width="1"/><line x1="640.46" y1="607.50" x2="640.46" y2="783.90" stroke="#e6e6e6" stroke-width="1"/><line x1="649.41" y1="607.50" x2="649.41" y2="783.90" stroke="#e6e6e6" stroke-width="1"/><line x1="656.35" y1="607.50" x2="656.35" y2="783.90" stroke="#e6e6e6" stroke-width="1"/><line x1="662.02" y1="607.50" x2="662.02" y2="783.90" stroke="#e6e6e6" stroke-width="1"/><line x1="666.81" y1="607.50" x2="666.81" y2="783.90" stroke="#e6e6e6" stroke-width="1"/><line x1="670.96" y1="607.50" x2="670.96" y2="783.90" stroke="#e6e6e6" stroke-width="1"/><line x1="674.62" y1="607.50" x2="674.62" y2="783.90" stroke="#e6e6e6" stroke-width="1"/><line x1="677.90" y1="607.50" x2="677.90" y2="783.90" stroke="#b9b9b9" stroke-width="1"/><line x1="699.45" y1="607.50" x2="699.45" y2="783.90" stroke="#e6e6e6" stroke-width="1"/><line x1="712.06" y1="607.50" x2="712.06" y2="783.90" stroke="#e6e6e6" stroke-width="1"/><line x1="721.01" y1="607.50" x2="721.01" y2="783.90" stroke="#e6e6e6" stroke-width="1"/><line x1="727.95" y1="607.50" x2="727.95" y2="783.90" stroke="#e6e6e6" stroke-width="1"/><line x1="733.62" y1="607.50" x2="733.62" y2="783.90" stroke="#e6e6e6" stroke-width="1"/><line x1="738.41" y1="607.50" x2="738.41" y2="783.90" stroke="#e6e6e6" stroke-width="1"/><line x1="742.56" y1="607.50" x2="742.56" y2="783.90" stroke="#e6e6e6" stroke-width="1"/><line x1="746.22" y1="607.50" x2="746.22" y2="783.90" stroke="#e6e6e6" stroke-width="1"/><line x1="749.50" y1="607.50" x2="749.50" y2="783.90" stroke="#b9b9b9" stroke-width="1"/><line x1="771.05" y1="607.50" x2="771.05" y2="783.90" stroke="#e6e6e6" stroke-width="1"/><line x1="783.66" y1="607.50" x2="783.66" y2="783.90" stroke="#e6e6e6" stroke-width="1"/><line x1="792.61" y1="607.50" x2="792.61" y2="783.90" stroke="#e6e6e6" stroke-width="1"/><line x1="799.55" y1="607.50" x2="799.55" y2="783.90" stroke="#e6e6e6" stroke-width="1"/><line x1="805.22" y1="607.50" x2="805.22" y2="783.90" stroke="#e6e6e6" stroke-width="1"/><line x1="810.01" y1="607.50" x2="810.01" y2="783.90" stroke="#e6e6e6" stroke-width="1"/><line x1="814.16" y1="607.50" x2="814.16" y2="783.90" stroke="#e6e6e6" stroke-width="1"/><line x1="817.82" y1="607.50" x2="817.82" y2="783.90" stroke="#e6e6e6" stroke-width="1"/><line x1="821.10" y1="607.50" x2="821.10" y2="783.90" stroke="#b9b9b9" stroke-width="1"/><line x1="842.65" y1="607.50" x2="842.65" y2="783.90" stroke="#e6e6e6" stroke-width="1"/><line x1="855.26" y1="607.50" x2="855.26" y2="783.90" stroke="#e6e6e6" stroke-width="1"/><line x1="864.21" y1="607.50" x2="864.21" y2="783.90" stroke="#e6e6e6" stroke-width="1"/><line x1="606.50" y1="613.50" x2="869.80" y2="613.50" stroke="#b9b9b9" stroke-width="1"/><text x="602.50" y="616.50" font-size="8.3" fill="#5a5a5a" text-anchor="end" >100.00</text><line x1="606.50" y1="655.50" x2="869.80" y2="655.50" stroke="#b9b9b9" stroke-width="1"/><text x="602.50" y="658.50" font-size="8.3" fill="#5a5a5a" text-anchor="end" >0.00</text><line x1="606.50" y1="697.50" x2="869.80" y2="697.50" stroke="#b9b9b9" stroke-width="1"/><text x="602.50" y="700.50" font-size="8.3" fill="#5a5a5a" text-anchor="end" >-100.00</text><line x1="606.50" y1="739.50" x2="869.80" y2="739.50" stroke="#b9b9b9" stroke-width="1"/><text x="602.50" y="742.50" font-size="8.3" fill="#5a5a5a" text-anchor="end" >-200.00</text><line x1="606.50" y1="781.50" x2="869.80" y2="781.50" stroke="#b9b9b9" stroke-width="1"/><text x="602.50" y="784.50" font-size="8.3" fill="#5a5a5a" text-anchor="end" >-300.00</text><line x1="606.50" y1="607.50" x2="606.50" y2="783.90" stroke="#707070" stroke-width="1.2"/><line x1="606.50" y1="783.90" x2="869.80" y2="783.90" stroke="#707070" stroke-width="1.2"/><text x="607.20" y="795.90" font-size="8.3" fill="#5a5a5a" text-anchor="start" >10.00</text><text x="677.90" y="795.90" font-size="8.3" fill="#5a5a5a" text-anchor="middle" >100.00</text><text x="749.50" y="795.90" font-size="8.3" fill="#5a5a5a" text-anchor="middle" >1.00k</text><text x="821.10" y="795.90" font-size="8.3" fill="#5a5a5a" text-anchor="middle" >10.00k</text><text x="732.50" y="810.00" font-size="9.8" fill="#444" text-anchor="middle" >Frequency(Hz)</text><text x="711.50" y="588.00" font-size="10" fill="#333" text-anchor="middle" >Distortion Product Ratio</text><text transform="translate(564.00 699.70) rotate(-90)" font-size="9.8" fill="#444" text-anchor="middle">Distortion Product Ratio(dB)</text><text x="847.00" y="602.60" font-size="8.6" fill="#333" textLength="13.5" lengthAdjust="spacingAndGlyphs">Ch1</text><circle cx="840.60" cy="599.40" r="3.6" fill="#1b0560"/><path d="M606.30 691.20 L606.52 691.20 L606.73 691.21 L606.95 691.21 L607.16 691.23 L607.38 691.24 L607.59 691.26 L607.81 691.28 L608.02 691.30 L608.24 691.33 L608.45 691.36 L608.67 691.39 L608.88 691.42 L609.10 691.46 L609.31 691.50 L609.53 691.55 L609.74 691.59 L609.96 691.64 L610.17 691.69 L610.39 691.74 L610.60 691.80 L610.82 691.85 L611.04 691.91 L611.25 691.97 L611.47 692.04 L611.68 692.10 L611.90 692.17 L612.11 692.23 L612.33 692.30 L612.54 692.37 L612.76 692.44 L612.97 692.51 L613.19 692.58 L613.40 692.65 L613.62 692.73 L613.83 692.80 L614.05 692.87 L614.26 692.95 L614.48 693.02 L614.69 693.09 L614.91 693.16 L615.12 693.24 L615.34 693.31 L615.55 693.38 L615.77 693.45 L615.99 693.51 L616.20 693.58 L616.42 693.65 L616.63 693.71 L616.85 693.77 L617.06 693.84 L617.28 693.89 L617.49 693.95 L617.71 694.01 L617.92 694.06 L618.14 694.11 L618.35 694.16 L618.57 694.21 L618.78 694.25 L619.00 694.29 L619.21 694.33 L619.43 694.36 L619.64 694.40 L619.86 694.43 L620.07 694.45 L620.29 694.48 L620.51 694.50 L620.72 694.52 L620.94 694.53 L621.15 694.54 L621.37 694.55 L621.58 694.56 L621.80 694.56 L622.01 695.01 L622.23 695.41 L622.44 695.77 L622.66 696.11 L622.87 696.43 L623.09 696.73 L623.30 697.02 L623.52 697.31 L623.73 697.59 L623.95 697.86 L624.16 698.13 L624.38 698.39 L624.59 698.65 L624.81 698.90 L625.03 699.15 L625.24 699.39 L625.46 699.64 L625.67 699.88 L625.89 700.11 L626.10 700.35 L626.32 700.58 L626.53 700.81 L626.75 701.04 L626.96 701.27 L627.18 701.49 L627.39 701.71 L627.61 701.94 L627.82 702.15 L628.04 702.37 L628.25 702.59 L628.47 702.80 L628.68 703.02 L628.90 703.23 L629.11 703.44 L629.33 703.65 L629.54 703.86 L629.76 704.06 L629.98 704.27 L630.19 704.48 L630.41 704.68 L630.62 704.88 L630.84 705.08 L631.05 705.28 L631.27 705.48 L631.48 705.68 L631.70 705.88 L631.91 706.08 L632.13 706.28 L632.34 706.47 L632.56 706.67 L632.77 706.86 L632.99 707.05 L633.20 707.25 L633.42 707.44 L633.63 707.53 L633.85 707.32 L634.06 707.11 L634.28 706.91 L634.50 706.71 L634.71 706.52 L634.93 706.33 L635.14 706.15 L635.36 705.97 L635.57 705.79 L635.79 705.62 L636.00 705.46 L636.22 705.30 L636.43 705.14 L636.65 704.99 L636.86 704.84 L637.08 704.70 L637.29 704.57 L637.51 704.44 L637.72 704.31 L637.94 704.20 L638.15 704.08 L638.37 703.98 L638.58 703.88 L638.80 703.79 L639.02 703.70 L639.23 703.62 L639.45 703.56 L639.66 703.50 L639.88 703.45 L640.09 703.41 L640.31 703.38 L640.52 703.53 L640.74 703.70 L640.95 703.85 L641.17 703.98 L641.38 704.11 L641.60 704.24 L641.81 704.36 L642.03 704.47 L642.24 704.58 L642.46 704.69 L642.67 704.80 L642.89 704.91 L643.10 705.01 L643.32 705.11 L643.53 705.22 L643.75 705.32 L643.97 705.41 L644.18 705.51 L644.40 705.61 L644.61 705.70 L644.83 705.80 L645.04 705.89 L645.26 705.98 L645.47 706.07 L645.69 706.16 L645.90 706.25 L646.12 706.34 L646.33 706.43 L646.55 706.52 L646.76 706.61 L646.98 706.69 L647.19 706.78 L647.41 706.87 L647.62 706.95 L647.84 707.03 L648.05 707.12 L648.27 707.20 L648.49 707.29 L648.70 707.37 L648.92 707.45 L649.13 707.53 L649.35 707.61 L649.56 707.70 L649.78 707.78 L649.99 707.86 L650.21 707.94 L650.42 708.02 L650.64 708.10 L650.85 708.18 L651.07 708.25 L651.28 708.33 L651.50 708.41 L651.71 708.49 L651.93 708.57 L652.14 708.64 L652.36 708.72 L652.57 708.80 L652.79 708.87 L653.01 708.95 L653.22 709.02 L653.44 709.10 L653.65 709.18 L653.87 709.25 L654.08 709.33 L654.30 709.40 L654.51 709.47 L654.73 709.55 L654.94 709.62 L655.16 709.70 L655.37 709.77 L655.59 709.84 L655.80 709.92 L656.02 709.99 L656.23 710.06 L656.45 710.04 L656.66 709.91 L656.88 709.78 L657.09 709.65 L657.31 709.53 L657.52 709.41 L657.74 709.29 L657.96 709.17 L658.17 709.05 L658.39 708.94 L658.60 708.83 L658.82 708.73 L659.03 708.62 L659.25 708.52 L659.46 708.42 L659.68 708.33 L659.89 708.23 L660.11 708.14 L660.32 708.06 L660.54 707.97 L660.75 707.89 L660.97 707.82 L661.18 707.74 L661.40 707.67 L661.61 707.60 L661.83 707.54 L662.04 707.48 L662.26 707.42 L662.48 707.37 L662.69 707.32 L662.91 707.28 L663.12 707.24 L663.34 707.21 L663.55 707.19 L663.77 707.17 L663.98 707.22 L664.20 707.39 L664.41 707.54 L664.63 707.67 L664.84 707.79 L665.06 707.91 L665.27 708.02 L665.49 708.13 L665.70 708.24 L665.92 708.35 L666.13 708.45 L666.35 708.55 L666.56 708.65 L666.78 708.74 L666.99 708.84 L667.21 708.93 L667.43 709.02 L667.64 709.12 L667.86 709.21 L668.07 709.30 L668.29 709.38 L668.50 709.47 L668.72 709.56 L668.93 709.64 L669.15 709.55 L669.36 709.32 L669.58 709.10 L669.79 708.89 L670.01 708.67 L670.22 708.47 L670.44 708.26 L670.65 708.06 L670.87 707.87 L671.08 707.67 L671.30 707.49 L671.51 707.31 L671.73 707.13 L671.95 706.95 L672.16 706.79 L672.38 706.62 L672.59 706.46 L672.81 706.31 L673.02 706.16 L673.24 706.02 L673.45 705.88 L673.67 705.75 L673.88 705.62 L674.10 705.50 L674.31 705.39 L674.53 705.28 L674.74 705.17 L674.96 705.08 L675.17 704.99 L675.39 704.91 L675.60 704.84 L675.82 704.78 L676.03 704.72 L676.25 704.68 L676.47 704.65 L676.68 704.64 L676.90 704.65 L677.11 704.67 L677.33 704.69 L677.54 704.73 L677.76 704.78 L677.97 704.83 L678.19 704.90 L678.40 704.97 L678.62 705.05 L678.83 705.14 L679.05 705.23 L679.26 705.33 L679.48 705.43 L679.69 705.53 L679.91 705.64 L680.12 705.75 L680.34 705.87 L680.55 705.98 L680.77 706.09 L680.98 706.20 L681.20 706.31 L681.42 706.41 L681.63 706.51 L681.85 706.61 L682.06 706.70 L682.28 706.78 L682.49 706.86 L682.71 706.93 L682.92 706.99 L683.14 707.04 L683.35 707.08 L683.57 707.12 L683.78 707.14 L684.00 707.16 L684.21 707.21 L684.43 707.69 L684.64 708.06 L684.86 708.40 L685.07 708.72 L685.29 709.01 L685.50 709.30 L685.72 709.58 L685.94 709.85 L686.15 710.12 L686.37 710.37 L686.58 710.63 L686.80 710.88 L687.01 711.12 L687.23 711.36 L687.44 711.60 L687.66 711.83 L687.87 712.06 L688.09 712.29 L688.30 712.52 L688.52 712.74 L688.73 712.96 L688.95 713.18 L689.16 713.40 L689.38 713.62 L689.59 713.83 L689.81 714.04 L690.02 714.25 L690.24 713.90 L690.46 713.41 L690.67 712.93 L690.89 712.47 L691.10 712.03 L691.32 711.61 L691.53 711.20 L691.75 710.81 L691.96 710.44 L692.18 710.09 L692.39 709.76 L692.61 709.45 L692.82 709.17 L693.04 708.91 L693.25 708.67 L693.47 708.46 L693.68 708.29 L693.90 708.14 L694.11 708.04 L694.33 708.00 L694.54 707.99 L694.76 707.96 L694.97 707.92 L695.19 707.86 L695.41 707.78 L695.62 707.69 L695.84 707.58 L696.05 707.47 L696.27 707.34 L696.48 707.20 L696.70 707.05 L696.91 706.90 L697.13 706.73 L697.34 706.57 L697.56 706.40 L697.77 706.23 L697.99 706.06 L698.20 705.90 L698.42 705.74 L698.63 705.58 L698.85 705.44 L699.06 705.30 L699.28 705.17 L699.49 705.05 L699.71 704.95 L699.93 704.86 L700.14 704.78 L700.36 704.72 L700.57 704.68 L700.79 704.65 L701.00 704.64 L701.22 705.62 L701.43 706.43 L701.65 707.16 L701.86 707.84 L702.08 708.48 L702.29 709.10 L702.51 709.70 L702.72 710.28 L702.94 710.84 L703.15 711.40 L703.37 711.94 L703.58 712.47 L703.80 712.99 L704.01 713.51 L704.23 714.01 L704.45 714.51 L704.66 715.01 L704.88 715.50 L705.09 715.98 L705.31 716.46 L705.52 716.93 L705.74 717.40 L705.95 717.87 L706.17 718.33 L706.38 718.78 L706.60 719.24 L706.81 719.68 L707.03 720.13 L707.24 720.57 L707.46 719.42 L707.67 718.21 L707.89 717.05 L708.10 715.93 L708.32 714.86 L708.53 713.83 L708.75 712.86 L708.96 711.93 L709.18 711.07 L709.40 710.25 L709.61 709.50 L709.83 708.81 L710.04 708.18 L710.26 707.62 L710.47 707.15 L710.69 706.75 L710.90 706.47 L711.12 706.32 L711.33 706.30 L711.55 706.24 L711.76 706.14 L711.98 706.01 L712.19 705.86 L712.41 705.69 L712.62 705.53 L712.84 705.38 L713.05 705.25 L713.27 705.14 L713.48 705.08 L713.70 705.06 L716.07 707.97 L718.26 707.19 L720.32 707.79 L722.24 707.15 L724.06 708.77 L725.77 705.55 L727.40 708.60 L728.94 703.63 L730.41 709.33 L731.81 707.01 L733.16 703.11 L734.45 703.29 L735.68 704.33 L736.87 711.26 L738.02 707.92 L739.12 706.56 L740.19 706.61 L741.22 704.10 L742.22 708.54 L743.19 706.64 L744.12 703.55 L745.03 702.47 L745.92 704.48 L746.78 704.32 L747.62 707.15 L748.43 708.37 L749.23 704.64 L750.00 704.12 L750.76 705.52 L751.49 703.19 L752.21 703.53 L752.92 706.15 L753.61 702.87 L754.28 701.64 L754.94 702.32 L755.59 703.97 L756.22 705.71 L756.84 705.10 L757.45 703.65 L758.04 702.65 L758.63 705.96 L759.20 706.42 L759.77 703.29 L760.32 704.80 L760.87 706.94 L761.40 702.29 L761.93 702.70 L762.44 701.04 L762.95 704.21 L763.45 704.28 L763.94 703.31 L764.43 703.46 L764.91 705.83 L765.38 701.31 L765.84 705.45 L766.30 701.45 L766.75 706.15 L767.19 706.17 L767.63 703.95 L768.06 700.77 L768.48 712.39 L768.90 704.48 L769.31 705.20 L769.72 701.82 L770.13 704.48 L770.52 706.67 L770.92 705.24 L771.31 701.61 L771.69 701.09 L772.07 706.85 L772.44 700.13 L772.81 702.04 L773.18 700.51 L773.54 705.27 L773.89 703.76 L774.25 703.28 L774.59 699.79 L774.94 711.46 L775.28 705.58 L775.62 709.33 L775.95 704.06 L776.28 705.72 L776.61 702.84 L776.93 705.04 L777.25 703.78 L777.57 705.08 L777.88 703.61 L778.19 704.76 L778.50 704.22 L778.81 702.83 L779.11 701.60 L779.41 703.00 L779.70 703.17 L779.99 704.66 L780.28 701.54 L780.57 702.73 L780.86 704.33 L781.14 703.75 L781.42 708.58 L781.70 700.43 L781.97 702.09 L782.24 704.73 L782.51 698.98 L782.78 703.16 L783.05 699.93 L783.31 703.00 L783.57 704.44 L783.83 702.99 L784.09 701.49 L784.34 704.52 L784.59 701.16 L784.84 700.71 L785.09 701.82 L785.34 704.02 L785.58 704.64 L785.83 699.70 L786.07 700.35 L786.31 701.20 L786.54 701.68 L786.78 703.84 L787.01 701.38 L787.24 698.71 L787.47 698.76 L787.70 702.07 L787.93 703.44 L788.15 704.51 L788.38 698.58 L788.60 699.90 L788.82 698.68 L789.04 701.18 L789.26 702.47 L789.47 704.37 L789.69 699.57 L789.90 699.42 L790.11 706.89 L790.32 699.39 L790.53 700.42 L790.73 701.50 L790.94 702.97 L791.15 703.18 L791.35 698.72 L791.55 702.71 L791.75 701.00 L791.95 703.85 L792.15 701.69 L792.34 703.11 L792.54 700.99 L792.73 699.35 L792.93 703.20 L793.12 702.55 L793.31 703.68 L793.50 704.15 L793.69 702.96 L793.87 703.69 L794.06 700.14 L794.24 700.71 L794.43 702.76 L794.61 698.08 L794.79 698.29 L794.97 698.96 L795.15 702.82 L795.33 698.78 L795.51 702.38 L795.69 702.15 L795.86 700.90 L796.04 698.32 L796.21 701.09 L796.38 702.34 L796.55 701.03 L796.72 701.25 L796.89 700.11 L797.06 703.37 L797.23 703.04 L797.40 700.97 L797.56 698.92 L797.73 700.81 L797.89 697.80 L798.06 700.86 L798.22 702.65 L798.38 700.68 L798.54 697.99 L798.70 700.17 L798.86 703.36 L799.02 700.51 L799.18 700.25 L799.34 703.18 L799.49 699.49 L799.65 701.37 L799.80 698.28 L799.96 697.60 L800.11 698.87 L800.26 699.46 L800.41 701.32 L800.56 702.01 L800.71 700.61 L800.86 698.63 L801.01 700.12 L801.16 699.96 L801.31 698.35 L801.45 701.31 L801.60 700.65 L801.74 701.16 L801.89 698.76 L802.03 702.39 L802.18 699.26 L802.32 703.07 L802.46 703.54 L802.60 698.08 L802.74 701.80 L802.88 697.82 L803.02 699.86 L803.16 697.98 L803.30 701.49 L803.44 703.72 L803.57 702.90 L803.71 697.87 L803.84 701.91 L803.98 701.44 L804.11 697.55 L804.25 697.33 L804.38 700.33 L804.51 698.00 L804.65 698.35 L804.78 703.29 L804.91 697.64 L805.04 709.27 L805.17 701.84 L805.30 699.95 L805.43 699.71 L805.56 697.07 L805.68 702.30 L805.81 699.83 L805.94 699.51 L806.07 697.99 L806.19 697.03 L806.32 701.98 L806.44 702.34 L806.57 699.45 L806.69 700.07 L806.81 701.95 L806.94 702.62 L807.06 701.76 L807.18 699.41 L807.30 702.39 L807.42 701.67 L807.54 699.38 L807.66 697.26 L807.78 699.76 L807.90 704.52 L808.02 700.71 L808.14 702.73 L808.26 698.89 L808.37 700.34 L808.49 699.20 L808.61 700.78 L808.72 701.52 L808.84 696.86 L808.95 701.36 L809.07 699.23 L809.18 703.20 L809.30 697.30 L809.41 702.37 L809.52 699.86 L809.63 700.23 L809.75 700.66 L809.86 697.11 L809.97 701.40 L810.08 708.68 L810.19 699.57 L810.30 699.72 L810.41 696.95 L810.52 699.23 L810.63 700.33 L810.74 698.36 L810.85 700.08 L810.96 701.05 L811.06 696.62 L811.17 696.79 L811.28 701.27 L811.38 702.16 L811.49 696.81 L811.59 702.44 L811.70 702.18 L811.81 699.48 L811.91 697.99 L812.01 702.36 L812.12 699.39 L812.22 701.58 L812.32 697.15 L812.43 699.29 L812.53 696.74 L812.63 697.18 L812.73 700.60 L812.84 698.03 L812.94 699.02 L813.04 699.71 L813.14 702.36 L813.24 697.85 L813.34 701.96 L813.44 700.27 L813.54 698.03 L813.64 699.87 L813.74 700.30 L813.83 697.50 L813.93 702.46 L814.03 701.82 L814.13 701.77 L814.22 698.95 L814.32 696.90 L814.42 696.71 L814.51 700.50 L814.61 700.21 L814.71 699.24 L814.80 698.38 L814.90 701.49 L814.99 696.96 L815.09 700.12 L815.18 697.53 L815.27 697.81 L815.37 698.50 L815.46 702.40 L815.55 699.61 L815.65 701.95 L815.74 698.47 L815.83 701.65 L815.92 696.65 L816.01 699.17 L816.11 697.99 L816.20 696.58 L816.29 700.27 L816.38 698.00 L816.47 700.45 L816.56 696.97 L816.65 700.64 L816.74 696.80 L816.83 699.64 L816.92 701.96 L817.01 698.79 L817.09 697.95 L817.18 698.54 L817.27 701.65 L817.36 698.28 L817.45 698.29 L817.53 698.43 L817.62 699.54 L817.71 699.38 L817.79 699.51 L817.88 700.74 L817.97 697.73 L818.05 704.89 L818.14 699.52 L818.22 700.04 L818.31 696.33 L818.39 700.88 L818.48 696.43 L818.56 701.57 L818.65 699.89 L818.73 700.59 L818.81 697.43 L818.90 700.70 L818.98 700.69 L819.06 697.99 L819.15 700.09 L819.23 699.24 L819.31 700.30 L819.39 698.42 L819.48 700.03 L819.56 700.90 L819.64 701.41 L819.72 699.84 L819.80 700.28 L819.88 698.45 L819.96 696.71 L820.04 702.03 L820.12 696.83 L820.20 698.45 L820.28 701.87 L820.36 703.13 L820.44 699.83 L820.52 696.87 L820.60 704.24 L820.68 701.46 L820.76 701.58 L820.84 697.09 L820.92 700.23 L820.99 697.11 L821.07 697.47 L821.15 700.46 L821.23 699.14 L821.31 698.70 L821.38 701.26 L821.46 697.82 L821.54 701.69 L821.61 697.04 L821.69 707.85 L821.77 698.06 L821.84 698.88 L821.92 701.86 L821.99 697.12 L822.07 704.23 L822.14 700.63 L822.22 699.42 L822.29 696.58 L822.37 697.22 L822.44 698.83 L822.52 701.83 L822.59 698.94 L822.67 700.42 L822.74 706.81 L822.81 700.73 L822.89 697.25 L822.96 696.15 L823.03 698.49 L823.11 699.22 L823.18 697.43 L823.25 698.14 L823.32 696.08 L823.40 696.82 L823.47 698.81 L823.54 700.73 L823.61 697.44 L823.68 697.40 L823.75 699.98 L823.83 699.80 L823.90 697.94 L823.97 701.55 L824.04 699.57 L824.11 703.33 L824.18 696.93 L824.25 698.32 L824.32 707.96 L824.39 696.72 L824.46 697.24 L824.53 698.81 L824.60 697.53 L824.67 699.60 L824.74 696.65 L824.81 697.46 L824.88 698.93 L824.95 697.46 L825.01 695.95 L825.08 695.96 L825.15 699.82 L825.22 697.89 L825.29 699.08 L825.35 696.77 L825.42 696.12 L825.49 695.79 L825.56 698.01 L825.62 699.39 L825.69 700.48 L825.76 697.39 L825.83 695.40 L825.89 699.70 L825.96 700.26 L826.03 699.12 L826.09 702.82 L826.16 699.37 L826.22 697.65 L826.29 700.23 L826.36 699.11 L826.42 700.08 L826.49 698.70 L826.55 698.39 L826.62 699.73 L826.68 698.48 L826.75 700.49 L826.81 701.17 L826.88 696.46 L826.94 696.75 L827.00 699.59 L827.07 701.05 L827.13 698.11 L827.20 701.32 L827.26 700.88 L827.32 698.71 L827.39 696.84 L827.45 701.42 L827.52 698.95 L827.58 700.35 L827.64 700.80 L827.70 698.76 L827.77 696.31 L827.83 695.61 L827.89 701.53 L827.95 701.04 L828.02 697.06 L828.08 699.76 L828.14 698.84 L828.20 695.21 L828.26 698.05 L828.33 697.53 L828.39 696.18 L828.45 696.74 L828.51 697.17 L828.57 695.31 L828.63 695.98 L828.69 698.84 L828.75 697.65 L828.82 699.39 L828.88 699.78 L828.94 701.31 L829.00 700.42 L829.06 697.77 L829.12 700.73 L829.18 698.33 L829.24 700.71 L829.30 695.36 L829.36 700.68 L829.42 698.77 L829.48 696.92 L829.54 695.43 L829.59 697.80 L829.65 697.48 L829.71 705.27 L829.77 696.48 L829.83 697.46 L829.89 695.39 L829.95 701.05 L830.01 700.41 L830.06 700.02 L830.12 699.65 L830.18 700.63 L830.24 699.92 L830.30 698.31 L830.35 694.93 L830.41 696.80 L830.47 695.31 L830.53 700.05 L830.58 697.15 L830.64 695.19 L830.70 706.73 L830.76 698.03 L830.81 701.04 L830.87 696.18 L830.93 700.69 L830.98 696.10 L831.04 697.10 L831.10 695.94 L831.15 701.13 L831.21 698.84 L831.26 700.39 L831.32 700.68 L831.38 696.81 L831.43 700.31 L831.49 695.68 L831.54 700.73 L831.60 695.32 L831.65 696.75 L831.71 696.05 L831.76 696.29 L831.82 699.78 L831.87 698.97 L831.93 698.51 L831.98 696.68 L832.04 698.99 L832.09 698.81 L832.15 700.97 L832.20 698.10 L832.26 695.05 L832.31 696.55 L832.37 699.82 L832.42 696.55 L832.47 696.30 L832.53 698.20 L832.58 700.39 L832.64 694.94 L832.69 699.46 L832.74 700.58 L832.80 695.85 L832.85 698.78 L832.90 698.86 L832.96 697.96 L833.01 700.03 L833.06 697.98 L833.11 695.79 L833.17 695.73 L833.22 696.17 L833.27 699.55 L833.32 699.66 L833.38 697.75 L833.43 698.32 L833.48 694.89 L833.53 699.16 L833.59 700.15 L833.64 695.61 L833.69 703.44 L833.74 697.42 L833.79 699.67 L833.85 700.35 L833.90 698.05 L833.95 696.12 L834.00 696.58 L834.05 702.03 L834.10 697.92 L834.15 698.32 L834.20 699.77 L834.26 696.20 L834.31 698.95 L834.36 699.55 L834.41 702.73 L834.46 695.94 L834.51 694.84 L834.56 699.37 L834.61 695.48 L834.66 699.26 L834.71 701.42 L834.76 695.45 L834.81 696.43 L834.86 695.03 L834.91 707.11 L834.96 699.16 L835.01 696.13 L835.06 696.05 L835.11 700.40 L835.16 696.65 L835.21 698.37 L835.26 702.60 L835.31 694.88 L835.36 698.88 L835.40 698.22 L835.45 697.41 L835.50 699.81 L835.55 699.41 L835.60 696.67 L835.65 697.94 L835.70 695.76 L835.75 697.42 L835.80 697.29 L835.84 698.74 L835.89 695.75 L835.94 694.92 L835.99 696.74 L836.04 694.57 L836.08 696.10 L836.13 700.26 L836.18 696.13 L836.23 695.40 L836.28 696.70 L836.32 698.98 L836.37 694.55 L836.42 696.84 L836.47 699.97 L836.51 699.27 L836.56 694.75 L836.61 695.90 L836.66 700.58 L836.70 694.59 L836.75 697.06 L836.80 695.24 L836.84 696.02 L836.89 698.58 L836.94 695.67 L836.98 698.86 L837.03 696.80 L837.08 695.79 L837.12 696.53 L837.17 694.61 L837.22 704.16 L837.26 699.44 L837.31 696.22 L837.35 700.13 L837.40 698.68 L837.45 700.35 L837.49 695.81 L837.54 694.89 L837.58 696.79 L837.63 702.26 L837.68 697.45 L837.72 695.31 L837.77 697.30 L837.81 698.49 L837.86 694.88 L837.90 696.95 L837.95 697.96 L837.99 697.77 L838.04 694.43 L838.08 696.57 L838.13 702.37 L838.17 703.06 L838.22 697.22 L838.26 695.86 L838.31 701.92 L838.35 697.82 L838.40 698.46 L838.44 697.21 L838.49 700.26 L838.53 697.87 L838.57 699.10 L838.62 698.15 L838.66 696.85 L838.71 699.45 L838.75 696.63 L838.80 694.46 L838.84 697.41 L838.88 696.48 L838.93 695.15 L838.97 695.64 L839.01 695.68 L839.06 703.35 L839.10 695.70 L839.15 698.29 L839.19 698.12 L839.23 699.42 L839.28 696.28 L839.32 699.76 L839.36 698.68 L839.41 698.49 L839.45 699.36 L839.49 698.08 L839.53 697.71 L839.58 695.95 L839.62 697.52 L839.66 695.72 L839.71 695.26 L839.75 694.93 L839.79 699.70 L839.83 698.57 L839.88 696.97 L839.92 697.15 L839.96 699.58 L840.00 694.46 L840.05 697.31 L840.09 696.58 L840.13 695.70 L840.17 696.16 L840.21 698.89 L840.26 699.32 L840.30 696.74 L840.34 698.02 L840.38 699.14 L840.42 696.46 L840.47 695.54 L840.51 694.16 L840.55 700.00 L840.59 694.91 L840.63 696.71 L840.67 696.56 L840.72 700.29 L840.76 704.49 L840.80 694.32 L840.84 698.66 L840.88 694.80 L840.92 694.21 L840.96 697.08 L841.00 695.98 L841.04 699.32 L841.09 696.50 L841.13 698.85 L841.17 696.48 L841.21 697.46 L841.25 694.94 L841.29 694.69 L841.33 695.59 L841.37 694.76 L841.41 694.12 L841.45 694.90 L841.49 695.72 L841.53 697.03 L841.57 695.62 L841.61 699.51 L841.65 695.93 L841.69 695.13 L841.73 700.26 L841.77 699.44 L841.81 696.58 L841.85 696.46 L841.89 703.16 L841.93 697.88 L841.97 699.87 L842.01 700.22 L842.05 699.20 L842.09 695.05 L842.13 700.26 L842.17 694.41 L842.21 698.68 L842.25 697.17 L842.29 700.56 L842.33 694.00 L842.37 699.03 L842.41 698.55 L842.45 698.98 L842.48 698.75 L842.52 694.54 L842.56 696.44 L842.60 695.48 L842.64 694.05 L842.68 695.33 L842.72 696.22 L842.76 699.00 L842.80 697.91 L842.83 695.64 L842.87 695.91 L842.91 695.99 L842.95 695.21 L842.99 697.31 L843.03 694.98 L843.06 694.76 L843.10 696.57 L843.14 702.70 L843.18 695.88 L843.22 699.85 L843.26 699.40 L843.29 698.60 L843.33 700.06 L843.37 699.90 L843.41 696.41 L843.45 694.95 L843.48 698.10 L843.52 695.86 L843.56 696.07 L843.60 694.75 L843.64 696.20 L843.67 695.15 L843.71 699.40 L843.75 697.77 L843.79 697.38 L843.82 699.08 L843.86 696.65 L843.90 696.44 L843.93 695.24 L843.97 697.40 L844.01 693.99 L844.05 696.60 L844.08 697.53 L844.12 694.73 L844.16 700.03 L844.19 695.74 L844.23 700.00 L844.27 699.23 L844.31 700.00 L844.34 695.23 L844.38 697.85 L844.42 698.98 L844.45 696.97 L844.49 694.15 L844.53 698.23 L844.56 698.82 L844.60 697.12 L844.64 694.97 L844.67 697.79 L844.71 697.22 L844.74 696.82 L844.78 698.76 L844.82 698.57 L844.85 699.42 L844.89 694.67 L844.93 694.34 L844.96 701.36 L845.00 698.96 L845.03 694.85 L845.07 699.05 L845.11 699.38 L845.14 699.91 L845.18 697.65 L845.21 698.27 L845.25 697.89 L845.29 693.78 L845.32 695.66 L845.36 695.43 L845.39 698.05 L845.43 694.47 L845.46 696.60 L845.50 694.39 L845.53 697.50 L845.57 694.89 L845.61 698.01 L845.64 695.92 L845.68 696.22 L845.71 697.62 L845.75 698.81 L845.78 696.52 L845.82 699.57 L845.85 698.07 L845.89 697.28 L845.92 699.12 L845.96 699.01 L845.99 696.49 L846.03 696.06 L846.06 697.40 L846.10 694.02 L846.13 695.38 L846.17 699.62 L846.20 697.98 L846.23 695.14 L846.27 694.43 L846.30 695.18 L846.34 695.74 L846.37 698.95 L846.41 697.03 L846.44 699.23 L846.48 695.87 L846.51 698.13 L846.55 695.74 L846.58 699.55 L846.61 703.39 L846.65 695.84 L846.68 695.55 L846.72 697.38 L846.75 699.71 L846.78 696.04 L846.82 697.65 L846.85 699.83 L846.89 702.08 L846.92 697.68 L846.95 699.78 L846.99 695.87 L847.02 696.02 L847.06 694.06 L847.09 697.62 L847.12 698.20 L847.16 698.63 L847.19 698.41 L847.22 696.47 L847.26 705.05 L847.29 699.16 L847.32 701.20 L847.36 696.87 L847.39 698.48 L847.42 696.70 L847.46 697.08 L847.49 694.05 L847.52 695.34 L847.56 695.04 L847.59 693.83 L847.62 696.33 L847.66 696.38 L847.69 694.14 L847.72 694.45 L847.76 696.78 L847.79 697.33 L847.82 699.54 L847.85 693.53 L847.89 698.62 L847.92 697.95 L847.95 696.80 L847.99 699.33 L848.02 699.54 L848.05 698.79 L848.08 701.63 L848.12 695.09 L848.15 699.23 L848.18 696.52 L848.21 699.02 L848.25 697.01 L848.28 699.12 L848.31 695.31 L848.34 695.05 L848.38 696.13 L848.41 695.68 L848.44 696.26 L848.47 704.77 L848.51 702.44 L848.54 695.93 L848.57 694.03 L848.60 695.38 L848.63 694.85 L848.67 696.47 L848.70 701.51 L848.73 693.44 L848.76 699.44 L848.79 697.15 L848.83 695.28 L848.86 697.10 L848.89 696.51 L848.92 698.13 L848.95 699.12 L848.98 695.07 L849.02 696.05 L849.05 695.90 L849.08 697.65 L849.11 699.56 L849.14 695.43 L849.17 698.52 L849.21 697.40 L849.24 704.16 L849.27 703.11 L849.30 699.19 L849.33 693.48 L849.36 698.08 L849.39 693.37 L849.43 695.97 L849.46 699.53 L849.49 693.80 L849.52 696.10 L849.55 695.70 L849.58 696.07 L849.61 695.33 L849.64 693.77 L849.67 698.57 L849.71 696.76 L849.74 694.05 L849.77 699.32 L849.80 699.11 L849.83 695.91 L849.86 698.59 L849.89 698.80 L849.92 693.49 L849.95 695.67 L849.98 699.14 L850.01 697.63 L850.04 698.19 L850.08 697.96 L850.11 696.97 L850.14 695.46 L850.17 695.48 L850.20 696.55 L850.23 696.89 L850.26 695.52 L850.29 696.29 L850.32 695.33 L850.35 694.73 L850.38 697.86 L850.41 694.87 L850.44 704.53 L850.47 697.76 L850.50 697.14 L850.53 699.39 L850.56 696.11 L850.59 694.69 L850.62 693.88 L850.65 698.57 L850.68 703.55 L850.71 696.70 L850.74 694.18 L850.77 698.04 L850.80 693.84 L850.83 694.59 L850.86 696.59 L850.89 693.97 L850.92 696.88 L850.95 699.03 L850.98 695.50 L851.01 697.73 L851.04 698.60 L851.07 694.87 L851.10 693.32 L851.13 694.79 L851.16 694.78 L851.19 696.24 L851.22 694.98 L851.25 696.39 L851.28 694.19 L851.31 698.56 L851.34 696.60 L851.36 696.54 L851.39 698.96 L851.42 694.81 L851.45 705.29 L851.48 698.12 L851.51 696.01 L851.54 697.75 L851.57 696.34 L851.60 695.35 L851.63 699.14 L851.66 699.07 L851.69 693.60 L851.72 693.79 L851.74 693.90 L851.77 695.09 L851.80 693.52 L851.83 693.56 L851.86 702.49 L851.89 697.45 L851.92 698.07 L851.95 693.61 L851.98 694.28 L852.00 695.35 L852.03 694.36 L852.06 695.74 L852.09 693.61 L852.12 696.62 L852.15 696.64 L852.18 695.00 L852.21 697.53 L852.23 699.25 L852.26 698.93 L852.29 698.99 L852.32 701.84 L852.35 697.41 L852.38 696.95 L852.40 693.63 L852.43 699.13 L852.46 698.97 L852.49 699.11 L852.52 698.36 L852.55 697.41 L852.57 696.73 L852.60 698.16 L852.63 698.62 L852.66 699.21 L852.69 695.63 L852.72 695.25 L852.74 703.92 L852.77 696.75 L852.80 695.17 L852.83 695.92 L852.86 698.60 L852.88 693.99 L852.91 696.06 L852.94 695.14 L852.97 697.16 L853.00 696.33 L853.02 698.56 L853.05 694.50 L853.08 695.11 L853.11 697.27 L853.13 696.43 L853.16 697.83 L853.19 694.39 L853.22 699.25 L853.25 695.26 L853.27 699.25 L853.30 693.87 L853.33 697.94 L853.36 697.99 L853.38 694.81 L853.41 697.67 L853.44 698.16 L853.47 701.81 L853.49 693.41 L853.52 693.90 L853.55 698.52 L853.58 698.86 L853.60 698.85 L853.63 697.49 L853.66 694.20 L853.68 697.25 L853.71 697.55 L853.74 695.83 L853.77 693.73 L853.79 698.89 L853.82 694.13 L853.85 693.28 L853.87 694.12 L853.90 696.28 L853.93 696.54 L853.96 696.28 L853.98 693.47 L854.01 693.44 L854.04 697.74 L854.06 696.12 L854.09 695.03 L854.12 694.80 L854.14 699.07 L854.17 696.74 L854.20 695.87 L854.23 698.88 L854.25 693.09 L854.28 695.45 L854.31 699.20 L854.33 697.57 L854.36 693.05 L854.39 697.96 L854.41 697.03 L854.44 694.07 L854.47 700.26 L854.49 699.92 L854.52 695.24 L854.54 696.84 L854.57 695.15 L854.60 696.56 L854.62 696.30 L854.65 694.99 L854.68 694.37 L854.70 698.27 L854.73 693.92 L854.76 699.09 L854.78 693.97 L854.81 694.37 L854.84 693.88 L854.86 694.67 L854.89 697.21 L854.91 696.40 L854.94 698.69 L854.97 695.26 L854.99 701.66 L855.02 696.49 L855.04 695.78 L855.07 696.00 L855.10 696.90 L855.12 694.62 L855.15 693.39 L855.17 694.33 L855.20 697.88 L855.23 698.54 L855.25 695.53 L855.28 698.81 L855.30 695.88 L855.33 698.14 L855.36 695.00 L855.38 694.19 L855.41 697.90 L855.43 698.61 L855.46 697.86 L855.49 697.93 L855.51 693.94 L855.54 694.74 L855.56 698.62 L855.59 701.73 L855.61 697.81 L855.64 698.56 L855.66 696.87 L855.69 702.90 L855.72 699.00 L855.74 694.77 L855.77 697.18 L855.79 699.01 L855.82 693.59 L855.84 693.17 L855.87 697.64 L855.89 698.30 L855.92 698.74 L855.94 695.89 L855.97 695.02 L856.00 699.04 L856.02 694.23 L856.05 697.67 L856.07 696.03 L856.10 694.50 L856.12 696.86 L856.15 698.71 L856.17 698.61 L856.20 694.60 L856.22 696.67 L856.25 697.64 L856.27 694.52 L856.30 695.84 L856.32 704.32 L856.35 695.74 L856.37 694.33 L856.40 696.41 L856.42 694.82 L856.45 698.18 L856.47 696.07 L856.50 696.78 L856.52 695.31 L856.55 695.73 L856.57 693.51 L856.60 697.06 L856.62 696.23 L856.65 698.64 L856.67 694.31 L856.70 699.01 L856.72 693.92 L856.75 693.08 L856.77 696.20 L856.80 697.25 L856.82 694.73 L856.84 696.80 L856.87 695.59 L856.89 693.38 L856.92 698.73 L856.94 693.06 L856.97 694.40 L856.99 695.46 L857.02 695.38 L857.04 697.39 L857.07 696.79 L857.09 696.57 L857.11 703.11 L857.14 693.04 L857.16 692.80 L857.19 695.15 L857.21 693.35 L857.24 698.05 L857.26 696.39 L857.28 698.88 L857.31 694.59 L857.33 698.13 L857.36 695.26 L857.38 698.26 L857.41 697.66 L857.43 695.49 L857.45 695.42 L857.48 694.65 L857.50 695.25 L857.53 697.53 L857.55 695.64 L857.57 695.52 L857.60 698.31 L857.62 697.60 L857.65 696.88 L857.67 694.51 L857.69 698.63 L857.72 696.86 L857.74 696.76 L857.77 697.49 L857.79 698.81 L857.81 697.12 L857.84 700.82 L857.86 694.27 L857.89 694.02 L857.91 698.89 L857.93 698.38 L857.96 702.07 L857.98 697.90 L858.00 696.34 L858.03 697.42 L858.05 696.26 L858.08 697.06 L858.10 696.04 L858.12 693.47 L858.15 694.65 L858.17 698.59 L858.19 696.18 L858.22 695.72 L858.24 696.54 L858.26 696.78 L858.29 697.67 L858.31 693.51 L858.33 695.49 L858.36 698.83 L858.38 698.60 L858.41 697.37 L858.43 694.48 L858.45 696.93 L858.48 694.98 L858.50 694.84 L858.52 692.73 L858.55 696.72 L858.57 694.53 L858.59 698.45 L858.62 693.69 L858.64 693.11 L858.66 697.22 L858.69 695.64 L858.71 692.74 L858.73 697.97 L858.75 696.99 L858.78 694.68 L858.80 693.93 L858.82 694.53 L858.85 697.67 L858.87 696.39 L858.89 693.95 L858.92 696.45 L858.94 698.62 L858.96 695.31 L858.99 697.75 L859.01 696.80 L859.03 694.77 L859.05 693.89 L859.08 698.03 L859.10 694.82 L859.12 697.05 L859.15 702.82 L859.17 703.92 L859.19 696.20 L859.21 692.80 L859.24 698.72 L859.26 697.95 L859.28 698.32 L859.31 702.82 L859.33 694.23 L859.35 696.89 L859.37 695.45 L859.40 696.04 L859.42 694.77 L859.44 694.34 L859.46 692.60 L859.49 696.23 L859.51 693.21 L859.53 695.45 L859.55 694.46 L859.58 697.24 L859.60 696.64 L859.62 695.64 L859.64 694.94 L859.67 695.43 L859.69 695.84 L859.71 698.10 L859.73 692.62 L859.76 692.67 L859.78 696.38 L859.80 693.68 L859.82 697.74 L859.85 696.82 L859.87 695.33 L859.89 695.95 L859.91 698.71 L859.94 697.72 L859.96 694.01 L859.98 695.88 L860.00 694.41 L860.03 695.71 L860.05 692.93 L860.07 692.53 L860.09 694.90 L860.11 693.14 L860.14 698.36 L860.16 697.24 L860.18 696.11 L860.20 695.36 L860.22 696.68 L860.25 695.25 L860.27 694.55 L860.29 696.41 L860.31 699.13 L860.33 693.78 L860.36 697.22 L860.38 698.46 L860.40 693.06 L860.42 694.07 L860.44 696.98 L860.47 692.78 L860.49 703.48 L860.51 693.68 L860.53 698.69 L860.55 698.44 L860.58 694.04 L860.60 693.57 L860.62 696.28 L860.64 692.68 L860.66 694.81 L860.69 693.99 L860.71 693.56 L860.73 698.49 L860.75 694.15 L860.77 696.64 L860.79 698.84 L860.82 694.21 L860.84 696.80 L860.86 696.60 L860.88 694.79 L860.90 695.49 L860.92 701.14 L860.95 695.72 L860.97 697.62 L860.99 694.71 L861.01 693.30 L861.03 698.13 L861.05 695.52 L861.07 697.19 L861.10 693.87 L861.12 696.93 L861.14 697.81 L861.16 698.83 L861.18 697.67 L861.20 697.05 L861.22 696.90 L861.25 703.63 L861.27 693.37 L861.29 697.60 L861.31 694.74 L861.33 692.64 L861.35 696.13 L861.37 692.57 L861.40 694.14 L861.42 693.04 L861.44 696.37 L861.46 693.39 L861.48 694.70 L861.50 695.91 L861.52 694.77 L861.54 692.58 L861.57 693.54 L861.59 692.38 L861.61 696.02 L861.63 695.73 L861.65 693.15 L861.67 696.78 L861.69 696.77 L861.71 692.57 L861.73 694.15 L861.75 697.25 L861.78 698.13 L861.80 694.78 L861.82 697.13 L861.84 698.47 L861.86 697.75 L861.88 696.11 L861.90 697.95 L861.92 697.90 L861.94 697.58 L861.96 698.34 L861.99 694.83 L862.01 693.12 L862.03 692.68 L862.05 694.05 L862.07 696.10 L862.09 695.10 L862.11 698.50 L862.13 694.58 L862.15 693.47 L862.17 693.52 L862.19 694.41 L862.21 697.32 L862.23 699.79 L862.26 698.51 L862.28 692.68 L862.30 693.73 L862.32 696.81 L862.34 698.15 L862.36 694.26 L862.38 694.23 L862.40 695.17 L862.42 693.21 L862.44 698.34 L862.46 696.13 L862.48 692.47 L862.50 693.40 L862.52 695.85 L862.54 698.34 L862.56 698.02 L862.58 700.75 L862.61 696.54 L862.63 697.63 L862.65 692.95 L862.67 692.39 L862.69 692.42 L862.71 692.63 L862.73 693.03 L862.75 697.42 L862.77 692.98 L862.79 696.81 L862.81 695.71 L862.83 697.66 L862.85 698.36 L862.87 697.09 L862.89 695.16 L862.91 700.85 L862.93 696.00 L862.95 695.42 L862.97 698.24 L862.99 696.50 L863.01 697.20 L863.03 695.07 L863.05 697.26 L863.07 698.00 L863.09 694.70 L863.11 694.45 L863.13 692.48 L863.15 692.69 L863.17 693.14 L863.19 694.85 L863.21 697.00 L863.23 694.04 L863.25 697.78 L863.27 692.25 L863.29 695.22 L863.31 693.03 L863.33 696.90 L863.35 702.32 L863.37 694.98 L863.39 692.49 L863.41 694.28 L863.43 697.08 L863.45 692.40 L863.47 695.13 L863.49 697.14 L863.51 692.45 L863.53 695.12 L863.55 697.93 L863.57 696.21 L863.59 697.97 L863.61 696.05 L863.63 696.71 L863.65 697.16 L863.67 701.00 L863.69 695.59 L863.71 697.59 L863.73 695.62 L863.75 693.20 L863.77 696.92 L863.79 694.79 L863.81 696.72 L863.83 692.88 L863.85 693.20 L863.87 695.26 L863.89 694.43 L863.91 693.24 L863.93 695.94 L863.95 696.55 L863.97 695.99 L863.99 695.95 L864.01 698.23 L864.03 696.20 L864.04 694.70 L864.06 696.19 L864.08 694.33 L864.10 697.15 L864.12 697.43 L864.14 696.16 L864.16 694.09 L864.18 697.14 L864.20 694.01 L864.22 692.84 L864.24 696.12 L864.26 692.63 L864.28 696.88 L864.30 697.63 L864.32 695.08 L864.34 693.92 L864.36 693.84 L864.38 692.28 L864.39 697.14 L864.41 693.29 L864.43 692.57 L864.45 695.88 L864.47 700.55 L864.49 694.09 L864.51 700.30 L864.53 698.20 L864.55 697.89 L864.57 695.69 L864.59 697.16 L864.61 695.58 L864.63 692.65 L864.64 693.05 L864.66 695.71 L864.68 698.09 L864.70 696.13 L864.72 696.96 L864.74 693.05 L864.76 694.66 L864.78 696.55 L864.80 695.64 L864.82 697.25 L864.84 692.96 L864.85 698.30 L864.87 694.00 L864.89 694.98 L864.91 693.81 L864.93 694.13 L864.95 697.10 L864.97 701.22 L864.99 697.61 L865.01 699.10 L865.03 695.76 L865.04 694.64 L865.06 693.31 L865.08 693.65 L865.10 692.70 L865.12 693.27 L865.14 695.69 L865.16 704.53 L865.18 694.42 L865.20 697.22 L865.21 693.14 L865.23 697.17 L865.25 693.33 L865.27 693.05 L865.29 697.68 L865.31 695.00 L865.33 694.23 L865.35 696.09 L865.36 696.90 L865.38 694.88 L865.40 694.34 L865.42 696.32 L865.44 694.06 L865.46 692.91 L865.48 699.96 L865.50 692.20 L865.51 694.68 L865.53 697.27 L865.55 699.43 L865.57 693.95 L865.59 695.71 L865.61 694.39 L865.63 692.65 L865.64 702.81 L865.66 696.54 L865.68 692.51 L865.70 693.97 L865.72 696.62 L865.74 694.82 L865.76 694.95 L865.77 693.62 L865.79 697.77 L865.81 698.01 L865.83 693.05 L865.85 693.23 L865.87 692.73 L865.88 694.75 L865.90 696.25 L865.92 697.62 L865.94 695.17 L865.96 699.16 L865.98 694.59 L865.99 695.70 L866.01 692.40 L866.03 696.56 L866.05 693.38 L866.07 697.37 L866.09 695.39 L866.10 695.50 L866.12 692.05 L866.14 694.06 L866.16 694.32 L866.18 692.27 L866.20 693.82 L866.21 692.12 L866.23 692.06 L866.25 694.20 L866.27 695.24 L866.29 697.74 L866.30 695.43 L866.32 694.09 L866.34 695.10 L866.36 697.19 L866.38 696.50 L866.40 694.83 L866.41 695.57 L866.43 697.08 L866.45 692.24 L866.47 695.80 L866.49 697.64 L866.50 700.54 L866.52 697.89 L866.54 695.46 L866.56 696.66 L866.58 696.54 L866.59 697.47 L866.61 698.64 L866.63 697.44 L866.65 693.63 L866.67 696.37 L866.68 692.28 L866.70 695.22 L866.72 700.56 L866.74 692.55 L866.76 697.78 L866.77 694.70 L866.79 696.12 L866.81 693.99 L866.83 694.86 L866.85 695.64 L866.86 697.75 L866.88 697.10 L866.90 693.42 L866.92 695.93 L866.93 694.08 L866.95 693.84 L866.97 697.60 L866.99 696.48 L867.01 692.13 L867.02 693.40 L867.04 697.52 L867.06 692.51 L867.08 697.98 L867.09 694.84 L867.11 696.70 L867.13 693.57 L867.15 696.03 L867.17 695.88 L867.18 697.97 L867.20 693.28 L867.22 697.84 L867.24 697.15 L867.25 697.02 L867.27 692.32 L867.29 697.11 L867.31 692.12 L867.32 702.41 L867.34 697.47 L867.36 694.66 L867.38 696.03 L867.39 694.15 L867.41 692.26 L867.43 696.39 L867.45 694.75 L867.46 694.67 L867.48 695.28 L867.50 691.85 L867.52 693.37 L867.53 693.22 L867.55 696.20 L867.57 696.09 L867.59 703.42 L867.60 696.43 L867.62 694.05 L867.64 692.27 L867.66 692.16 L867.67 697.55 L867.69 695.63 L867.71 697.86 L867.73 698.05 L867.74 691.90 L867.76 695.83 L867.78 695.66 L867.79 691.83 L867.81 695.74 L867.83 695.54 L867.85 696.67 L867.86 694.71 L867.88 694.30 L867.90 699.30 L867.92 698.05 L867.93 693.52 L867.95 692.40 L867.97 694.28 L867.98 695.56 L868.00 696.84 L868.02 697.94 L868.04 695.13 L868.05 691.87 L868.07 697.42 L868.09 694.86 L868.10 693.45 L868.12 692.19 L868.14 693.57 L868.16 696.63 L868.17 695.52 L868.19 696.44 L868.21 697.80 L868.22 697.06 L868.24 696.65 L868.26 695.34 L868.28 695.57 L868.29 697.86 L868.31 693.45 L868.33 694.18 L868.34 701.86 L868.36 693.13 L868.38 695.58 L868.40 695.94 L868.41 698.00 L868.43 697.56 L868.45 696.94 L868.46 695.41 L868.48 692.37 L868.50 692.55 L868.51 695.07 L868.53 702.78 L868.55 703.48 L868.56 694.87 L868.58 691.91 L868.60 691.98 L868.62 697.57 L868.63 692.47 L868.65 696.15 L868.67 696.59 L868.68 694.34 L868.70 693.47 L868.72 697.33 L868.73 696.58 L868.75 692.92 L868.77 704.05 L868.78 697.91 L868.80 692.11 L868.82 692.03 L868.83 695.64 L868.85 693.58 L868.87 693.11 L868.88 691.89 L868.90 694.36 L868.92 697.70 L868.93 696.92 L868.95 692.36 L868.97 701.35 L868.98 692.02 L869.00 693.17 L869.02 696.95 L869.03 693.24 L869.05 697.79 L869.07 697.52 L869.08 692.02 L869.10 697.43 L869.12 698.97 L869.13 703.39 L869.15 692.21 L869.17 692.97 L869.18 695.57 L869.20 692.30 L869.22 692.04 L869.23 696.77 L869.25 696.87 L869.27 694.16 L869.28 691.70 L869.30 695.06 L869.32 697.65 L869.33 693.08 L869.35 694.71 L869.36 695.16 L869.38 696.04 L869.40 691.99 L869.41 697.56 L869.43 697.22 L869.45 697.87 L869.46 696.24 L869.48 692.98 L869.50 697.66 L869.51 696.72 L869.53 694.66 L869.55 695.71 L869.56 692.50 L869.58 695.71 L869.59 696.86 L869.61 693.57 L869.63 694.75 L869.64 703.25 L869.66 696.74 L869.68 697.39 L869.69 696.87 L869.71 693.01 L869.73 692.00 L869.74 694.62 L869.76 693.47 L869.77 697.10 L869.79 696.41 L869.81 697.46 L869.82 695.52 L869.84 701.79 L869.85 694.82 L869.87 695.22 L869.89 700.16 L869.90 694.26 L869.92 696.29 L869.94 694.51 L869.95 691.97 L869.97 695.21 L869.98 692.54 L870.00 692.02 L870.02 692.12 L870.03 692.48 L870.05 695.46 L870.06 695.10 L870.08 693.36 L870.10 695.30 L870.11 695.60 L870.13 698.16 L870.15 696.93 L870.16 695.33 L870.18 691.90 L870.19 694.18 L870.21 692.90 L870.23 691.70 L870.24 702.74 L870.26 692.57 L870.27 700.99 L870.29 695.47 L870.31 696.30 L870.32 695.42 L870.34 696.38 L870.35 697.07 L870.37 697.21 L870.39 697.60 L870.40 693.21 L870.42 693.54 L870.43 691.83 L870.45 693.11 L870.46 696.48 L870.48 696.34 L870.50 693.87" fill="none" stroke="#33257a" stroke-width="0.9" stroke-linejoin="round" /><line x1="941.50" y1="607.50" x2="941.50" y2="783.80" stroke="#e6e6e6" stroke-width="1"/><line x1="952.92" y1="607.50" x2="952.92" y2="783.80" stroke="#e6e6e6" stroke-width="1"/><line x1="964.34" y1="607.50" x2="964.34" y2="783.80" stroke="#e6e6e6" stroke-width="1"/><line x1="975.76" y1="607.50" x2="975.76" y2="783.80" stroke="#e6e6e6" stroke-width="1"/><line x1="987.18" y1="607.50" x2="987.18" y2="783.80" stroke="#e6e6e6" stroke-width="1"/><line x1="998.60" y1="607.50" x2="998.60" y2="783.80" stroke="#e6e6e6" stroke-width="1"/><line x1="1010.02" y1="607.50" x2="1010.02" y2="783.80" stroke="#e6e6e6" stroke-width="1"/><line x1="1021.44" y1="607.50" x2="1021.44" y2="783.80" stroke="#e6e6e6" stroke-width="1"/><line x1="1032.86" y1="607.50" x2="1032.86" y2="783.80" stroke="#e6e6e6" stroke-width="1"/><line x1="1044.28" y1="607.50" x2="1044.28" y2="783.80" stroke="#e6e6e6" stroke-width="1"/><line x1="1055.70" y1="607.50" x2="1055.70" y2="783.80" stroke="#e6e6e6" stroke-width="1"/><line x1="1067.12" y1="607.50" x2="1067.12" y2="783.80" stroke="#e6e6e6" stroke-width="1"/><line x1="1078.54" y1="607.50" x2="1078.54" y2="783.80" stroke="#e6e6e6" stroke-width="1"/><line x1="1089.96" y1="607.50" x2="1089.96" y2="783.80" stroke="#e6e6e6" stroke-width="1"/><line x1="1101.38" y1="607.50" x2="1101.38" y2="783.80" stroke="#e6e6e6" stroke-width="1"/><line x1="1112.80" y1="607.50" x2="1112.80" y2="783.80" stroke="#e6e6e6" stroke-width="1"/><line x1="1124.22" y1="607.50" x2="1124.22" y2="783.80" stroke="#e6e6e6" stroke-width="1"/><line x1="941.50" y1="607.50" x2="941.50" y2="783.80" stroke="#b9b9b9" stroke-width="1"/><line x1="998.60" y1="607.50" x2="998.60" y2="783.80" stroke="#b9b9b9" stroke-width="1"/><line x1="1055.70" y1="607.50" x2="1055.70" y2="783.80" stroke="#b9b9b9" stroke-width="1"/><line x1="1112.80" y1="607.50" x2="1112.80" y2="783.80" stroke="#b9b9b9" stroke-width="1"/><line x1="936.00" y1="778.28" x2="1128.90" y2="778.28" stroke="#e6e6e6" stroke-width="1"/><line x1="936.00" y1="770.44" x2="1128.90" y2="770.44" stroke="#e6e6e6" stroke-width="1"/><line x1="936.00" y1="762.60" x2="1128.90" y2="762.60" stroke="#e6e6e6" stroke-width="1"/><line x1="936.00" y1="754.76" x2="1128.90" y2="754.76" stroke="#e6e6e6" stroke-width="1"/><line x1="936.00" y1="746.92" x2="1128.90" y2="746.92" stroke="#e6e6e6" stroke-width="1"/><line x1="936.00" y1="739.08" x2="1128.90" y2="739.08" stroke="#e6e6e6" stroke-width="1"/><line x1="936.00" y1="731.24" x2="1128.90" y2="731.24" stroke="#e6e6e6" stroke-width="1"/><line x1="936.00" y1="723.40" x2="1128.90" y2="723.40" stroke="#e6e6e6" stroke-width="1"/><line x1="936.00" y1="715.56" x2="1128.90" y2="715.56" stroke="#e6e6e6" stroke-width="1"/><line x1="936.00" y1="707.72" x2="1128.90" y2="707.72" stroke="#e6e6e6" stroke-width="1"/><line x1="936.00" y1="699.88" x2="1128.90" y2="699.88" stroke="#e6e6e6" stroke-width="1"/><line x1="936.00" y1="692.04" x2="1128.90" y2="692.04" stroke="#e6e6e6" stroke-width="1"/><line x1="936.00" y1="684.20" x2="1128.90" y2="684.20" stroke="#e6e6e6" stroke-width="1"/><line x1="936.00" y1="676.36" x2="1128.90" y2="676.36" stroke="#e6e6e6" stroke-width="1"/><line x1="936.00" y1="668.52" x2="1128.90" y2="668.52" stroke="#e6e6e6" stroke-width="1"/><line x1="936.00" y1="660.68" x2="1128.90" y2="660.68" stroke="#e6e6e6" stroke-width="1"/><line x1="936.00" y1="652.84" x2="1128.90" y2="652.84" stroke="#e6e6e6" stroke-width="1"/><line x1="936.00" y1="645.00" x2="1128.90" y2="645.00" stroke="#e6e6e6" stroke-width="1"/><line x1="936.00" y1="637.16" x2="1128.90" y2="637.16" stroke="#e6e6e6" stroke-width="1"/><line x1="936.00" y1="629.32" x2="1128.90" y2="629.32" stroke="#e6e6e6" stroke-width="1"/><line x1="936.00" y1="621.48" x2="1128.90" y2="621.48" stroke="#e6e6e6" stroke-width="1"/><line x1="936.00" y1="613.64" x2="1128.90" y2="613.64" stroke="#e6e6e6" stroke-width="1"/><line x1="936.00" y1="645.00" x2="1128.90" y2="645.00" stroke="#b9b9b9" stroke-width="1"/><text x="932.00" y="648.00" font-size="8.3" fill="#5a5a5a" text-anchor="end" >500.00m</text><line x1="936.00" y1="684.20" x2="1128.90" y2="684.20" stroke="#b9b9b9" stroke-width="1"/><text x="932.00" y="687.20" font-size="8.3" fill="#5a5a5a" text-anchor="end" >0.00</text><line x1="936.00" y1="723.40" x2="1128.90" y2="723.40" stroke="#b9b9b9" stroke-width="1"/><text x="932.00" y="726.40" font-size="8.3" fill="#5a5a5a" text-anchor="end" >-500.00m</text><line x1="936.00" y1="762.60" x2="1128.90" y2="762.60" stroke="#b9b9b9" stroke-width="1"/><text x="932.00" y="765.60" font-size="8.3" fill="#5a5a5a" text-anchor="end" >-1.00</text><line x1="936.00" y1="625.40" x2="1128.90" y2="625.40" stroke="#cdcdcd" stroke-width="1"/><text x="1133.40" y="628.40" font-size="8.3" fill="#5a5a5a" text-anchor="start" >1.50</text><line x1="936.00" y1="660.40" x2="1128.90" y2="660.40" stroke="#cdcdcd" stroke-width="1"/><text x="1133.40" y="663.40" font-size="8.3" fill="#5a5a5a" text-anchor="start" >1.00</text><line x1="936.00" y1="695.40" x2="1128.90" y2="695.40" stroke="#cdcdcd" stroke-width="1"/><text x="1133.40" y="698.40" font-size="8.3" fill="#5a5a5a" text-anchor="start" >500.00m</text><line x1="936.00" y1="730.40" x2="1128.90" y2="730.40" stroke="#cdcdcd" stroke-width="1"/><text x="1133.40" y="733.40" font-size="8.3" fill="#5a5a5a" text-anchor="start" >0.00</text><line x1="936.00" y1="765.40" x2="1128.90" y2="765.40" stroke="#cdcdcd" stroke-width="1"/><text x="1133.40" y="768.40" font-size="8.3" fill="#5a5a5a" text-anchor="start" >-500.00m</text><line x1="936.00" y1="607.50" x2="936.00" y2="783.80" stroke="#707070" stroke-width="1.2"/><line x1="936.00" y1="783.80" x2="1128.90" y2="783.80" stroke="#707070" stroke-width="1.2"/><line x1="1128.90" y1="607.50" x2="1128.90" y2="783.80" stroke="#707070" stroke-width="1.2"/><text x="944.00" y="795.80" font-size="8.3" fill="#5a5a5a" text-anchor="middle" >0.00</text><text x="998.60" y="795.80" font-size="8.3" fill="#5a5a5a" text-anchor="middle" >500.00m</text><text x="1055.70" y="795.80" font-size="8.3" fill="#5a5a5a" text-anchor="middle" >1.00</text><text x="1112.80" y="795.80" font-size="8.3" fill="#5a5a5a" text-anchor="middle" >1.50</text><text x="1028.00" y="810.00" font-size="9.8" fill="#444" text-anchor="middle" >Time(s)</text><text x="1033.80" y="588.00" font-size="10" fill="#333" text-anchor="middle" >Impulse Response</text><text transform="translate(887 699.65) rotate(-90)" font-size="9.6" fill="#444" text-anchor="middle">Impulse Response(V/FS)</text><text transform="translate(1176.5 690) rotate(90)" font-size="9.8" fill="#444" text-anchor="middle">Window</text><circle cx="1082.9" cy="599.5" r="3.6" fill="#1b0560"/><circle cx="1119" cy="599.5" r="3.6" fill="#1b0560"/><text x="1089.2" y="600.8" font-size="5.6" fill="#555">L</text><text x="1124.9" y="600.8" font-size="5.6" fill="#555">R</text><text x="1095.1" y="602.7" font-size="8.6" fill="#333" textLength="13.6" lengthAdjust="spacingAndGlyphs">Ch1</text><text x="1131.7" y="602.7" font-size="8.6" fill="#333" textLength="51.7" lengthAdjust="spacingAndGlyphs">Ch1(Window)</text><line x1="936.00" y1="684.20" x2="1128.90" y2="684.20" stroke="#3e2f84" stroke-width="1.0"/><line x1="966.80" y1="672.50" x2="966.80" y2="718.40" stroke="#3e2f84" stroke-width="1.6"/><path d="M935.79 730.40 L936.44 730.40 L937.08 730.40 L937.73 730.40 L938.37 730.40 L939.02 730.40 L939.66 730.39 L940.31 730.39 L940.95 730.38 L941.60 730.38 L942.24 730.36 L942.89 730.34 L943.54 730.30 L944.18 730.25 L944.83 730.17 L945.47 730.06 L946.12 729.89 L946.76 729.67 L947.41 729.35 L948.05 728.92 L948.70 728.34 L949.35 727.58 L949.99 726.60 L950.64 725.35 L951.28 723.78 L951.93 721.85 L952.57 719.52 L953.22 716.75 L953.86 713.54 L954.51 709.86 L955.15 705.76 L955.80 701.26 L956.45 696.44 L957.09 691.40 L957.74 686.27 L958.38 681.18 L959.03 676.32 L959.67 671.83 L960.32 667.90 L960.96 664.67 L961.61 662.29 L962.25 660.84 L962.90 660.40 L963.55 660.40 L964.19 660.40 L964.84 660.40 L965.48 660.40 L966.13 660.40 L966.77 660.40 L967.42 660.40 L968.06 660.40 L968.71 660.40 L969.35 660.40 L970.00 660.40 L970.65 660.40 L971.29 660.40 L971.94 660.40 L972.58 660.40 L973.23 660.40 L973.87 660.40 L974.52 660.40 L975.16 660.40 L975.81 660.40 L976.46 660.40 L977.10 660.40 L977.75 660.40 L978.39 660.40 L979.04 660.40 L979.68 660.40 L980.33 660.40 L980.97 660.41 L981.62 660.44 L982.26 660.50 L982.91 660.57 L983.56 660.66 L984.20 660.78 L984.85 660.92 L985.49 661.07 L986.14 661.25 L986.78 661.45 L987.43 661.67 L988.07 661.91 L988.72 662.16 L989.36 662.44 L990.01 662.74 L990.66 663.05 L991.30 663.39 L991.95 663.74 L992.59 664.11 L993.24 664.50 L993.88 664.91 L994.53 665.33 L995.17 665.77 L995.82 666.23 L996.46 666.70 L997.11 667.19 L997.76 667.70 L998.40 668.21 L999.05 668.75 L999.69 669.29 L1000.34 669.85 L1000.98 670.43 L1001.63 671.01 L1002.27 671.61 L1002.92 672.22 L1003.57 672.84 L1004.21 673.47 L1004.86 674.11 L1005.50 674.76 L1006.15 675.42 L1006.79 676.09 L1007.44 676.77 L1008.08 677.45 L1008.73 678.14 L1009.37 678.84 L1010.02 679.54 L1010.67 680.25 L1011.31 680.97 L1011.96 681.68 L1012.60 682.41 L1013.25 683.13 L1013.89 683.86 L1014.54 684.59 L1015.18 685.33 L1015.83 686.06 L1016.47 686.80 L1017.12 687.54 L1017.77 688.28 L1018.41 689.01 L1019.06 689.75 L1019.70 690.49 L1020.35 691.22 L1020.99 691.95 L1021.64 692.68 L1022.28 693.41 L1022.93 694.14 L1023.58 694.86 L1024.22 695.57 L1024.87 696.29 L1025.51 697.00 L1026.16 697.70 L1026.80 698.40 L1027.45 699.09 L1028.09 699.78 L1028.74 700.46 L1029.38 701.13 L1030.03 701.80 L1030.68 702.46 L1031.32 703.12 L1031.97 703.76 L1032.61 704.40 L1033.26 705.04 L1033.90 705.66 L1034.55 706.28 L1035.19 706.88 L1035.84 707.48 L1036.48 708.07 L1037.13 708.66 L1037.78 709.23 L1038.42 709.79 L1039.07 710.35 L1039.71 710.90 L1040.36 711.43 L1041.00 711.96 L1041.65 712.48 L1042.29 712.99 L1042.94 713.49 L1043.58 713.98 L1044.23 714.46 L1044.88 714.93 L1045.52 715.40 L1046.17 715.85 L1046.81 716.29 L1047.46 716.73 L1048.10 717.15 L1048.75 717.57 L1049.39 717.97 L1050.04 718.37 L1050.69 718.76 L1051.33 719.14 L1051.98 719.51 L1052.62 719.87 L1053.27 720.22 L1053.91 720.56 L1054.56 720.90 L1055.20 721.22 L1055.85 721.54 L1056.49 721.85 L1057.14 722.15 L1057.79 722.44 L1058.43 722.72 L1059.08 723.00 L1059.72 723.27 L1060.37 723.53 L1061.01 723.78 L1061.66 724.03 L1062.30 724.27 L1062.95 724.50 L1063.59 724.73 L1064.24 724.94 L1064.89 725.15 L1065.53 725.36 L1066.18 725.56 L1066.82 725.75 L1067.47 725.93 L1068.11 726.11 L1068.76 726.28 L1069.40 726.45 L1070.05 726.61 L1070.69 726.77 L1071.34 726.92 L1071.99 727.07 L1072.63 727.21 L1073.28 727.34 L1073.92 727.47 L1074.57 727.60 L1075.21 727.72 L1075.86 727.84 L1076.50 727.95 L1077.15 728.06 L1077.80 728.16 L1078.44 728.26 L1079.09 728.36 L1079.73 728.45 L1080.38 728.54 L1081.02 728.62 L1081.67 728.71 L1082.31 728.78 L1082.96 728.86 L1083.60 728.93 L1084.25 729.00 L1084.90 729.07 L1085.54 729.13 L1086.19 729.19 L1086.83 729.25 L1087.48 729.31 L1088.12 729.36 L1088.77 729.41 L1089.41 729.46 L1090.06 729.51 L1090.70 729.55 L1091.35 729.60 L1092.00 729.64 L1092.64 729.68 L1093.29 729.71 L1093.93 729.75 L1094.58 729.78 L1095.22 729.81 L1095.87 729.85 L1096.51 729.87 L1097.16 729.90 L1097.81 729.93 L1098.45 729.95 L1099.10 729.98 L1099.74 730.00 L1100.39 730.02 L1101.03 730.04 L1101.68 730.06 L1102.32 730.08 L1102.97 730.10 L1103.61 730.12 L1104.26 730.13 L1104.91 730.15 L1105.55 730.16 L1106.20 730.18 L1106.84 730.19 L1107.49 730.20 L1108.13 730.21 L1108.78 730.22 L1109.42 730.23 L1110.07 730.24 L1110.71 730.25 L1111.36 730.26 L1112.01 730.27 L1112.65 730.28 L1113.30 730.28 L1113.94 730.29 L1114.59 730.30 L1115.23 730.30 L1115.88 730.31 L1116.52 730.32 L1117.17 730.32 L1117.81 730.33 L1118.46 730.33 L1119.11 730.33 L1119.75 730.34 L1120.40 730.34 L1121.04 730.35 L1121.69 730.35 L1122.33 730.35 L1122.98 730.36 L1123.62 730.36 L1124.27 730.36 L1124.92 730.36 L1125.56 730.37 L1126.21 730.37 L1126.85 730.37 L1127.50 730.37 L1128.14 730.37 L1128.79 730.38" fill="none" stroke="#3e2f84" stroke-width="1.1" stroke-linejoin="round" /></svg>
</body></html>
